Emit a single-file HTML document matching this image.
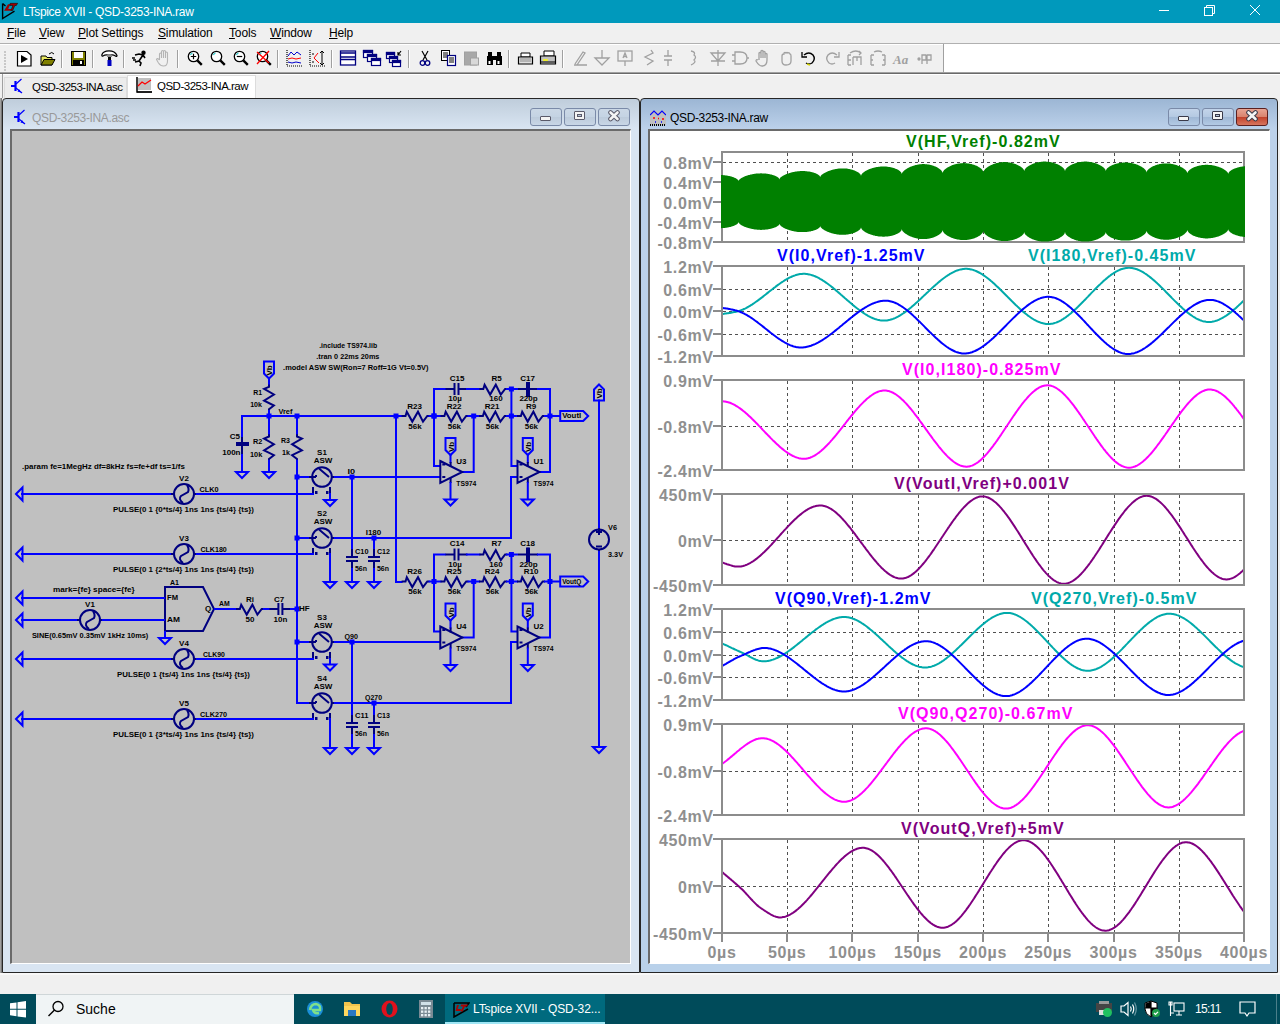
<!DOCTYPE html><html><head><meta charset="utf-8"><style>
*{box-sizing:border-box}
html,body{margin:0;padding:0}
body{width:1280px;height:1024px;overflow:hidden;position:relative;background:#f0f0f0;font-family:"Liberation Sans",sans-serif;}
.abs{position:absolute}
#title{left:0;top:0;width:1280px;height:23px;background:#0099bc;color:#fff;font-size:12px;letter-spacing:-0.3px}
#menu{left:0;top:23px;width:1280px;height:21px;background:#f0f0f0;border-bottom:1px solid #b0b0b0;font-size:12px;color:#000}
#menu span{position:absolute;top:3px;letter-spacing:-0.15px}
#tb{left:0;top:44px;width:943px;height:29px;background:#f0f0f0;border-top:1px solid #fff}
#tbw{left:943px;top:44px;width:337px;height:29px;background:#fff;border-left:1px solid #a0a0a0}
#tabs{left:0;top:73px;width:1280px;height:25px;background:#f0f0f0;}
#mdi{left:0;top:98px;width:1280px;height:875px;background:#f0f0f0;border-left:1px solid #a0a0a0}
#mdi2{left:1px;top:98px;width:1px;height:875px;background:#787878}
#strip{left:0;top:973px;width:1280px;height:21px;background:#f0f0f0;border-top:2px solid #f8f8f8}
.win{border:1px solid #262626;border-radius:4px 4px 0 0;overflow:hidden}
.wl{background:linear-gradient(#bfcddb,#d9e5f2 30px,#d9e5f2)}
.wr{background:linear-gradient(#9cb6d4,#bcd1ea 30px,#b9d1ea)}
.canvas{border-top:2px solid #6a6a6a;border-left:2px solid #6a6a6a;border-right:1px solid #fff;border-bottom:1px solid #fff}
.wt{font-size:12px;letter-spacing:-0.35px}
.tl{font:bold 16px "Liberation Sans",sans-serif;fill:#8f8f8f;letter-spacing:0.6px}
.tt{font:bold 16px "Liberation Sans",sans-serif;letter-spacing:1.05px}
.st{font:bold 8px "Liberation Sans",sans-serif}
.btn{position:absolute;top:9px;width:32px;height:18px;border:1px solid #7a8aa8;border-radius:3px}
</style></head><body><div id="title" class="abs"><span class="abs" style="left:23px;top:5px">LTspice XVII - QSD-3253-INA.raw</span></div><svg class="abs" style="left:0;top:0" width="20" height="20" viewBox="0 0 20 20"><path d="M2.6,3.5 V18.5 L14.5,11.2 M2.6,3.5 L5.5,6" stroke="#000" stroke-width="1.4" fill="none"/><path d="M8,4.2 H10.2 L8.2,9 H11.8 L11,10.8 H4 Z" fill="#a00000"/><path d="M10.2,3.3 H17.7 L16.3,5.5 H14.8 L12.7,10.5 H10.9 L12.9,5.5 H9.8 Z" fill="#a00000" stroke="#000" stroke-width="0.5"/></svg><svg class="abs" style="left:1150px;top:0" width="130" height="22" viewBox="1150 0 130 22" stroke="#fff" fill="none" stroke-width="1"><path d="M1159,10.5 H1169"/><rect x="1204.5" y="7.5" width="8" height="8"/><path d="M1206.5,7.5 V5.5 H1214.5 V13.5 H1212.5"/><path d="M1250,5 L1260,15 M1260,5 L1250,15"/></svg><div id="menu" class="abs"><span style="left:7px"><u style="text-decoration-thickness:1px;text-underline-offset:1px">F</u>ile</span><span style="left:39px"><u style="text-decoration-thickness:1px;text-underline-offset:1px">V</u>iew</span><span style="left:78px"><u style="text-decoration-thickness:1px;text-underline-offset:1px">P</u>lot Settings</span><span style="left:158px"><u style="text-decoration-thickness:1px;text-underline-offset:1px">S</u>imulation</span><span style="left:229px"><u style="text-decoration-thickness:1px;text-underline-offset:1px">T</u>ools</span><span style="left:270px"><u style="text-decoration-thickness:1px;text-underline-offset:1px">W</u>indow</span><span style="left:329px"><u style="text-decoration-thickness:1px;text-underline-offset:1px">H</u>elp</span></div><div id="tb" class="abs"></div><div id="tbw" class="abs"></div><svg class="abs" style="left:0;top:44px" width="943" height="29" viewBox="0 44 943 29"><rect x="4" y="51" width="2" height="2" fill="#c8c8c8"/><rect x="4" y="54" width="2" height="2" fill="#c8c8c8"/><rect x="4" y="57" width="2" height="2" fill="#c8c8c8"/><rect x="4" y="60" width="2" height="2" fill="#c8c8c8"/><rect x="4" y="63" width="2" height="2" fill="#c8c8c8"/><rect x="4" y="66" width="2" height="2" fill="#c8c8c8"/><rect x="4" y="69" width="2" height="2" fill="#c8c8c8"/><rect x="61.0" y="50" width="1" height="18" fill="#a0a0a0"/><rect x="62.0" y="50" width="1" height="18" fill="#fff"/><rect x="92.0" y="50" width="1" height="18" fill="#a0a0a0"/><rect x="93.0" y="50" width="1" height="18" fill="#fff"/><rect x="123.0" y="50" width="1" height="18" fill="#a0a0a0"/><rect x="124.0" y="50" width="1" height="18" fill="#fff"/><rect x="177.0" y="50" width="1" height="18" fill="#a0a0a0"/><rect x="178.0" y="50" width="1" height="18" fill="#fff"/><rect x="277.0" y="50" width="1" height="18" fill="#a0a0a0"/><rect x="278.0" y="50" width="1" height="18" fill="#fff"/><rect x="331.0" y="50" width="1" height="18" fill="#a0a0a0"/><rect x="332.0" y="50" width="1" height="18" fill="#fff"/><rect x="408.0" y="50" width="1" height="18" fill="#a0a0a0"/><rect x="409.0" y="50" width="1" height="18" fill="#fff"/><rect x="508.0" y="50" width="1" height="18" fill="#a0a0a0"/><rect x="509.0" y="50" width="1" height="18" fill="#fff"/><rect x="562.0" y="50" width="1" height="18" fill="#a0a0a0"/><rect x="563.0" y="50" width="1" height="18" fill="#fff"/><g transform="translate(17,51)"><path d="M0.5,0.5 H10 L14,4 V15 H0.5 Z" fill="#fff" stroke="#000" stroke-width="1.2"/><path d="M4,4 L11,8 L4,12 Z" fill="#000"/></g><g transform="translate(40,51)"><path d="M1,5 H6 L7,6.5 H12 V14 H1 Z" fill="#e8e860" stroke="#000" stroke-width="1"/><path d="M1,14 L4,8.5 H15 L12,14 Z" fill="#808000" stroke="#000" stroke-width="1"/><path d="M9,3 Q12,0 14,3" stroke="#000" fill="none" stroke-width="1"/></g><g transform="translate(71,51)"><rect x="0.5" y="0.5" width="14" height="14" fill="#808000" stroke="#000" stroke-width="1"/><rect x="3" y="1" width="9" height="6" fill="#fff"/><rect x="2" y="9" width="11" height="5" fill="#000"/><rect x="9" y="10" width="2" height="3" fill="#fff"/></g><g transform="translate(101,50)"><path d="M0.8,5 Q2,0.8 8,0.8 Q14,0.8 16,5.5 Q16,7 14.5,6 Q12,4.5 10,5 H7 Q4,4.5 2,6 Q0.8,6.5 0.8,5 Z" fill="#fff" stroke="#000" stroke-width="1.2"/><rect x="6" y="5" width="5" height="2" fill="#888"/><rect x="7" y="7" width="3" height="3" fill="#000"/><rect x="6.5" y="10" width="4" height="6" fill="#0000c0"/></g><g transform="translate(132,51)" stroke="#000" stroke-width="1.6" fill="none"><circle cx="11.5" cy="1.8" r="1.4" fill="#000"/><path d="M3,4 L7,3 L11,4 L13,7 M11,4 L7,10 L3,11 M7,10 L9,12 L8,15 M0,7 H3 M1,9 H4"/></g><g transform="translate(156,50)" stroke="#b4b4b4" stroke-width="1.1" fill="none"><path d="M3.5,10 V4 Q3.5,3 4.5,3 Q5.5,3 5.5,4 V8 M5.5,8 V1.5 Q5.5,0.5 6.5,0.5 Q7.5,0.5 7.5,1.5 V8 M7.5,8 V1.5 Q7.5,0.5 8.5,0.5 Q9.5,0.5 9.5,1.5 V8 M9.5,8 V3 Q9.5,2 10.5,2 Q11.5,2 11.5,3 V11 Q11.5,16 7.5,16 Q4.5,16 2.5,13 L0.5,9.5 Q1,8 2.5,9 L3.5,10"/></g><g transform="translate(187,50)"><circle cx="6.5" cy="6.5" r="5.2" fill="#fff" stroke="#000" stroke-width="1.3"/><path d="M3.5,5 Q4,3.5 5.5,3" stroke="#2cc" stroke-width="1.2" fill="none"/><path d="M10.3,10.3 L14.8,14.8" stroke="#000" stroke-width="2.4"/><path d="M3.8,6.5 H9.2 M6.5,3.8 V9.2" stroke="#000" stroke-width="1.2"/></g><g transform="translate(210,50)"><circle cx="6.5" cy="6.5" r="5.2" fill="#fff" stroke="#000" stroke-width="1.3"/><path d="M3.5,5 Q4,3.5 5.5,3" stroke="#2cc" stroke-width="1.2" fill="none"/><path d="M10.3,10.3 L14.8,14.8" stroke="#000" stroke-width="2.4"/></g><g transform="translate(233,50)"><circle cx="6.5" cy="6.5" r="5.2" fill="#fff" stroke="#000" stroke-width="1.3"/><path d="M3.5,5 Q4,3.5 5.5,3" stroke="#2cc" stroke-width="1.2" fill="none"/><path d="M10.3,10.3 L14.8,14.8" stroke="#000" stroke-width="2.4"/><path d="M3.8,6.5 H9.2" stroke="#000" stroke-width="1.2"/></g><g transform="translate(256,50)"><circle cx="6.5" cy="6.5" r="5.2" fill="#fff" stroke="#000" stroke-width="1.3"/><path d="M3.5,5 Q4,3.5 5.5,3" stroke="#2cc" stroke-width="1.2" fill="none"/><path d="M10.3,10.3 L14.8,14.8" stroke="#000" stroke-width="2.4"/><path d="M1,2 L13,13 M13,1 L1,14" stroke="#f00" stroke-width="1.3"/></g><g transform="translate(286,50)"><path d="M1,0 V16 H16" stroke="#000" stroke-width="1.2" fill="none" stroke-dasharray="1,1"/><path d="M2,6 L5,2 L8,5 L11,2 L15,5" stroke="#00c" fill="none"/><path d="M2,9 L6,8 L10,9 L15,8" stroke="#f00" fill="none"/><path d="M2,12 L6,13 L10,12 L15,13" stroke="#00c" fill="none"/></g><g transform="translate(309,50)"><path d="M1,0 V16 H16" stroke="#000" stroke-width="1.2" fill="none" stroke-dasharray="1,1"/><path d="M5,8 L9,3 M5,8 L10,13" stroke="#f00" fill="none"/><path d="M13,1 V15 M11,3 L13,1 L15,3 M11,13 L13,15 L15,13" stroke="#000" fill="none"/><path d="M3,4 H5 M3,12 H5" stroke="#000"/></g><g transform="translate(340,50)" fill="none" stroke="#000080" stroke-width="1.3"><rect x="0.5" y="1" width="15" height="14" fill="#fff"/><path d="M0.5,3 H15.5 M0.5,7 H15.5 M0.5,9.5 H15.5" stroke-width="1.6"/></g><g transform="translate(363,50)" fill="#fff" stroke="#000080" stroke-width="1.2"><rect x="0.5" y="0.5" width="9" height="7"/><rect x="0.5" y="0.5" width="9" height="2" fill="#000080"/><rect x="4.5" y="4.5" width="9" height="7"/><rect x="4.5" y="4.5" width="9" height="2" fill="#000080"/><rect x="8.5" y="8.5" width="9" height="7"/><rect x="8.5" y="8.5" width="9" height="2" fill="#000080"/></g><g transform="translate(386,50)" fill="#fff" stroke="#000080" stroke-width="1.2"><rect x="0.5" y="2.5" width="8" height="6"/><rect x="0.5" y="2.5" width="8" height="2" fill="#000080"/><rect x="3.5" y="6.5" width="8" height="6"/><rect x="3.5" y="6.5" width="8" height="2" fill="#000080"/><rect x="6.5" y="10.5" width="8" height="6"/><rect x="6.5" y="10.5" width="8" height="2" fill="#000080"/><path d="M12,5 L15,1 M12,2 V5 H15" stroke="#000" fill="none"/></g><g transform="translate(420,50)" fill="none"><path d="M2,1 L7,10 M8,1 L3,10" stroke="#000" stroke-width="1.2"/><circle cx="2.5" cy="13" r="2.3" stroke="#000080" stroke-width="1.3"/><circle cx="7.5" cy="13" r="2.3" stroke="#000080" stroke-width="1.3"/></g><g transform="translate(441,50)"><rect x="0.5" y="0.5" width="8" height="10" fill="#fff" stroke="#000"/><path d="M2,3 H7 M2,5 H7 M2,7 H7" stroke="#000"/><rect x="6.5" y="5.5" width="8" height="10" fill="#fff" stroke="#000080" stroke-width="1.2"/><path d="M8,8 H13 M8,10 H13 M8,12 H13" stroke="#000"/></g><g transform="translate(464,50)"><rect x="0.5" y="2" width="12" height="13" fill="#a8a8a8" stroke="#a0a0a0"/><rect x="6.5" y="8" width="8" height="7" fill="#d8d8d8" stroke="#a0a0a0"/></g><g transform="translate(487,50)" fill="#000"><rect x="1" y="2" width="4" height="4"/><rect x="10" y="2" width="4" height="4"/><rect x="0" y="6" width="6" height="9"/><rect x="9" y="6" width="6" height="9"/><rect x="5" y="6" width="5" height="4"/><rect x="1.5" y="11" width="2" height="3" fill="#fff"/><rect x="10.5" y="11" width="2" height="3" fill="#fff"/></g><g transform="translate(518,50)"><path d="M3,3 H12 V7 H3 Z" fill="#fff" stroke="#000"/><path d="M0.5,7 H14.5 V14 H0.5 Z" fill="#e0e0e0" stroke="#000" stroke-width="1.2"/><path d="M2,9 H13 M2,11 H13" stroke="#888"/></g><g transform="translate(540,50)"><path d="M4,1 H14 V6 H4 Z" fill="#fff" stroke="#000"/><path d="M0.5,6 H15.5 V14 H0.5 Z" fill="#c0c0c0" stroke="#000" stroke-width="1.2"/><path d="M3,10 H8" stroke="#ff0" stroke-width="1.5"/><path d="M1,12 H15" stroke="#000"/></g><g transform="translate(572,50)" fill="none" stroke="#a0a0a0" stroke-width="1.3"><path d="M2,15 H15 M3,14 L11,2 L13,3 L5,15"/></g><g transform="translate(594,50)" fill="none" stroke="#a0a0a0" stroke-width="1.3"><path d="M8,0 V8 M1,8 H15 L8,15 Z"/></g><g transform="translate(617,50)" fill="none" stroke="#a0a0a0" stroke-width="1.3"><rect x="1" y="1" width="14" height="10"/><path d="M8,11 V16 M6,8 L8,3 L10,8 M6.5,6.5 H9.5"/></g><g transform="translate(643,50)" fill="none" stroke="#a0a0a0" stroke-width="1.3"><path d="M8,0 L10,3 L2,7 L10,11 L4,15"/></g><g transform="translate(664,50)" fill="none" stroke="#a0a0a0" stroke-width="1.3"><path d="M0,6 H8 M0,10 H8 M4,0 V6 M4,10 V16"/></g><g transform="translate(690,50)" fill="none" stroke="#a0a0a0" stroke-width="1.3"><path d="M1,1 Q6,2 4,5 Q7,7 4,10 Q7,12 1,15"/></g><g transform="translate(710,50)" fill="none" stroke="#a0a0a0" stroke-width="1.3"><path d="M1,3 H15 L8,11 Z M1,11 H15 M8,0 V16"/></g><g transform="translate(732,50)" fill="none" stroke="#a0a0a0" stroke-width="1.3"><path d="M3,2 H8 Q15,2 15,8 Q15,14 8,14 H3 Z M0,5 H3 M0,11 H3 M15,8 H17"/></g><g transform="translate(755,50)" fill="none" stroke="#a0a0a0" stroke-width="1.3"><path d="M4,10 V3 Q5,2 6,3 V8 V1 Q7,0 8,1 V8 V2 Q9,1 10,2 V8 V4 Q11,3 12,4 V10 Q12,16 7,16 Q4,16 1,11 Q1,9 3,10"/></g><g transform="translate(779,50)" fill="none" stroke="#a0a0a0" stroke-width="1.3"><path d="M3,6 Q3,4 5,4 V3 Q6,2 7,3 Q8,2 9,3 Q10,2 11,4 Q12,4 12,6 V11 Q12,15 7,15 Q3,15 3,11 Z"/></g><g transform="translate(801,50)" fill="none" stroke="#000" stroke-width="1.4"><path d="M3,5 Q8,1 12,5 Q15,9 11,13 Q8,15 5,13"/><path d="M1,2 V7 H6" stroke-width="1.3"/><path d="M6,14 L9,15" stroke="#cc0" stroke-width="1.5"/></g><g transform="translate(824,50)" fill="none" stroke="#a0a0a0" stroke-width="1.3"><path d="M13,5 Q8,1 4,5 Q1,9 5,13 Q8,15 11,13 M15,2 V7 H10"/></g><g transform="translate(847,50)" fill="none" stroke="#a0a0a0" stroke-width="1.3"><path d="M1,5 V15 M1,5 H4 M1,10 H4 M1,15 H4 M6,7 V15 M6,7 H14 V15 M10,7 V11 M3,3 Q9,-1 14,3 M12,1 L14,3 L12,5"/></g><g transform="translate(870,50)" fill="none" stroke="#a0a0a0" stroke-width="1.3"><path d="M1,5 V15 M1,5 H4 M1,10 H3 M1,15 H4 M15,5 V15 M15,5 H12 M15,10 H13 M15,15 H12 M4,2 Q8,0 12,2"/></g><text x="893" y="64" font-family="Liberation Serif" font-style="italic" font-weight="bold" font-size="13" fill="#a0a0a0">Aa</text><g transform="translate(916,50)" fill="none" stroke="#a0a0a0" stroke-width="1.3"><circle cx="3" cy="9" r="1" fill="#a0a0a0"/><path d="M6,5 H10 V10 H6 Z M6,5 V14 M11,5 H15 V10 H11 M11,5 V14"/></g></svg><div id="tabs" class="abs"></div><div class="abs" style="left:0;top:72px;width:1280px;height:1px;background:#a0a0a0"></div><div class="abs" style="left:0;top:73px;width:1280px;height:1px;background:#696969"></div><div class="abs" style="left:0;top:74px;width:1280px;height:1px;background:#fff"></div><div class="abs" style="left:2px;top:74px;width:1px;height:24px;background:#a0a0a0"></div><div class="abs" style="left:4px;top:77px;width:123px;height:21px;background:#ececec;border:1px solid #dcdcdc;border-bottom:none"></div><div class="abs" style="left:127px;top:75px;width:129px;height:23px;background:#fff;border:1px solid #dcdcdc;border-bottom:none"></div><svg class="abs" style="left:11px;top:78px" width="14" height="16" viewBox="0 0 14 16"><path d="M0,8 H4 M4.5,3 V13" stroke="#0000ff" stroke-width="2.2"/><path d="M5,6 L10.5,1 M5,10 L11,15" stroke="#0000ff" stroke-width="1.2"/><path d="M8,11 L10,14.5 L6.5,13.5 Z" fill="#0000ff"/></svg><div class="abs" style="left:32px;top:81px;color:#000;font-size:11.5px;letter-spacing:-0.5px">QSD-3253-INA.asc</div><svg class="abs" style="left:136px;top:77px" width="16" height="16" viewBox="0 0 16 16"><rect x="2" y="1" width="13" height="12" fill="#c0c0c0"/><path d="M1,0 V15 H16" stroke="#000" stroke-width="1.5" fill="none"/><path d="M1.5,15 H16" stroke="#000" stroke-width="2" stroke-dasharray="1,1"/><path d="M2,9 L6,5 L9,7 L15,3" stroke="#f00" stroke-width="1.3" fill="none"/></svg><div class="abs" style="left:157px;top:80px;color:#000;font-size:11.5px;letter-spacing:-0.5px">QSD-3253-INA.raw</div><div id="mdi" class="abs"></div><div id="mdi2" class="abs"></div><div class="abs win wl" style="left:2px;top:98px;width:638px;height:875px"></div><svg class="abs" style="left:14px;top:109px" width="14" height="16" viewBox="0 0 14 16"><path d="M0,8 H4 M4.5,3 V13" stroke="#0000ff" stroke-width="2.2"/><path d="M5,6 L10.5,1 M5,10 L11,15" stroke="#0000ff" stroke-width="1.2"/><path d="M8,11 L10,14.5 L6.5,13.5 Z" fill="#0000ff"/></svg><div class="abs wt" style="left:32px;top:111px;color:#999">QSD-3253-INA.asc</div><div class="abs canvas" style="left:10px;top:129px;width:621px;height:835px;background:#c0c0c0"></div><div class="btn" style="left:530px;top:108px;background:linear-gradient(#cbd8e6,#c4d3e3 50%,#bccbdb 50%,#c8d6e6)"></div><div class="abs" style="left:540px;top:116px;width:11px;height:5px;background:#f4f4f4;border:1px solid #5a5a6a;border-radius:1px"></div><div class="btn" style="left:564px;top:108px;background:linear-gradient(#cbd8e6,#c4d3e3 50%,#bccbdb 50%,#c8d6e6)"></div><div class="abs" style="left:574px;top:111px;width:11px;height:9px;background:#f4f4f4;border:1px solid #5a5a6a;border-radius:1px"><div class="abs" style="left:2px;top:2px;width:5px;height:3px;border:1px solid #5a5a6a;background:#b8c8dc"></div></div><div class="btn" style="left:598px;top:108px;background:linear-gradient(#cbd8e6,#c4d3e3 50%,#bccbdb 50%,#c8d6e6)"></div><svg class="abs" style="left:607px;top:110px" width="14" height="12" viewBox="0 0 14 12"><path d="M3.5,2.5 L10.5,9 M10.5,2.5 L3.5,9" stroke="#5a5a6a" stroke-width="4.6" stroke-linecap="round"/><path d="M3.5,2.5 L10.5,9 M10.5,2.5 L3.5,9" stroke="#f4f4f4" stroke-width="2.6" stroke-linecap="round"/></svg><div class="abs win wr" style="left:640px;top:98px;width:638px;height:875px"></div><svg class="abs" style="left:650px;top:110px" width="16" height="16" viewBox="0 0 16 16"><rect x="0" y="1" width="16" height="14" fill="#c0c0c0"/><path d="M0,5 L4,1 L8,5 L12,1 L16,5" stroke="#0000ff" stroke-width="1.2" fill="none"/><path d="M3,8 H5 M12,9 H14 M8,8.5 H9" stroke="#f00" stroke-width="1.3"/><path d="M5,12 H6 M11,12 H12" stroke="#00f" stroke-width="1.3"/><path d="M0,15 H16" stroke="#000" stroke-width="2" stroke-dasharray="1,1"/></svg><div class="abs wt" style="left:670px;top:111px;color:#000">QSD-3253-INA.raw</div><div class="abs canvas" style="left:648px;top:129px;width:622px;height:835px;background:#fff"></div><div class="btn" style="left:1168px;top:108px;background:linear-gradient(#c3d4ea,#b4c9e2 50%,#9fb7d5 50%,#b3cae4)"></div><div class="abs" style="left:1178px;top:116px;width:11px;height:5px;background:#f4f4f4;border:1px solid #3a3a4a;border-radius:1px"></div><div class="btn" style="left:1202px;top:108px;background:linear-gradient(#c3d4ea,#b4c9e2 50%,#9fb7d5 50%,#b3cae4)"></div><div class="abs" style="left:1212px;top:111px;width:11px;height:9px;background:#f4f4f4;border:1px solid #3a3a4a;border-radius:1px"><div class="abs" style="left:2px;top:2px;width:5px;height:3px;border:1px solid #3a3a4a;background:#b8c8dc"></div></div><div class="btn" style="left:1236px;top:108px;border-color:#5a2020;background:linear-gradient(#e8a493,#d8826d 50%,#c0402a 50%,#d7755e)"></div><svg class="abs" style="left:1245px;top:110px" width="14" height="12" viewBox="0 0 14 12"><path d="M3.5,2.5 L10.5,9 M10.5,2.5 L3.5,9" stroke="#3a3a4a" stroke-width="4.6" stroke-linecap="round"/><path d="M3.5,2.5 L10.5,9 M10.5,2.5 L3.5,9" stroke="#f4f4f4" stroke-width="2.6" stroke-linecap="round"/></svg><svg class="abs" style="left:650px;top:131px" width="619" height="833" viewBox="650 131 619 833"><rect x="650" y="131" width="619" height="833" fill="#fff"/><path d="M787.5,153 V241 M852.5,153 V241 M918.5,153 V241 M983.5,153 V241 M1048.5,153 V241 M1114.5,153 V241 M1179.5,153 V241 M723,162.5 H1243 M723,182.5 H1243 M723,202.5 H1243 M723,222.5 H1243" stroke="#505050" stroke-width="1" stroke-dasharray="3,3" fill="none"/><path d="M787.5,267 V355 M852.5,267 V355 M918.5,267 V355 M983.5,267 V355 M1048.5,267 V355 M1114.5,267 V355 M1179.5,267 V355 M723,289.5 H1243 M723,311.5 H1243 M723,334.5 H1243" stroke="#505050" stroke-width="1" stroke-dasharray="3,3" fill="none"/><path d="M787.5,381 V469 M852.5,381 V469 M918.5,381 V469 M983.5,381 V469 M1048.5,381 V469 M1114.5,381 V469 M1179.5,381 V469 M723,426.5 H1243" stroke="#505050" stroke-width="1" stroke-dasharray="3,3" fill="none"/><path d="M787.5,495 V584 M852.5,495 V584 M918.5,495 V584 M983.5,495 V584 M1048.5,495 V584 M1114.5,495 V584 M1179.5,495 V584 M723,540.5 H1243" stroke="#505050" stroke-width="1" stroke-dasharray="3,3" fill="none"/><path d="M787.5,610 V699 M852.5,610 V699 M918.5,610 V699 M983.5,610 V699 M1048.5,610 V699 M1114.5,610 V699 M1179.5,610 V699 M723,632.5 H1243 M723,655.5 H1243 M723,677.5 H1243" stroke="#505050" stroke-width="1" stroke-dasharray="3,3" fill="none"/><path d="M787.5,725 V814 M852.5,725 V814 M918.5,725 V814 M983.5,725 V814 M1048.5,725 V814 M1114.5,725 V814 M1179.5,725 V814 M723,771.5 H1243" stroke="#505050" stroke-width="1" stroke-dasharray="3,3" fill="none"/><path d="M787.5,840 V932 M852.5,840 V932 M918.5,840 V932 M983.5,840 V932 M1048.5,840 V932 M1114.5,840 V932 M1179.5,840 V932 M723,886.5 H1243" stroke="#505050" stroke-width="1" stroke-dasharray="3,3" fill="none"/><path d="M722.0,314.0 L723.0,313.9 L724.0,313.8 L725.0,313.6 L726.0,313.5 L727.0,313.3 L728.0,313.2 L729.0,313.0 L730.0,312.9 L731.0,312.7 L732.0,312.5 L733.0,312.3 L734.0,312.1 L735.0,311.9 L736.0,311.7 L737.0,311.5 L738.0,311.3 L739.0,311.0 L740.0,310.6 L741.0,310.3 L742.0,309.9 L743.0,309.5 L744.0,309.0 L745.0,308.6 L746.0,308.1 L747.0,307.5 L748.0,307.0 L749.0,306.4 L750.0,305.8 L751.0,305.2 L752.0,304.6 L753.0,303.9 L754.0,303.2 L755.0,302.5 L756.0,301.8 L757.0,301.1 L758.0,300.4 L759.0,299.6 L760.0,298.9 L761.0,298.1 L762.0,297.4 L763.0,296.6 L764.0,295.8 L765.0,295.0 L766.0,294.2 L767.0,293.4 L768.0,292.6 L769.0,291.8 L770.0,291.0 L771.0,290.2 L772.0,289.5 L773.0,288.7 L774.0,287.9 L775.0,287.2 L776.0,286.4 L777.0,285.6 L778.0,284.9 L779.0,284.2 L780.0,283.5 L781.0,282.8 L782.0,282.1 L783.0,281.5 L784.0,280.8 L785.0,280.2 L786.0,279.6 L787.0,279.0 L788.0,278.5 L789.0,277.9 L790.0,277.4 L791.0,277.0 L792.0,276.5 L793.0,276.1 L794.0,275.7 L795.0,275.4 L796.0,275.0 L797.0,274.7 L798.0,274.5 L799.0,274.3 L800.0,274.1 L801.0,274.0 L802.0,273.9 L803.0,273.8 L804.0,273.8 L805.0,273.8 L806.0,273.9 L807.0,274.0 L808.0,274.2 L809.0,274.4 L810.0,274.6 L811.0,274.9 L812.0,275.2 L813.0,275.5 L814.0,275.9 L815.0,276.3 L816.0,276.7 L817.0,277.2 L818.0,277.7 L819.0,278.2 L820.0,278.8 L821.0,279.3 L822.0,279.9 L823.0,280.6 L824.0,281.2 L825.0,281.9 L826.0,282.6 L827.0,283.3 L828.0,284.0 L829.0,284.8 L830.0,285.5 L831.0,286.3 L832.0,287.1 L833.0,287.9 L834.0,288.7 L835.0,289.5 L836.0,290.4 L837.0,291.2 L838.0,292.1 L839.0,292.9 L840.0,293.8 L841.0,294.7 L842.0,295.5 L843.0,296.4 L844.0,297.3 L845.0,298.2 L846.0,299.0 L847.0,299.9 L848.0,300.8 L849.0,301.6 L850.0,302.5 L851.0,303.3 L852.0,304.2 L853.0,305.0 L854.0,305.9 L855.0,306.7 L856.0,307.5 L857.0,308.3 L858.0,309.0 L859.0,309.8 L860.0,310.5 L861.0,311.3 L862.0,312.0 L863.0,312.7 L864.0,313.3 L865.0,314.0 L866.0,314.6 L867.0,315.2 L868.0,315.8 L869.0,316.3 L870.0,316.8 L871.0,317.3 L872.0,317.8 L873.0,318.2 L874.0,318.6 L875.0,319.0 L876.0,319.3 L877.0,319.6 L878.0,319.9 L879.0,320.1 L880.0,320.3 L881.0,320.4 L882.0,320.5 L883.0,320.6 L884.0,320.6 L885.0,320.6 L886.0,320.5 L887.0,320.4 L888.0,320.2 L889.0,320.0 L890.0,319.8 L891.0,319.5 L892.0,319.2 L893.0,318.9 L894.0,318.5 L895.0,318.1 L896.0,317.6 L897.0,317.1 L898.0,316.6 L899.0,316.0 L900.0,315.5 L901.0,314.8 L902.0,314.2 L903.0,313.5 L904.0,312.9 L905.0,312.1 L906.0,311.4 L907.0,310.7 L908.0,309.9 L909.0,309.1 L910.0,308.3 L911.0,307.5 L912.0,306.6 L913.0,305.7 L914.0,304.9 L915.0,304.0 L916.0,303.1 L917.0,302.2 L918.0,301.3 L919.0,300.3 L920.0,299.4 L921.0,298.5 L922.0,297.5 L923.0,296.6 L924.0,295.6 L925.0,294.7 L926.0,293.8 L927.0,292.8 L928.0,291.9 L929.0,290.9 L930.0,290.0 L931.0,289.1 L932.0,288.1 L933.0,287.2 L934.0,286.3 L935.0,285.4 L936.0,284.5 L937.0,283.7 L938.0,282.8 L939.0,281.9 L940.0,281.1 L941.0,280.3 L942.0,279.5 L943.0,278.7 L944.0,278.0 L945.0,277.3 L946.0,276.5 L947.0,275.9 L948.0,275.2 L949.0,274.6 L950.0,273.9 L951.0,273.4 L952.0,272.8 L953.0,272.3 L954.0,271.8 L955.0,271.3 L956.0,270.9 L957.0,270.5 L958.0,270.2 L959.0,269.9 L960.0,269.6 L961.0,269.4 L962.0,269.2 L963.0,269.0 L964.0,268.9 L965.0,268.8 L966.0,268.8 L967.0,268.8 L968.0,268.9 L969.0,269.0 L970.0,269.2 L971.0,269.4 L972.0,269.6 L973.0,269.9 L974.0,270.3 L975.0,270.6 L976.0,271.0 L977.0,271.5 L978.0,272.0 L979.0,272.5 L980.0,273.0 L981.0,273.6 L982.0,274.2 L983.0,274.9 L984.0,275.6 L985.0,276.3 L986.0,277.0 L987.0,277.7 L988.0,278.5 L989.0,279.3 L990.0,280.1 L991.0,281.0 L992.0,281.8 L993.0,282.7 L994.0,283.6 L995.0,284.5 L996.0,285.5 L997.0,286.4 L998.0,287.3 L999.0,288.3 L1000.0,289.3 L1001.0,290.3 L1002.0,291.2 L1003.0,292.2 L1004.0,293.2 L1005.0,294.2 L1006.0,295.2 L1007.0,296.2 L1008.0,297.3 L1009.0,298.3 L1010.0,299.3 L1011.0,300.3 L1012.0,301.3 L1013.0,302.2 L1014.0,303.2 L1015.0,304.2 L1016.0,305.2 L1017.0,306.1 L1018.0,307.1 L1019.0,308.0 L1020.0,308.9 L1021.0,309.8 L1022.0,310.7 L1023.0,311.6 L1024.0,312.4 L1025.0,313.2 L1026.0,314.0 L1027.0,314.8 L1028.0,315.6 L1029.0,316.3 L1030.0,317.0 L1031.0,317.7 L1032.0,318.4 L1033.0,319.0 L1034.0,319.6 L1035.0,320.1 L1036.0,320.7 L1037.0,321.2 L1038.0,321.6 L1039.0,322.0 L1040.0,322.4 L1041.0,322.8 L1042.0,323.1 L1043.0,323.3 L1044.0,323.6 L1045.0,323.7 L1046.0,323.9 L1047.0,324.0 L1048.0,324.0 L1049.0,324.0 L1050.0,323.9 L1051.0,323.8 L1052.0,323.7 L1053.0,323.5 L1054.0,323.2 L1055.0,322.9 L1056.0,322.6 L1057.0,322.2 L1058.0,321.8 L1059.0,321.3 L1060.0,320.8 L1061.0,320.3 L1062.0,319.7 L1063.0,319.1 L1064.0,318.4 L1065.0,317.8 L1066.0,317.1 L1067.0,316.3 L1068.0,315.6 L1069.0,314.8 L1070.0,314.0 L1071.0,313.2 L1072.0,312.3 L1073.0,311.4 L1074.0,310.5 L1075.0,309.6 L1076.0,308.7 L1077.0,307.7 L1078.0,306.8 L1079.0,305.8 L1080.0,304.8 L1081.0,303.8 L1082.0,302.8 L1083.0,301.8 L1084.0,300.7 L1085.0,299.7 L1086.0,298.7 L1087.0,297.6 L1088.0,296.6 L1089.0,295.5 L1090.0,294.5 L1091.0,293.4 L1092.0,292.4 L1093.0,291.4 L1094.0,290.3 L1095.0,289.3 L1096.0,288.3 L1097.0,287.3 L1098.0,286.3 L1099.0,285.3 L1100.0,284.4 L1101.0,283.4 L1102.0,282.5 L1103.0,281.5 L1104.0,280.6 L1105.0,279.8 L1106.0,278.9 L1107.0,278.1 L1108.0,277.2 L1109.0,276.4 L1110.0,275.7 L1111.0,274.9 L1112.0,274.2 L1113.0,273.6 L1114.0,272.9 L1115.0,272.3 L1116.0,271.7 L1117.0,271.2 L1118.0,270.6 L1119.0,270.2 L1120.0,269.7 L1121.0,269.3 L1122.0,269.0 L1123.0,268.7 L1124.0,268.4 L1125.0,268.2 L1126.0,268.0 L1127.0,267.9 L1128.0,267.8 L1129.0,267.8 L1130.0,267.8 L1131.0,267.9 L1132.0,268.0 L1133.0,268.2 L1134.0,268.4 L1135.0,268.7 L1136.0,269.0 L1137.0,269.3 L1138.0,269.7 L1139.0,270.1 L1140.0,270.6 L1141.0,271.1 L1142.0,271.6 L1143.0,272.2 L1144.0,272.8 L1145.0,273.5 L1146.0,274.1 L1147.0,274.8 L1148.0,275.6 L1149.0,276.3 L1150.0,277.1 L1151.0,277.9 L1152.0,278.7 L1153.0,279.6 L1154.0,280.4 L1155.0,281.3 L1156.0,282.2 L1157.0,283.1 L1158.0,284.1 L1159.0,285.0 L1160.0,286.0 L1161.0,287.0 L1162.0,287.9 L1163.0,288.9 L1164.0,289.9 L1165.0,290.9 L1166.0,292.0 L1167.0,293.0 L1168.0,294.0 L1169.0,295.0 L1170.0,296.0 L1171.0,297.0 L1172.0,298.1 L1173.0,299.1 L1174.0,300.1 L1175.0,301.1 L1176.0,302.1 L1177.0,303.0 L1178.0,304.0 L1179.0,305.0 L1180.0,305.9 L1181.0,306.8 L1182.0,307.8 L1183.0,308.7 L1184.0,309.5 L1185.0,310.4 L1186.0,311.3 L1187.0,312.1 L1188.0,312.9 L1189.0,313.6 L1190.0,314.4 L1191.0,315.1 L1192.0,315.8 L1193.0,316.5 L1194.0,317.1 L1195.0,317.7 L1196.0,318.3 L1197.0,318.8 L1198.0,319.3 L1199.0,319.7 L1200.0,320.2 L1201.0,320.5 L1202.0,320.9 L1203.0,321.2 L1204.0,321.4 L1205.0,321.6 L1206.0,321.8 L1207.0,321.9 L1208.0,322.0 L1209.0,322.0 L1210.0,322.0 L1211.0,321.9 L1212.0,321.8 L1213.0,321.6 L1214.0,321.4 L1215.0,321.1 L1216.0,320.8 L1217.0,320.5 L1218.0,320.1 L1219.0,319.7 L1220.0,319.2 L1221.0,318.7 L1222.0,318.2 L1223.0,317.6 L1224.0,317.0 L1225.0,316.4 L1226.0,315.8 L1227.0,315.1 L1228.0,314.4 L1229.0,313.6 L1230.0,312.9 L1231.0,312.1 L1232.0,311.3 L1233.0,310.5 L1234.0,309.6 L1235.0,308.8 L1236.0,307.9 L1237.0,307.0 L1238.0,306.1 L1239.0,305.1 L1240.0,304.2 L1241.0,303.3 L1242.0,302.3 L1243.0,301.3 L1244.0,300.4" stroke="#00aaaa" stroke-width="2" fill="none" stroke-linejoin="round"/><path d="M722.0,308.0 L723.0,308.1 L724.0,308.2 L725.0,308.3 L726.0,308.5 L727.0,308.6 L728.0,308.8 L729.0,309.0 L730.0,309.1 L731.0,309.4 L732.0,309.6 L733.0,309.8 L734.0,310.0 L735.0,310.3 L736.0,310.5 L737.0,310.8 L738.0,311.1 L739.0,311.4 L740.0,311.8 L741.0,312.2 L742.0,312.6 L743.0,313.1 L744.0,313.5 L745.0,314.1 L746.0,314.6 L747.0,315.2 L748.0,315.8 L749.0,316.4 L750.0,317.0 L751.0,317.7 L752.0,318.3 L753.0,319.0 L754.0,319.7 L755.0,320.5 L756.0,321.2 L757.0,321.9 L758.0,322.7 L759.0,323.5 L760.0,324.2 L761.0,325.0 L762.0,325.8 L763.0,326.6 L764.0,327.4 L765.0,328.2 L766.0,329.0 L767.0,329.8 L768.0,330.6 L769.0,331.4 L770.0,332.2 L771.0,333.0 L772.0,333.7 L773.0,334.5 L774.0,335.3 L775.0,336.0 L776.0,336.7 L777.0,337.5 L778.0,338.2 L779.0,338.9 L780.0,339.5 L781.0,340.2 L782.0,340.8 L783.0,341.4 L784.0,342.0 L785.0,342.6 L786.0,343.1 L787.0,343.7 L788.0,344.2 L789.0,344.6 L790.0,345.1 L791.0,345.5 L792.0,345.8 L793.0,346.2 L794.0,346.5 L795.0,346.7 L796.0,347.0 L797.0,347.2 L798.0,347.3 L799.0,347.4 L800.0,347.5 L801.0,347.5 L802.0,347.5 L803.0,347.4 L804.0,347.3 L805.0,347.2 L806.0,347.0 L807.0,346.8 L808.0,346.6 L809.0,346.3 L810.0,346.0 L811.0,345.7 L812.0,345.3 L813.0,344.9 L814.0,344.5 L815.0,344.1 L816.0,343.6 L817.0,343.1 L818.0,342.6 L819.0,342.0 L820.0,341.5 L821.0,340.9 L822.0,340.3 L823.0,339.7 L824.0,339.0 L825.0,338.3 L826.0,337.7 L827.0,337.0 L828.0,336.2 L829.0,335.5 L830.0,334.8 L831.0,334.0 L832.0,333.3 L833.0,332.5 L834.0,331.7 L835.0,330.9 L836.0,330.1 L837.0,329.3 L838.0,328.5 L839.0,327.7 L840.0,326.8 L841.0,326.0 L842.0,325.2 L843.0,324.3 L844.0,323.5 L845.0,322.7 L846.0,321.9 L847.0,321.0 L848.0,320.2 L849.0,319.4 L850.0,318.6 L851.0,317.8 L852.0,317.0 L853.0,316.2 L854.0,315.4 L855.0,314.6 L856.0,313.9 L857.0,313.1 L858.0,312.4 L859.0,311.7 L860.0,311.0 L861.0,310.3 L862.0,309.6 L863.0,308.9 L864.0,308.3 L865.0,307.7 L866.0,307.1 L867.0,306.5 L868.0,305.9 L869.0,305.4 L870.0,304.9 L871.0,304.4 L872.0,303.9 L873.0,303.5 L874.0,303.1 L875.0,302.7 L876.0,302.4 L877.0,302.1 L878.0,301.8 L879.0,301.5 L880.0,301.3 L881.0,301.1 L882.0,300.9 L883.0,300.8 L884.0,300.7 L885.0,300.7 L886.0,300.7 L887.0,300.7 L888.0,300.8 L889.0,301.0 L890.0,301.2 L891.0,301.4 L892.0,301.7 L893.0,302.0 L894.0,302.4 L895.0,302.8 L896.0,303.2 L897.0,303.7 L898.0,304.2 L899.0,304.8 L900.0,305.4 L901.0,306.0 L902.0,306.6 L903.0,307.3 L904.0,308.0 L905.0,308.7 L906.0,309.5 L907.0,310.3 L908.0,311.1 L909.0,311.9 L910.0,312.8 L911.0,313.6 L912.0,314.5 L913.0,315.4 L914.0,316.4 L915.0,317.3 L916.0,318.2 L917.0,319.2 L918.0,320.2 L919.0,321.2 L920.0,322.1 L921.0,323.1 L922.0,324.1 L923.0,325.1 L924.0,326.1 L925.0,327.2 L926.0,328.2 L927.0,329.2 L928.0,330.2 L929.0,331.2 L930.0,332.2 L931.0,333.1 L932.0,334.1 L933.0,335.1 L934.0,336.0 L935.0,337.0 L936.0,337.9 L937.0,338.8 L938.0,339.8 L939.0,340.6 L940.0,341.5 L941.0,342.4 L942.0,343.2 L943.0,344.0 L944.0,344.8 L945.0,345.5 L946.0,346.3 L947.0,347.0 L948.0,347.6 L949.0,348.3 L950.0,348.9 L951.0,349.5 L952.0,350.0 L953.0,350.5 L954.0,351.0 L955.0,351.5 L956.0,351.9 L957.0,352.2 L958.0,352.5 L959.0,352.8 L960.0,353.0 L961.0,353.2 L962.0,353.4 L963.0,353.5 L964.0,353.5 L965.0,353.5 L966.0,353.4 L967.0,353.3 L968.0,353.2 L969.0,353.0 L970.0,352.8 L971.0,352.5 L972.0,352.2 L973.0,351.8 L974.0,351.4 L975.0,351.0 L976.0,350.5 L977.0,350.0 L978.0,349.5 L979.0,348.9 L980.0,348.3 L981.0,347.7 L982.0,347.0 L983.0,346.3 L984.0,345.6 L985.0,344.9 L986.0,344.1 L987.0,343.3 L988.0,342.5 L989.0,341.7 L990.0,340.8 L991.0,340.0 L992.0,339.1 L993.0,338.2 L994.0,337.2 L995.0,336.3 L996.0,335.4 L997.0,334.4 L998.0,333.4 L999.0,332.5 L1000.0,331.5 L1001.0,330.5 L1002.0,329.5 L1003.0,328.5 L1004.0,327.5 L1005.0,326.5 L1006.0,325.5 L1007.0,324.4 L1008.0,323.4 L1009.0,322.4 L1010.0,321.4 L1011.0,320.4 L1012.0,319.4 L1013.0,318.4 L1014.0,317.4 L1015.0,316.5 L1016.0,315.5 L1017.0,314.6 L1018.0,313.6 L1019.0,312.7 L1020.0,311.8 L1021.0,310.9 L1022.0,310.0 L1023.0,309.1 L1024.0,308.3 L1025.0,307.5 L1026.0,306.7 L1027.0,305.9 L1028.0,305.1 L1029.0,304.4 L1030.0,303.7 L1031.0,303.0 L1032.0,302.4 L1033.0,301.8 L1034.0,301.2 L1035.0,300.6 L1036.0,300.1 L1037.0,299.6 L1038.0,299.1 L1039.0,298.7 L1040.0,298.4 L1041.0,298.0 L1042.0,297.7 L1043.0,297.4 L1044.0,297.2 L1045.0,297.1 L1046.0,296.9 L1047.0,296.8 L1048.0,296.8 L1049.0,296.8 L1050.0,296.9 L1051.0,297.0 L1052.0,297.2 L1053.0,297.4 L1054.0,297.6 L1055.0,297.9 L1056.0,298.3 L1057.0,298.7 L1058.0,299.1 L1059.0,299.6 L1060.0,300.1 L1061.0,300.7 L1062.0,301.3 L1063.0,301.9 L1064.0,302.6 L1065.0,303.3 L1066.0,304.0 L1067.0,304.8 L1068.0,305.6 L1069.0,306.4 L1070.0,307.2 L1071.0,308.1 L1072.0,309.0 L1073.0,309.9 L1074.0,310.8 L1075.0,311.8 L1076.0,312.7 L1077.0,313.7 L1078.0,314.7 L1079.0,315.7 L1080.0,316.7 L1081.0,317.8 L1082.0,318.8 L1083.0,319.9 L1084.0,320.9 L1085.0,322.0 L1086.0,323.1 L1087.0,324.2 L1088.0,325.2 L1089.0,326.3 L1090.0,327.4 L1091.0,328.5 L1092.0,329.5 L1093.0,330.6 L1094.0,331.7 L1095.0,332.7 L1096.0,333.7 L1097.0,334.8 L1098.0,335.8 L1099.0,336.8 L1100.0,337.8 L1101.0,338.8 L1102.0,339.7 L1103.0,340.6 L1104.0,341.6 L1105.0,342.5 L1106.0,343.3 L1107.0,344.2 L1108.0,345.0 L1109.0,345.8 L1110.0,346.6 L1111.0,347.3 L1112.0,348.0 L1113.0,348.7 L1114.0,349.3 L1115.0,349.9 L1116.0,350.5 L1117.0,351.0 L1118.0,351.5 L1119.0,352.0 L1120.0,352.4 L1121.0,352.8 L1122.0,353.1 L1123.0,353.4 L1124.0,353.6 L1125.0,353.8 L1126.0,353.9 L1127.0,354.0 L1128.0,354.0 L1129.0,354.0 L1130.0,353.9 L1131.0,353.8 L1132.0,353.6 L1133.0,353.4 L1134.0,353.2 L1135.0,352.9 L1136.0,352.5 L1137.0,352.2 L1138.0,351.8 L1139.0,351.3 L1140.0,350.8 L1141.0,350.3 L1142.0,349.8 L1143.0,349.2 L1144.0,348.6 L1145.0,348.0 L1146.0,347.3 L1147.0,346.6 L1148.0,345.9 L1149.0,345.1 L1150.0,344.4 L1151.0,343.6 L1152.0,342.8 L1153.0,341.9 L1154.0,341.1 L1155.0,340.2 L1156.0,339.3 L1157.0,338.4 L1158.0,337.5 L1159.0,336.6 L1160.0,335.6 L1161.0,334.7 L1162.0,333.7 L1163.0,332.8 L1164.0,331.8 L1165.0,330.8 L1166.0,329.8 L1167.0,328.8 L1168.0,327.8 L1169.0,326.9 L1170.0,325.9 L1171.0,324.9 L1172.0,323.9 L1173.0,322.9 L1174.0,321.9 L1175.0,320.9 L1176.0,320.0 L1177.0,319.0 L1178.0,318.1 L1179.0,317.1 L1180.0,316.2 L1181.0,315.3 L1182.0,314.4 L1183.0,313.5 L1184.0,312.7 L1185.0,311.8 L1186.0,311.0 L1187.0,310.2 L1188.0,309.4 L1189.0,308.6 L1190.0,307.9 L1191.0,307.2 L1192.0,306.5 L1193.0,305.8 L1194.0,305.2 L1195.0,304.6 L1196.0,304.0 L1197.0,303.5 L1198.0,303.0 L1199.0,302.5 L1200.0,302.0 L1201.0,301.6 L1202.0,301.3 L1203.0,301.0 L1204.0,300.7 L1205.0,300.4 L1206.0,300.2 L1207.0,300.1 L1208.0,300.0 L1209.0,299.9 L1210.0,299.9 L1211.0,299.9 L1212.0,300.0 L1213.0,300.1 L1214.0,300.3 L1215.0,300.5 L1216.0,300.8 L1217.0,301.1 L1218.0,301.4 L1219.0,301.8 L1220.0,302.2 L1221.0,302.7 L1222.0,303.2 L1223.0,303.7 L1224.0,304.3 L1225.0,304.9 L1226.0,305.5 L1227.0,306.2 L1228.0,306.8 L1229.0,307.5 L1230.0,308.3 L1231.0,309.0 L1232.0,309.8 L1233.0,310.6 L1234.0,311.5 L1235.0,312.3 L1236.0,313.2 L1237.0,314.0 L1238.0,314.9 L1239.0,315.9 L1240.0,316.8 L1241.0,317.7 L1242.0,318.7 L1243.0,319.6 L1244.0,320.6" stroke="#0000ff" stroke-width="2" fill="none" stroke-linejoin="round"/><path d="M722.0,401.3 L723.0,401.3 L724.0,401.4 L725.0,401.5 L726.0,401.7 L727.0,401.9 L728.0,402.2 L729.0,402.5 L730.0,402.8 L731.0,403.2 L732.0,403.7 L733.0,404.1 L734.0,404.6 L735.0,405.2 L736.0,405.8 L737.0,406.4 L738.0,407.0 L739.0,407.7 L740.0,408.4 L741.0,409.1 L742.0,409.9 L743.0,410.7 L744.0,411.5 L745.0,412.3 L746.0,413.2 L747.0,414.1 L748.0,415.0 L749.0,415.9 L750.0,416.8 L751.0,417.8 L752.0,418.8 L753.0,419.7 L754.0,420.7 L755.0,421.7 L756.0,422.8 L757.0,423.8 L758.0,424.8 L759.0,425.9 L760.0,426.9 L761.0,427.9 L762.0,429.0 L763.0,430.1 L764.0,431.1 L765.0,432.2 L766.0,433.2 L767.0,434.2 L768.0,435.3 L769.0,436.3 L770.0,437.3 L771.0,438.4 L772.0,439.4 L773.0,440.4 L774.0,441.3 L775.0,442.3 L776.0,443.3 L777.0,444.2 L778.0,445.1 L779.0,446.0 L780.0,446.9 L781.0,447.8 L782.0,448.6 L783.0,449.4 L784.0,450.2 L785.0,451.0 L786.0,451.7 L787.0,452.4 L788.0,453.1 L789.0,453.7 L790.0,454.3 L791.0,454.9 L792.0,455.5 L793.0,456.0 L794.0,456.4 L795.0,456.9 L796.0,457.3 L797.0,457.6 L798.0,457.9 L799.0,458.2 L800.0,458.4 L801.0,458.6 L802.0,458.7 L803.0,458.8 L804.0,458.8 L805.0,458.8 L806.0,458.7 L807.0,458.5 L808.0,458.3 L809.0,458.0 L810.0,457.7 L811.0,457.3 L812.0,456.9 L813.0,456.4 L814.0,455.9 L815.0,455.3 L816.0,454.7 L817.0,454.0 L818.0,453.3 L819.0,452.6 L820.0,451.8 L821.0,451.0 L822.0,450.1 L823.0,449.2 L824.0,448.3 L825.0,447.3 L826.0,446.3 L827.0,445.3 L828.0,444.2 L829.0,443.2 L830.0,442.1 L831.0,440.9 L832.0,439.8 L833.0,438.6 L834.0,437.5 L835.0,436.3 L836.0,435.1 L837.0,433.8 L838.0,432.6 L839.0,431.3 L840.0,430.1 L841.0,428.8 L842.0,427.6 L843.0,426.3 L844.0,425.0 L845.0,423.8 L846.0,422.5 L847.0,421.2 L848.0,420.0 L849.0,418.7 L850.0,417.5 L851.0,416.2 L852.0,415.0 L853.0,413.8 L854.0,412.6 L855.0,411.4 L856.0,410.2 L857.0,409.0 L858.0,407.9 L859.0,406.8 L860.0,405.7 L861.0,404.6 L862.0,403.6 L863.0,402.6 L864.0,401.6 L865.0,400.7 L866.0,399.7 L867.0,398.8 L868.0,398.0 L869.0,397.2 L870.0,396.4 L871.0,395.7 L872.0,395.0 L873.0,394.3 L874.0,393.7 L875.0,393.2 L876.0,392.7 L877.0,392.2 L878.0,391.8 L879.0,391.4 L880.0,391.1 L881.0,390.9 L882.0,390.7 L883.0,390.6 L884.0,390.5 L885.0,390.5 L886.0,390.6 L887.0,390.7 L888.0,390.9 L889.0,391.1 L890.0,391.5 L891.0,391.8 L892.0,392.3 L893.0,392.7 L894.0,393.3 L895.0,393.9 L896.0,394.5 L897.0,395.2 L898.0,396.0 L899.0,396.8 L900.0,397.6 L901.0,398.5 L902.0,399.4 L903.0,400.3 L904.0,401.3 L905.0,402.4 L906.0,403.4 L907.0,404.5 L908.0,405.6 L909.0,406.8 L910.0,408.0 L911.0,409.2 L912.0,410.4 L913.0,411.7 L914.0,413.0 L915.0,414.3 L916.0,415.6 L917.0,416.9 L918.0,418.2 L919.0,419.6 L920.0,421.0 L921.0,422.3 L922.0,423.7 L923.0,425.1 L924.0,426.5 L925.0,427.9 L926.0,429.3 L927.0,430.7 L928.0,432.1 L929.0,433.5 L930.0,434.9 L931.0,436.2 L932.0,437.6 L933.0,439.0 L934.0,440.3 L935.0,441.6 L936.0,442.9 L937.0,444.2 L938.0,445.5 L939.0,446.8 L940.0,448.0 L941.0,449.2 L942.0,450.4 L943.0,451.6 L944.0,452.7 L945.0,453.8 L946.0,454.8 L947.0,455.9 L948.0,456.9 L949.0,457.8 L950.0,458.7 L951.0,459.6 L952.0,460.4 L953.0,461.2 L954.0,462.0 L955.0,462.7 L956.0,463.3 L957.0,463.9 L958.0,464.5 L959.0,464.9 L960.0,465.4 L961.0,465.7 L962.0,466.1 L963.0,466.3 L964.0,466.5 L965.0,466.6 L966.0,466.7 L967.0,466.7 L968.0,466.6 L969.0,466.5 L970.0,466.2 L971.0,465.9 L972.0,465.6 L973.0,465.2 L974.0,464.7 L975.0,464.1 L976.0,463.5 L977.0,462.9 L978.0,462.2 L979.0,461.4 L980.0,460.6 L981.0,459.7 L982.0,458.8 L983.0,457.8 L984.0,456.8 L985.0,455.8 L986.0,454.7 L987.0,453.6 L988.0,452.4 L989.0,451.2 L990.0,450.0 L991.0,448.7 L992.0,447.4 L993.0,446.1 L994.0,444.7 L995.0,443.4 L996.0,442.0 L997.0,440.6 L998.0,439.1 L999.0,437.7 L1000.0,436.2 L1001.0,434.8 L1002.0,433.3 L1003.0,431.8 L1004.0,430.3 L1005.0,428.8 L1006.0,427.3 L1007.0,425.8 L1008.0,424.3 L1009.0,422.8 L1010.0,421.3 L1011.0,419.8 L1012.0,418.3 L1013.0,416.8 L1014.0,415.3 L1015.0,413.9 L1016.0,412.4 L1017.0,411.0 L1018.0,409.6 L1019.0,408.2 L1020.0,406.9 L1021.0,405.5 L1022.0,404.2 L1023.0,402.9 L1024.0,401.7 L1025.0,400.4 L1026.0,399.3 L1027.0,398.1 L1028.0,397.0 L1029.0,395.9 L1030.0,394.9 L1031.0,393.9 L1032.0,392.9 L1033.0,392.0 L1034.0,391.2 L1035.0,390.4 L1036.0,389.6 L1037.0,388.9 L1038.0,388.3 L1039.0,387.7 L1040.0,387.2 L1041.0,386.7 L1042.0,386.3 L1043.0,386.0 L1044.0,385.7 L1045.0,385.5 L1046.0,385.4 L1047.0,385.3 L1048.0,385.3 L1049.0,385.4 L1050.0,385.6 L1051.0,385.8 L1052.0,386.1 L1053.0,386.4 L1054.0,386.9 L1055.0,387.4 L1056.0,387.9 L1057.0,388.5 L1058.0,389.2 L1059.0,389.9 L1060.0,390.7 L1061.0,391.5 L1062.0,392.3 L1063.0,393.3 L1064.0,394.2 L1065.0,395.2 L1066.0,396.3 L1067.0,397.4 L1068.0,398.5 L1069.0,399.7 L1070.0,400.8 L1071.0,402.1 L1072.0,403.3 L1073.0,404.6 L1074.0,405.9 L1075.0,407.3 L1076.0,408.7 L1077.0,410.1 L1078.0,411.5 L1079.0,412.9 L1080.0,414.3 L1081.0,415.8 L1082.0,417.3 L1083.0,418.8 L1084.0,420.2 L1085.0,421.7 L1086.0,423.3 L1087.0,424.8 L1088.0,426.3 L1089.0,427.8 L1090.0,429.3 L1091.0,430.8 L1092.0,432.3 L1093.0,433.8 L1094.0,435.3 L1095.0,436.8 L1096.0,438.2 L1097.0,439.7 L1098.0,441.1 L1099.0,442.5 L1100.0,443.9 L1101.0,445.3 L1102.0,446.7 L1103.0,448.0 L1104.0,449.3 L1105.0,450.5 L1106.0,451.8 L1107.0,453.0 L1108.0,454.2 L1109.0,455.3 L1110.0,456.4 L1111.0,457.5 L1112.0,458.5 L1113.0,459.5 L1114.0,460.4 L1115.0,461.3 L1116.0,462.1 L1117.0,462.9 L1118.0,463.6 L1119.0,464.3 L1120.0,464.9 L1121.0,465.5 L1122.0,466.0 L1123.0,466.4 L1124.0,466.8 L1125.0,467.1 L1126.0,467.4 L1127.0,467.6 L1128.0,467.7 L1129.0,467.7 L1130.0,467.7 L1131.0,467.6 L1132.0,467.4 L1133.0,467.1 L1134.0,466.8 L1135.0,466.5 L1136.0,466.0 L1137.0,465.6 L1138.0,465.0 L1139.0,464.4 L1140.0,463.7 L1141.0,463.0 L1142.0,462.3 L1143.0,461.5 L1144.0,460.6 L1145.0,459.7 L1146.0,458.8 L1147.0,457.8 L1148.0,456.8 L1149.0,455.7 L1150.0,454.6 L1151.0,453.5 L1152.0,452.3 L1153.0,451.1 L1154.0,449.9 L1155.0,448.6 L1156.0,447.3 L1157.0,446.0 L1158.0,444.7 L1159.0,443.4 L1160.0,442.0 L1161.0,440.6 L1162.0,439.2 L1163.0,437.8 L1164.0,436.4 L1165.0,435.0 L1166.0,433.5 L1167.0,432.1 L1168.0,430.6 L1169.0,429.2 L1170.0,427.7 L1171.0,426.3 L1172.0,424.8 L1173.0,423.4 L1174.0,422.0 L1175.0,420.5 L1176.0,419.1 L1177.0,417.7 L1178.0,416.3 L1179.0,414.9 L1180.0,413.6 L1181.0,412.2 L1182.0,410.9 L1183.0,409.6 L1184.0,408.3 L1185.0,407.1 L1186.0,405.9 L1187.0,404.7 L1188.0,403.5 L1189.0,402.4 L1190.0,401.3 L1191.0,400.2 L1192.0,399.2 L1193.0,398.2 L1194.0,397.3 L1195.0,396.4 L1196.0,395.6 L1197.0,394.8 L1198.0,394.0 L1199.0,393.3 L1200.0,392.7 L1201.0,392.1 L1202.0,391.5 L1203.0,391.1 L1204.0,390.7 L1205.0,390.3 L1206.0,390.0 L1207.0,389.8 L1208.0,389.6 L1209.0,389.5 L1210.0,389.5 L1211.0,389.6 L1212.0,389.7 L1213.0,389.9 L1214.0,390.1 L1215.0,390.4 L1216.0,390.8 L1217.0,391.2 L1218.0,391.7 L1219.0,392.3 L1220.0,392.9 L1221.0,393.5 L1222.0,394.2 L1223.0,395.0 L1224.0,395.8 L1225.0,396.6 L1226.0,397.5 L1227.0,398.5 L1228.0,399.4 L1229.0,400.4 L1230.0,401.5 L1231.0,402.6 L1232.0,403.7 L1233.0,404.9 L1234.0,406.0 L1235.0,407.3 L1236.0,408.5 L1237.0,409.8 L1238.0,411.0 L1239.0,412.4 L1240.0,413.7 L1241.0,415.0 L1242.0,416.4 L1243.0,417.8 L1244.0,419.2" stroke="#ff00ff" stroke-width="2" fill="none" stroke-linejoin="round"/><path d="M722.0,562.5 L723.0,562.8 L724.0,563.1 L725.0,563.5 L726.0,563.8 L727.0,564.2 L728.0,564.5 L729.0,564.8 L730.0,565.1 L731.0,565.4 L732.0,565.7 L733.0,566.0 L734.0,566.2 L735.0,566.4 L736.0,566.5 L737.0,566.6 L738.0,566.6 L739.0,566.6 L740.0,566.5 L741.0,566.4 L742.0,566.2 L743.0,566.0 L744.0,565.7 L745.0,565.4 L746.0,565.0 L747.0,564.6 L748.0,564.1 L749.0,563.6 L750.0,563.1 L751.0,562.5 L752.0,561.9 L753.0,561.3 L754.0,560.6 L755.0,559.9 L756.0,559.1 L757.0,558.4 L758.0,557.5 L759.0,556.7 L760.0,555.9 L761.0,555.0 L762.0,554.1 L763.0,553.1 L764.0,552.2 L765.0,551.2 L766.0,550.2 L767.0,549.2 L768.0,548.2 L769.0,547.2 L770.0,546.1 L771.0,545.1 L772.0,544.0 L773.0,542.9 L774.0,541.8 L775.0,540.7 L776.0,539.6 L777.0,538.5 L778.0,537.4 L779.0,536.3 L780.0,535.2 L781.0,534.0 L782.0,532.9 L783.0,531.8 L784.0,530.7 L785.0,529.6 L786.0,528.6 L787.0,527.5 L788.0,526.4 L789.0,525.4 L790.0,524.3 L791.0,523.3 L792.0,522.3 L793.0,521.3 L794.0,520.3 L795.0,519.3 L796.0,518.4 L797.0,517.5 L798.0,516.6 L799.0,515.7 L800.0,514.9 L801.0,514.1 L802.0,513.3 L803.0,512.5 L804.0,511.8 L805.0,511.1 L806.0,510.4 L807.0,509.8 L808.0,509.2 L809.0,508.7 L810.0,508.2 L811.0,507.7 L812.0,507.3 L813.0,506.9 L814.0,506.5 L815.0,506.3 L816.0,506.0 L817.0,505.8 L818.0,505.7 L819.0,505.6 L820.0,505.5 L821.0,505.5 L822.0,505.6 L823.0,505.7 L824.0,505.9 L825.0,506.2 L826.0,506.5 L827.0,506.9 L828.0,507.3 L829.0,507.8 L830.0,508.4 L831.0,508.9 L832.0,509.6 L833.0,510.3 L834.0,511.0 L835.0,511.8 L836.0,512.6 L837.0,513.5 L838.0,514.4 L839.0,515.3 L840.0,516.3 L841.0,517.3 L842.0,518.4 L843.0,519.5 L844.0,520.6 L845.0,521.7 L846.0,522.9 L847.0,524.1 L848.0,525.3 L849.0,526.5 L850.0,527.7 L851.0,529.0 L852.0,530.3 L853.0,531.6 L854.0,532.9 L855.0,534.2 L856.0,535.6 L857.0,536.9 L858.0,538.3 L859.0,539.6 L860.0,541.0 L861.0,542.3 L862.0,543.7 L863.0,545.0 L864.0,546.4 L865.0,547.7 L866.0,549.1 L867.0,550.4 L868.0,551.7 L869.0,553.0 L870.0,554.3 L871.0,555.6 L872.0,556.9 L873.0,558.1 L874.0,559.3 L875.0,560.5 L876.0,561.7 L877.0,562.9 L878.0,564.0 L879.0,565.1 L880.0,566.1 L881.0,567.2 L882.0,568.2 L883.0,569.1 L884.0,570.1 L885.0,571.0 L886.0,571.8 L887.0,572.6 L888.0,573.4 L889.0,574.1 L890.0,574.8 L891.0,575.4 L892.0,576.0 L893.0,576.5 L894.0,577.0 L895.0,577.4 L896.0,577.7 L897.0,578.0 L898.0,578.3 L899.0,578.4 L900.0,578.6 L901.0,578.6 L902.0,578.6 L903.0,578.5 L904.0,578.3 L905.0,578.1 L906.0,577.8 L907.0,577.4 L908.0,577.0 L909.0,576.5 L910.0,575.9 L911.0,575.3 L912.0,574.6 L913.0,573.9 L914.0,573.1 L915.0,572.3 L916.0,571.4 L917.0,570.5 L918.0,569.5 L919.0,568.5 L920.0,567.4 L921.0,566.3 L922.0,565.2 L923.0,564.0 L924.0,562.8 L925.0,561.6 L926.0,560.3 L927.0,559.0 L928.0,557.7 L929.0,556.3 L930.0,555.0 L931.0,553.6 L932.0,552.1 L933.0,550.7 L934.0,549.3 L935.0,547.8 L936.0,546.3 L937.0,544.8 L938.0,543.3 L939.0,541.8 L940.0,540.3 L941.0,538.8 L942.0,537.3 L943.0,535.8 L944.0,534.2 L945.0,532.7 L946.0,531.2 L947.0,529.7 L948.0,528.2 L949.0,526.8 L950.0,525.3 L951.0,523.9 L952.0,522.4 L953.0,521.0 L954.0,519.6 L955.0,518.3 L956.0,516.9 L957.0,515.6 L958.0,514.3 L959.0,513.0 L960.0,511.8 L961.0,510.6 L962.0,509.4 L963.0,508.3 L964.0,507.2 L965.0,506.2 L966.0,505.2 L967.0,504.2 L968.0,503.3 L969.0,502.4 L970.0,501.6 L971.0,500.9 L972.0,500.2 L973.0,499.5 L974.0,498.9 L975.0,498.4 L976.0,497.9 L977.0,497.5 L978.0,497.1 L979.0,496.8 L980.0,496.6 L981.0,496.5 L982.0,496.4 L983.0,496.4 L984.0,496.5 L985.0,496.6 L986.0,496.9 L987.0,497.2 L988.0,497.5 L989.0,498.0 L990.0,498.5 L991.0,499.1 L992.0,499.7 L993.0,500.4 L994.0,501.2 L995.0,502.0 L996.0,502.8 L997.0,503.7 L998.0,504.7 L999.0,505.7 L1000.0,506.8 L1001.0,507.9 L1002.0,509.1 L1003.0,510.3 L1004.0,511.5 L1005.0,512.8 L1006.0,514.1 L1007.0,515.4 L1008.0,516.8 L1009.0,518.2 L1010.0,519.6 L1011.0,521.1 L1012.0,522.6 L1013.0,524.1 L1014.0,525.6 L1015.0,527.1 L1016.0,528.7 L1017.0,530.3 L1018.0,531.8 L1019.0,533.4 L1020.0,535.0 L1021.0,536.6 L1022.0,538.2 L1023.0,539.9 L1024.0,541.5 L1025.0,543.1 L1026.0,544.7 L1027.0,546.3 L1028.0,547.9 L1029.0,549.5 L1030.0,551.0 L1031.0,552.6 L1032.0,554.1 L1033.0,555.7 L1034.0,557.2 L1035.0,558.7 L1036.0,560.1 L1037.0,561.6 L1038.0,563.0 L1039.0,564.4 L1040.0,565.7 L1041.0,567.0 L1042.0,568.3 L1043.0,569.6 L1044.0,570.8 L1045.0,571.9 L1046.0,573.1 L1047.0,574.1 L1048.0,575.2 L1049.0,576.2 L1050.0,577.1 L1051.0,578.0 L1052.0,578.8 L1053.0,579.6 L1054.0,580.3 L1055.0,580.9 L1056.0,581.5 L1057.0,582.1 L1058.0,582.5 L1059.0,582.9 L1060.0,583.2 L1061.0,583.5 L1062.0,583.7 L1063.0,583.8 L1064.0,583.8 L1065.0,583.7 L1066.0,583.6 L1067.0,583.4 L1068.0,583.1 L1069.0,582.8 L1070.0,582.4 L1071.0,581.9 L1072.0,581.4 L1073.0,580.8 L1074.0,580.1 L1075.0,579.4 L1076.0,578.6 L1077.0,577.8 L1078.0,576.9 L1079.0,576.0 L1080.0,575.0 L1081.0,574.0 L1082.0,572.9 L1083.0,571.8 L1084.0,570.7 L1085.0,569.5 L1086.0,568.2 L1087.0,567.0 L1088.0,565.7 L1089.0,564.3 L1090.0,563.0 L1091.0,561.6 L1092.0,560.2 L1093.0,558.7 L1094.0,557.3 L1095.0,555.8 L1096.0,554.3 L1097.0,552.8 L1098.0,551.2 L1099.0,549.7 L1100.0,548.1 L1101.0,546.5 L1102.0,545.0 L1103.0,543.4 L1104.0,541.8 L1105.0,540.2 L1106.0,538.6 L1107.0,537.0 L1108.0,535.4 L1109.0,533.8 L1110.0,532.3 L1111.0,530.7 L1112.0,529.1 L1113.0,527.6 L1114.0,526.1 L1115.0,524.6 L1116.0,523.1 L1117.0,521.6 L1118.0,520.1 L1119.0,518.7 L1120.0,517.3 L1121.0,515.9 L1122.0,514.6 L1123.0,513.3 L1124.0,512.0 L1125.0,510.7 L1126.0,509.5 L1127.0,508.3 L1128.0,507.2 L1129.0,506.1 L1130.0,505.1 L1131.0,504.1 L1132.0,503.1 L1133.0,502.2 L1134.0,501.4 L1135.0,500.6 L1136.0,499.8 L1137.0,499.1 L1138.0,498.5 L1139.0,497.9 L1140.0,497.4 L1141.0,497.0 L1142.0,496.6 L1143.0,496.3 L1144.0,496.1 L1145.0,495.9 L1146.0,495.8 L1147.0,495.8 L1148.0,495.9 L1149.0,496.0 L1150.0,496.2 L1151.0,496.5 L1152.0,496.9 L1153.0,497.3 L1154.0,497.8 L1155.0,498.3 L1156.0,498.9 L1157.0,499.6 L1158.0,500.4 L1159.0,501.2 L1160.0,502.0 L1161.0,502.9 L1162.0,503.9 L1163.0,504.9 L1164.0,505.9 L1165.0,507.0 L1166.0,508.1 L1167.0,509.3 L1168.0,510.5 L1169.0,511.8 L1170.0,513.1 L1171.0,514.4 L1172.0,515.7 L1173.0,517.1 L1174.0,518.5 L1175.0,519.9 L1176.0,521.4 L1177.0,522.9 L1178.0,524.4 L1179.0,525.9 L1180.0,527.4 L1181.0,528.9 L1182.0,530.5 L1183.0,532.0 L1184.0,533.6 L1185.0,535.2 L1186.0,536.7 L1187.0,538.3 L1188.0,539.9 L1189.0,541.4 L1190.0,543.0 L1191.0,544.6 L1192.0,546.1 L1193.0,547.7 L1194.0,549.2 L1195.0,550.7 L1196.0,552.2 L1197.0,553.7 L1198.0,555.1 L1199.0,556.6 L1200.0,558.0 L1201.0,559.3 L1202.0,560.7 L1203.0,562.0 L1204.0,563.3 L1205.0,564.6 L1206.0,565.8 L1207.0,567.0 L1208.0,568.1 L1209.0,569.2 L1210.0,570.2 L1211.0,571.2 L1212.0,572.2 L1213.0,573.1 L1214.0,574.0 L1215.0,574.8 L1216.0,575.5 L1217.0,576.2 L1218.0,576.8 L1219.0,577.4 L1220.0,577.9 L1221.0,578.3 L1222.0,578.7 L1223.0,579.0 L1224.0,579.2 L1225.0,579.3 L1226.0,579.4 L1227.0,579.4 L1228.0,579.3 L1229.0,579.2 L1230.0,578.9 L1231.0,578.6 L1232.0,578.3 L1233.0,577.9 L1234.0,577.4 L1235.0,576.8 L1236.0,576.2 L1237.0,575.5 L1238.0,574.8 L1239.0,574.0 L1240.0,573.2 L1241.0,572.3 L1242.0,571.4 L1243.0,570.4 L1244.0,569.4" stroke="#800080" stroke-width="2" fill="none" stroke-linejoin="round"/><path d="M722.0,643.3 L723.0,643.8 L724.0,644.3 L725.0,644.8 L726.0,645.2 L727.0,645.7 L728.0,646.2 L729.0,646.7 L730.0,647.1 L731.0,647.6 L732.0,648.1 L733.0,648.5 L734.0,649.0 L735.0,649.5 L736.0,649.9 L737.0,650.4 L738.0,650.8 L739.0,651.3 L740.0,651.7 L741.0,652.1 L742.0,652.6 L743.0,653.1 L744.0,653.6 L745.0,654.1 L746.0,654.6 L747.0,655.2 L748.0,655.7 L749.0,656.3 L750.0,656.8 L751.0,657.3 L752.0,657.8 L753.0,658.3 L754.0,658.8 L755.0,659.3 L756.0,659.7 L757.0,660.0 L758.0,660.4 L759.0,660.7 L760.0,660.9 L761.0,661.1 L762.0,661.2 L763.0,661.3 L764.0,661.3 L765.0,661.3 L766.0,661.2 L767.0,661.1 L768.0,660.9 L769.0,660.7 L770.0,660.5 L771.0,660.2 L772.0,659.9 L773.0,659.6 L774.0,659.2 L775.0,658.9 L776.0,658.4 L777.0,658.0 L778.0,657.5 L779.0,657.0 L780.0,656.5 L781.0,656.0 L782.0,655.4 L783.0,654.8 L784.0,654.2 L785.0,653.5 L786.0,652.9 L787.0,652.2 L788.0,651.5 L789.0,650.8 L790.0,650.1 L791.0,649.4 L792.0,648.6 L793.0,647.9 L794.0,647.1 L795.0,646.3 L796.0,645.5 L797.0,644.7 L798.0,643.9 L799.0,643.1 L800.0,642.3 L801.0,641.5 L802.0,640.7 L803.0,639.8 L804.0,639.0 L805.0,638.2 L806.0,637.4 L807.0,636.6 L808.0,635.7 L809.0,634.9 L810.0,634.1 L811.0,633.3 L812.0,632.5 L813.0,631.7 L814.0,631.0 L815.0,630.2 L816.0,629.4 L817.0,628.7 L818.0,628.0 L819.0,627.3 L820.0,626.6 L821.0,625.9 L822.0,625.2 L823.0,624.6 L824.0,623.9 L825.0,623.3 L826.0,622.7 L827.0,622.2 L828.0,621.6 L829.0,621.1 L830.0,620.6 L831.0,620.2 L832.0,619.7 L833.0,619.3 L834.0,618.9 L835.0,618.6 L836.0,618.3 L837.0,618.0 L838.0,617.7 L839.0,617.5 L840.0,617.3 L841.0,617.2 L842.0,617.1 L843.0,617.0 L844.0,617.0 L845.0,617.0 L846.0,617.1 L847.0,617.2 L848.0,617.3 L849.0,617.5 L850.0,617.7 L851.0,618.0 L852.0,618.3 L853.0,618.7 L854.0,619.0 L855.0,619.5 L856.0,619.9 L857.0,620.4 L858.0,620.9 L859.0,621.5 L860.0,622.0 L861.0,622.6 L862.0,623.3 L863.0,623.9 L864.0,624.6 L865.0,625.3 L866.0,626.0 L867.0,626.8 L868.0,627.6 L869.0,628.4 L870.0,629.2 L871.0,630.0 L872.0,630.8 L873.0,631.7 L874.0,632.5 L875.0,633.4 L876.0,634.3 L877.0,635.2 L878.0,636.1 L879.0,637.0 L880.0,638.0 L881.0,638.9 L882.0,639.8 L883.0,640.8 L884.0,641.7 L885.0,642.6 L886.0,643.6 L887.0,644.5 L888.0,645.4 L889.0,646.4 L890.0,647.3 L891.0,648.2 L892.0,649.1 L893.0,650.0 L894.0,650.9 L895.0,651.8 L896.0,652.7 L897.0,653.5 L898.0,654.4 L899.0,655.2 L900.0,656.0 L901.0,656.8 L902.0,657.6 L903.0,658.3 L904.0,659.0 L905.0,659.7 L906.0,660.4 L907.0,661.1 L908.0,661.7 L909.0,662.3 L910.0,662.9 L911.0,663.5 L912.0,664.0 L913.0,664.5 L914.0,664.9 L915.0,665.4 L916.0,665.8 L917.0,666.1 L918.0,666.4 L919.0,666.7 L920.0,666.9 L921.0,667.1 L922.0,667.3 L923.0,667.4 L924.0,667.5 L925.0,667.5 L926.0,667.5 L927.0,667.4 L928.0,667.3 L929.0,667.1 L930.0,666.9 L931.0,666.7 L932.0,666.4 L933.0,666.0 L934.0,665.7 L935.0,665.3 L936.0,664.8 L937.0,664.3 L938.0,663.8 L939.0,663.3 L940.0,662.7 L941.0,662.1 L942.0,661.4 L943.0,660.8 L944.0,660.1 L945.0,659.3 L946.0,658.6 L947.0,657.8 L948.0,657.0 L949.0,656.2 L950.0,655.4 L951.0,654.5 L952.0,653.6 L953.0,652.7 L954.0,651.8 L955.0,650.9 L956.0,650.0 L957.0,649.0 L958.0,648.1 L959.0,647.1 L960.0,646.1 L961.0,645.2 L962.0,644.2 L963.0,643.2 L964.0,642.2 L965.0,641.2 L966.0,640.2 L967.0,639.2 L968.0,638.2 L969.0,637.2 L970.0,636.2 L971.0,635.2 L972.0,634.3 L973.0,633.3 L974.0,632.3 L975.0,631.4 L976.0,630.4 L977.0,629.5 L978.0,628.6 L979.0,627.7 L980.0,626.8 L981.0,625.9 L982.0,625.0 L983.0,624.2 L984.0,623.4 L985.0,622.6 L986.0,621.8 L987.0,621.1 L988.0,620.3 L989.0,619.6 L990.0,619.0 L991.0,618.3 L992.0,617.7 L993.0,617.1 L994.0,616.6 L995.0,616.1 L996.0,615.6 L997.0,615.1 L998.0,614.7 L999.0,614.4 L1000.0,614.0 L1001.0,613.7 L1002.0,613.5 L1003.0,613.3 L1004.0,613.1 L1005.0,613.0 L1006.0,612.9 L1007.0,612.9 L1008.0,612.9 L1009.0,613.0 L1010.0,613.1 L1011.0,613.3 L1012.0,613.5 L1013.0,613.8 L1014.0,614.1 L1015.0,614.5 L1016.0,614.9 L1017.0,615.3 L1018.0,615.8 L1019.0,616.4 L1020.0,616.9 L1021.0,617.5 L1022.0,618.2 L1023.0,618.8 L1024.0,619.5 L1025.0,620.3 L1026.0,621.0 L1027.0,621.8 L1028.0,622.6 L1029.0,623.5 L1030.0,624.3 L1031.0,625.2 L1032.0,626.1 L1033.0,627.1 L1034.0,628.0 L1035.0,629.0 L1036.0,630.0 L1037.0,631.0 L1038.0,632.0 L1039.0,633.0 L1040.0,634.0 L1041.0,635.1 L1042.0,636.1 L1043.0,637.2 L1044.0,638.3 L1045.0,639.3 L1046.0,640.4 L1047.0,641.5 L1048.0,642.5 L1049.0,643.6 L1050.0,644.7 L1051.0,645.8 L1052.0,646.8 L1053.0,647.9 L1054.0,648.9 L1055.0,650.0 L1056.0,651.0 L1057.0,652.0 L1058.0,653.0 L1059.0,654.0 L1060.0,655.0 L1061.0,656.0 L1062.0,656.9 L1063.0,657.8 L1064.0,658.8 L1065.0,659.6 L1066.0,660.5 L1067.0,661.3 L1068.0,662.1 L1069.0,662.9 L1070.0,663.7 L1071.0,664.4 L1072.0,665.1 L1073.0,665.7 L1074.0,666.4 L1075.0,666.9 L1076.0,667.5 L1077.0,668.0 L1078.0,668.5 L1079.0,668.9 L1080.0,669.3 L1081.0,669.7 L1082.0,670.0 L1083.0,670.2 L1084.0,670.4 L1085.0,670.6 L1086.0,670.7 L1087.0,670.8 L1088.0,670.8 L1089.0,670.8 L1090.0,670.7 L1091.0,670.5 L1092.0,670.3 L1093.0,670.1 L1094.0,669.8 L1095.0,669.5 L1096.0,669.2 L1097.0,668.7 L1098.0,668.3 L1099.0,667.8 L1100.0,667.3 L1101.0,666.8 L1102.0,666.2 L1103.0,665.5 L1104.0,664.9 L1105.0,664.2 L1106.0,663.5 L1107.0,662.7 L1108.0,662.0 L1109.0,661.2 L1110.0,660.4 L1111.0,659.5 L1112.0,658.7 L1113.0,657.8 L1114.0,656.9 L1115.0,655.9 L1116.0,655.0 L1117.0,654.0 L1118.0,653.1 L1119.0,652.1 L1120.0,651.1 L1121.0,650.1 L1122.0,649.1 L1123.0,648.0 L1124.0,647.0 L1125.0,646.0 L1126.0,644.9 L1127.0,643.9 L1128.0,642.8 L1129.0,641.8 L1130.0,640.7 L1131.0,639.7 L1132.0,638.6 L1133.0,637.6 L1134.0,636.6 L1135.0,635.5 L1136.0,634.5 L1137.0,633.5 L1138.0,632.5 L1139.0,631.5 L1140.0,630.6 L1141.0,629.6 L1142.0,628.7 L1143.0,627.7 L1144.0,626.8 L1145.0,625.9 L1146.0,625.1 L1147.0,624.2 L1148.0,623.4 L1149.0,622.6 L1150.0,621.8 L1151.0,621.1 L1152.0,620.4 L1153.0,619.7 L1154.0,619.0 L1155.0,618.4 L1156.0,617.8 L1157.0,617.2 L1158.0,616.7 L1159.0,616.2 L1160.0,615.8 L1161.0,615.4 L1162.0,615.0 L1163.0,614.7 L1164.0,614.4 L1165.0,614.2 L1166.0,614.0 L1167.0,613.8 L1168.0,613.7 L1169.0,613.7 L1170.0,613.7 L1171.0,613.8 L1172.0,613.9 L1173.0,614.0 L1174.0,614.2 L1175.0,614.4 L1176.0,614.7 L1177.0,615.1 L1178.0,615.4 L1179.0,615.8 L1180.0,616.3 L1181.0,616.8 L1182.0,617.3 L1183.0,617.8 L1184.0,618.4 L1185.0,619.0 L1186.0,619.7 L1187.0,620.3 L1188.0,621.0 L1189.0,621.8 L1190.0,622.5 L1191.0,623.3 L1192.0,624.1 L1193.0,624.9 L1194.0,625.8 L1195.0,626.7 L1196.0,627.5 L1197.0,628.4 L1198.0,629.4 L1199.0,630.3 L1200.0,631.2 L1201.0,632.2 L1202.0,633.2 L1203.0,634.1 L1204.0,635.1 L1205.0,636.1 L1206.0,637.1 L1207.0,638.1 L1208.0,639.1 L1209.0,640.1 L1210.0,641.2 L1211.0,642.2 L1212.0,643.2 L1213.0,644.2 L1214.0,645.2 L1215.0,646.2 L1216.0,647.2 L1217.0,648.1 L1218.0,649.1 L1219.0,650.1 L1220.0,651.0 L1221.0,652.0 L1222.0,652.9 L1223.0,653.8 L1224.0,654.7 L1225.0,655.6 L1226.0,656.4 L1227.0,657.3 L1228.0,658.1 L1229.0,658.9 L1230.0,659.6 L1231.0,660.4 L1232.0,661.1 L1233.0,661.8 L1234.0,662.4 L1235.0,663.1 L1236.0,663.7 L1237.0,664.2 L1238.0,664.7 L1239.0,665.2 L1240.0,665.7 L1241.0,666.1 L1242.0,666.5 L1243.0,666.8 L1244.0,667.1" stroke="#00aaaa" stroke-width="2" fill="none" stroke-linejoin="round"/><path d="M722.0,666.0 L723.0,665.5 L724.0,664.9 L725.0,664.3 L726.0,663.8 L727.0,663.2 L728.0,662.6 L729.0,662.0 L730.0,661.5 L731.0,660.9 L732.0,660.3 L733.0,659.8 L734.0,659.2 L735.0,658.7 L736.0,658.2 L737.0,657.7 L738.0,657.2 L739.0,656.7 L740.0,656.3 L741.0,655.9 L742.0,655.4 L743.0,655.0 L744.0,654.6 L745.0,654.1 L746.0,653.7 L747.0,653.2 L748.0,652.7 L749.0,652.3 L750.0,651.9 L751.0,651.4 L752.0,651.0 L753.0,650.6 L754.0,650.2 L755.0,649.9 L756.0,649.5 L757.0,649.2 L758.0,648.9 L759.0,648.7 L760.0,648.5 L761.0,648.3 L762.0,648.1 L763.0,648.1 L764.0,648.0 L765.0,648.0 L766.0,648.0 L767.0,648.1 L768.0,648.2 L769.0,648.4 L770.0,648.6 L771.0,648.8 L772.0,649.1 L773.0,649.4 L774.0,649.7 L775.0,650.1 L776.0,650.5 L777.0,650.9 L778.0,651.3 L779.0,651.8 L780.0,652.3 L781.0,652.8 L782.0,653.4 L783.0,653.9 L784.0,654.5 L785.0,655.2 L786.0,655.8 L787.0,656.4 L788.0,657.1 L789.0,657.8 L790.0,658.5 L791.0,659.2 L792.0,660.0 L793.0,660.7 L794.0,661.5 L795.0,662.2 L796.0,663.0 L797.0,663.8 L798.0,664.6 L799.0,665.4 L800.0,666.2 L801.0,667.0 L802.0,667.8 L803.0,668.6 L804.0,669.5 L805.0,670.3 L806.0,671.1 L807.0,671.9 L808.0,672.7 L809.0,673.5 L810.0,674.3 L811.0,675.1 L812.0,675.9 L813.0,676.7 L814.0,677.5 L815.0,678.3 L816.0,679.0 L817.0,679.8 L818.0,680.5 L819.0,681.2 L820.0,681.9 L821.0,682.6 L822.0,683.3 L823.0,683.9 L824.0,684.5 L825.0,685.1 L826.0,685.7 L827.0,686.3 L828.0,686.8 L829.0,687.4 L830.0,687.8 L831.0,688.3 L832.0,688.8 L833.0,689.2 L834.0,689.5 L835.0,689.9 L836.0,690.2 L837.0,690.5 L838.0,690.8 L839.0,691.0 L840.0,691.2 L841.0,691.3 L842.0,691.4 L843.0,691.5 L844.0,691.5 L845.0,691.5 L846.0,691.4 L847.0,691.3 L848.0,691.2 L849.0,691.0 L850.0,690.8 L851.0,690.5 L852.0,690.2 L853.0,689.9 L854.0,689.5 L855.0,689.1 L856.0,688.7 L857.0,688.2 L858.0,687.7 L859.0,687.2 L860.0,686.6 L861.0,686.0 L862.0,685.4 L863.0,684.8 L864.0,684.1 L865.0,683.4 L866.0,682.7 L867.0,682.0 L868.0,681.2 L869.0,680.4 L870.0,679.6 L871.0,678.8 L872.0,678.0 L873.0,677.2 L874.0,676.3 L875.0,675.5 L876.0,674.6 L877.0,673.7 L878.0,672.8 L879.0,671.9 L880.0,671.0 L881.0,670.1 L882.0,669.2 L883.0,668.3 L884.0,667.4 L885.0,666.4 L886.0,665.5 L887.0,664.6 L888.0,663.7 L889.0,662.8 L890.0,661.9 L891.0,660.9 L892.0,660.0 L893.0,659.2 L894.0,658.3 L895.0,657.4 L896.0,656.5 L897.0,655.7 L898.0,654.8 L899.0,654.0 L900.0,653.2 L901.0,652.4 L902.0,651.6 L903.0,650.9 L904.0,650.2 L905.0,649.4 L906.0,648.8 L907.0,648.1 L908.0,647.4 L909.0,646.8 L910.0,646.2 L911.0,645.7 L912.0,645.1 L913.0,644.6 L914.0,644.1 L915.0,643.7 L916.0,643.3 L917.0,642.9 L918.0,642.5 L919.0,642.2 L920.0,642.0 L921.0,641.7 L922.0,641.5 L923.0,641.4 L924.0,641.3 L925.0,641.2 L926.0,641.2 L927.0,641.2 L928.0,641.3 L929.0,641.4 L930.0,641.6 L931.0,641.8 L932.0,642.1 L933.0,642.4 L934.0,642.7 L935.0,643.1 L936.0,643.6 L937.0,644.0 L938.0,644.5 L939.0,645.1 L940.0,645.7 L941.0,646.3 L942.0,646.9 L943.0,647.6 L944.0,648.3 L945.0,649.0 L946.0,649.8 L947.0,650.6 L948.0,651.4 L949.0,652.2 L950.0,653.1 L951.0,654.0 L952.0,654.9 L953.0,655.8 L954.0,656.7 L955.0,657.6 L956.0,658.6 L957.0,659.6 L958.0,660.6 L959.0,661.6 L960.0,662.6 L961.0,663.6 L962.0,664.6 L963.0,665.6 L964.0,666.6 L965.0,667.7 L966.0,668.7 L967.0,669.7 L968.0,670.8 L969.0,671.8 L970.0,672.8 L971.0,673.8 L972.0,674.8 L973.0,675.8 L974.0,676.8 L975.0,677.8 L976.0,678.8 L977.0,679.7 L978.0,680.7 L979.0,681.6 L980.0,682.5 L981.0,683.4 L982.0,684.3 L983.0,685.2 L984.0,686.0 L985.0,686.8 L986.0,687.6 L987.0,688.3 L988.0,689.1 L989.0,689.8 L990.0,690.4 L991.0,691.1 L992.0,691.7 L993.0,692.3 L994.0,692.8 L995.0,693.3 L996.0,693.8 L997.0,694.2 L998.0,694.6 L999.0,694.9 L1000.0,695.2 L1001.0,695.5 L1002.0,695.7 L1003.0,695.9 L1004.0,696.0 L1005.0,696.1 L1006.0,696.1 L1007.0,696.1 L1008.0,696.0 L1009.0,695.9 L1010.0,695.7 L1011.0,695.4 L1012.0,695.2 L1013.0,694.8 L1014.0,694.5 L1015.0,694.1 L1016.0,693.6 L1017.0,693.1 L1018.0,692.6 L1019.0,692.1 L1020.0,691.5 L1021.0,690.8 L1022.0,690.2 L1023.0,689.5 L1024.0,688.7 L1025.0,688.0 L1026.0,687.2 L1027.0,686.4 L1028.0,685.5 L1029.0,684.7 L1030.0,683.8 L1031.0,682.9 L1032.0,682.0 L1033.0,681.0 L1034.0,680.1 L1035.0,679.1 L1036.0,678.1 L1037.0,677.1 L1038.0,676.1 L1039.0,675.1 L1040.0,674.0 L1041.0,673.0 L1042.0,671.9 L1043.0,670.9 L1044.0,669.8 L1045.0,668.7 L1046.0,667.7 L1047.0,666.6 L1048.0,665.5 L1049.0,664.5 L1050.0,663.4 L1051.0,662.4 L1052.0,661.3 L1053.0,660.3 L1054.0,659.2 L1055.0,658.2 L1056.0,657.2 L1057.0,656.2 L1058.0,655.2 L1059.0,654.2 L1060.0,653.3 L1061.0,652.4 L1062.0,651.4 L1063.0,650.6 L1064.0,649.7 L1065.0,648.8 L1066.0,648.0 L1067.0,647.2 L1068.0,646.4 L1069.0,645.7 L1070.0,645.0 L1071.0,644.3 L1072.0,643.7 L1073.0,643.0 L1074.0,642.5 L1075.0,641.9 L1076.0,641.4 L1077.0,640.9 L1078.0,640.5 L1079.0,640.1 L1080.0,639.8 L1081.0,639.5 L1082.0,639.2 L1083.0,639.0 L1084.0,638.9 L1085.0,638.8 L1086.0,638.7 L1087.0,638.7 L1088.0,638.7 L1089.0,638.8 L1090.0,639.0 L1091.0,639.2 L1092.0,639.4 L1093.0,639.7 L1094.0,640.0 L1095.0,640.4 L1096.0,640.8 L1097.0,641.2 L1098.0,641.7 L1099.0,642.2 L1100.0,642.7 L1101.0,643.3 L1102.0,643.9 L1103.0,644.6 L1104.0,645.3 L1105.0,646.0 L1106.0,646.7 L1107.0,647.5 L1108.0,648.2 L1109.0,649.1 L1110.0,649.9 L1111.0,650.7 L1112.0,651.6 L1113.0,652.5 L1114.0,653.4 L1115.0,654.3 L1116.0,655.3 L1117.0,656.2 L1118.0,657.2 L1119.0,658.2 L1120.0,659.2 L1121.0,660.2 L1122.0,661.2 L1123.0,662.2 L1124.0,663.2 L1125.0,664.3 L1126.0,665.3 L1127.0,666.3 L1128.0,667.4 L1129.0,668.4 L1130.0,669.4 L1131.0,670.5 L1132.0,671.5 L1133.0,672.5 L1134.0,673.5 L1135.0,674.5 L1136.0,675.5 L1137.0,676.5 L1138.0,677.5 L1139.0,678.4 L1140.0,679.4 L1141.0,680.3 L1142.0,681.2 L1143.0,682.1 L1144.0,683.0 L1145.0,683.8 L1146.0,684.6 L1147.0,685.5 L1148.0,686.2 L1149.0,687.0 L1150.0,687.7 L1151.0,688.4 L1152.0,689.1 L1153.0,689.8 L1154.0,690.4 L1155.0,691.0 L1156.0,691.5 L1157.0,692.0 L1158.0,692.5 L1159.0,692.9 L1160.0,693.3 L1161.0,693.7 L1162.0,694.0 L1163.0,694.3 L1164.0,694.5 L1165.0,694.7 L1166.0,694.9 L1167.0,695.0 L1168.0,695.0 L1169.0,695.0 L1170.0,694.9 L1171.0,694.8 L1172.0,694.7 L1173.0,694.5 L1174.0,694.2 L1175.0,694.0 L1176.0,693.6 L1177.0,693.3 L1178.0,692.9 L1179.0,692.4 L1180.0,691.9 L1181.0,691.4 L1182.0,690.9 L1183.0,690.3 L1184.0,689.7 L1185.0,689.0 L1186.0,688.4 L1187.0,687.6 L1188.0,686.9 L1189.0,686.2 L1190.0,685.4 L1191.0,684.6 L1192.0,683.7 L1193.0,682.9 L1194.0,682.0 L1195.0,681.1 L1196.0,680.2 L1197.0,679.3 L1198.0,678.4 L1199.0,677.4 L1200.0,676.5 L1201.0,675.5 L1202.0,674.5 L1203.0,673.5 L1204.0,672.5 L1205.0,671.5 L1206.0,670.5 L1207.0,669.5 L1208.0,668.5 L1209.0,667.4 L1210.0,666.4 L1211.0,665.4 L1212.0,664.4 L1213.0,663.4 L1214.0,662.4 L1215.0,661.4 L1216.0,660.4 L1217.0,659.4 L1218.0,658.4 L1219.0,657.5 L1220.0,656.5 L1221.0,655.6 L1222.0,654.7 L1223.0,653.8 L1224.0,652.9 L1225.0,652.0 L1226.0,651.2 L1227.0,650.4 L1228.0,649.5 L1229.0,648.8 L1230.0,648.0 L1231.0,647.3 L1232.0,646.6 L1233.0,645.9 L1234.0,645.3 L1235.0,644.6 L1236.0,644.1 L1237.0,643.5 L1238.0,643.0 L1239.0,642.5 L1240.0,642.1 L1241.0,641.7 L1242.0,641.3 L1243.0,641.0 L1244.0,640.7" stroke="#0000ff" stroke-width="2" fill="none" stroke-linejoin="round"/><path d="M722.0,763.9 L723.0,763.2 L724.0,762.5 L725.0,761.7 L726.0,761.0 L727.0,760.2 L728.0,759.4 L729.0,758.6 L730.0,757.7 L731.0,756.9 L732.0,756.1 L733.0,755.2 L734.0,754.4 L735.0,753.5 L736.0,752.7 L737.0,751.8 L738.0,751.0 L739.0,750.2 L740.0,749.3 L741.0,748.5 L742.0,747.7 L743.0,747.0 L744.0,746.2 L745.0,745.5 L746.0,744.8 L747.0,744.1 L748.0,743.4 L749.0,742.8 L750.0,742.2 L751.0,741.6 L752.0,741.1 L753.0,740.6 L754.0,740.1 L755.0,739.7 L756.0,739.3 L757.0,739.0 L758.0,738.8 L759.0,738.5 L760.0,738.4 L761.0,738.3 L762.0,738.2 L763.0,738.2 L764.0,738.3 L765.0,738.4 L766.0,738.6 L767.0,738.8 L768.0,739.1 L769.0,739.4 L770.0,739.7 L771.0,740.2 L772.0,740.6 L773.0,741.1 L774.0,741.7 L775.0,742.3 L776.0,742.9 L777.0,743.6 L778.0,744.3 L779.0,745.0 L780.0,745.8 L781.0,746.6 L782.0,747.4 L783.0,748.3 L784.0,749.2 L785.0,750.1 L786.0,751.0 L787.0,752.0 L788.0,753.0 L789.0,754.0 L790.0,755.0 L791.0,756.1 L792.0,757.2 L793.0,758.2 L794.0,759.3 L795.0,760.5 L796.0,761.6 L797.0,762.7 L798.0,763.9 L799.0,765.0 L800.0,766.2 L801.0,767.3 L802.0,768.5 L803.0,769.7 L804.0,770.8 L805.0,772.0 L806.0,773.1 L807.0,774.3 L808.0,775.5 L809.0,776.6 L810.0,777.7 L811.0,778.9 L812.0,780.0 L813.0,781.1 L814.0,782.2 L815.0,783.3 L816.0,784.3 L817.0,785.4 L818.0,786.4 L819.0,787.4 L820.0,788.4 L821.0,789.4 L822.0,790.3 L823.0,791.2 L824.0,792.1 L825.0,792.9 L826.0,793.8 L827.0,794.5 L828.0,795.3 L829.0,796.0 L830.0,796.7 L831.0,797.4 L832.0,798.0 L833.0,798.5 L834.0,799.1 L835.0,799.6 L836.0,800.0 L837.0,800.4 L838.0,800.8 L839.0,801.1 L840.0,801.3 L841.0,801.5 L842.0,801.7 L843.0,801.8 L844.0,801.8 L845.0,801.8 L846.0,801.7 L847.0,801.5 L848.0,801.3 L849.0,801.1 L850.0,800.7 L851.0,800.4 L852.0,799.9 L853.0,799.4 L854.0,798.9 L855.0,798.3 L856.0,797.7 L857.0,797.0 L858.0,796.2 L859.0,795.5 L860.0,794.6 L861.0,793.8 L862.0,792.9 L863.0,791.9 L864.0,791.0 L865.0,790.0 L866.0,788.9 L867.0,787.9 L868.0,786.8 L869.0,785.6 L870.0,784.5 L871.0,783.3 L872.0,782.1 L873.0,780.9 L874.0,779.6 L875.0,778.4 L876.0,777.1 L877.0,775.8 L878.0,774.5 L879.0,773.2 L880.0,771.9 L881.0,770.6 L882.0,769.2 L883.0,767.9 L884.0,766.5 L885.0,765.2 L886.0,763.8 L887.0,762.5 L888.0,761.1 L889.0,759.8 L890.0,758.5 L891.0,757.2 L892.0,755.8 L893.0,754.5 L894.0,753.2 L895.0,752.0 L896.0,750.7 L897.0,749.5 L898.0,748.2 L899.0,747.0 L900.0,745.9 L901.0,744.7 L902.0,743.6 L903.0,742.5 L904.0,741.4 L905.0,740.3 L906.0,739.3 L907.0,738.4 L908.0,737.4 L909.0,736.5 L910.0,735.6 L911.0,734.8 L912.0,734.0 L913.0,733.3 L914.0,732.6 L915.0,731.9 L916.0,731.3 L917.0,730.8 L918.0,730.3 L919.0,729.8 L920.0,729.4 L921.0,729.1 L922.0,728.8 L923.0,728.6 L924.0,728.4 L925.0,728.3 L926.0,728.3 L927.0,728.3 L928.0,728.4 L929.0,728.6 L930.0,728.9 L931.0,729.2 L932.0,729.6 L933.0,730.0 L934.0,730.6 L935.0,731.1 L936.0,731.8 L937.0,732.4 L938.0,733.2 L939.0,734.0 L940.0,734.8 L941.0,735.7 L942.0,736.7 L943.0,737.7 L944.0,738.7 L945.0,739.8 L946.0,740.9 L947.0,742.0 L948.0,743.2 L949.0,744.4 L950.0,745.7 L951.0,747.0 L952.0,748.3 L953.0,749.6 L954.0,751.0 L955.0,752.4 L956.0,753.8 L957.0,755.2 L958.0,756.6 L959.0,758.1 L960.0,759.5 L961.0,761.0 L962.0,762.5 L963.0,764.0 L964.0,765.5 L965.0,767.0 L966.0,768.5 L967.0,770.0 L968.0,771.5 L969.0,773.0 L970.0,774.5 L971.0,776.0 L972.0,777.5 L973.0,779.0 L974.0,780.4 L975.0,781.9 L976.0,783.3 L977.0,784.7 L978.0,786.1 L979.0,787.4 L980.0,788.8 L981.0,790.1 L982.0,791.3 L983.0,792.6 L984.0,793.8 L985.0,795.0 L986.0,796.1 L987.0,797.2 L988.0,798.3 L989.0,799.3 L990.0,800.3 L991.0,801.3 L992.0,802.2 L993.0,803.0 L994.0,803.8 L995.0,804.5 L996.0,805.2 L997.0,805.8 L998.0,806.4 L999.0,806.9 L1000.0,807.4 L1001.0,807.7 L1002.0,808.0 L1003.0,808.3 L1004.0,808.5 L1005.0,808.6 L1006.0,808.6 L1007.0,808.6 L1008.0,808.4 L1009.0,808.2 L1010.0,808.0 L1011.0,807.7 L1012.0,807.3 L1013.0,806.8 L1014.0,806.3 L1015.0,805.7 L1016.0,805.1 L1017.0,804.4 L1018.0,803.7 L1019.0,802.9 L1020.0,802.0 L1021.0,801.1 L1022.0,800.2 L1023.0,799.2 L1024.0,798.2 L1025.0,797.1 L1026.0,796.0 L1027.0,794.8 L1028.0,793.6 L1029.0,792.4 L1030.0,791.1 L1031.0,789.9 L1032.0,788.5 L1033.0,787.2 L1034.0,785.8 L1035.0,784.4 L1036.0,783.0 L1037.0,781.6 L1038.0,780.2 L1039.0,778.7 L1040.0,777.2 L1041.0,775.7 L1042.0,774.2 L1043.0,772.7 L1044.0,771.2 L1045.0,769.7 L1046.0,768.1 L1047.0,766.6 L1048.0,765.1 L1049.0,763.5 L1050.0,762.0 L1051.0,760.5 L1052.0,759.0 L1053.0,757.5 L1054.0,756.0 L1055.0,754.5 L1056.0,753.1 L1057.0,751.6 L1058.0,750.2 L1059.0,748.8 L1060.0,747.4 L1061.0,746.1 L1062.0,744.7 L1063.0,743.4 L1064.0,742.1 L1065.0,740.9 L1066.0,739.7 L1067.0,738.5 L1068.0,737.4 L1069.0,736.3 L1070.0,735.2 L1071.0,734.2 L1072.0,733.2 L1073.0,732.3 L1074.0,731.4 L1075.0,730.6 L1076.0,729.8 L1077.0,729.1 L1078.0,728.4 L1079.0,727.8 L1080.0,727.3 L1081.0,726.8 L1082.0,726.4 L1083.0,726.0 L1084.0,725.7 L1085.0,725.5 L1086.0,725.3 L1087.0,725.2 L1088.0,725.2 L1089.0,725.3 L1090.0,725.4 L1091.0,725.6 L1092.0,725.9 L1093.0,726.2 L1094.0,726.6 L1095.0,727.1 L1096.0,727.6 L1097.0,728.2 L1098.0,728.9 L1099.0,729.6 L1100.0,730.3 L1101.0,731.2 L1102.0,732.0 L1103.0,732.9 L1104.0,733.9 L1105.0,734.9 L1106.0,736.0 L1107.0,737.1 L1108.0,738.2 L1109.0,739.4 L1110.0,740.6 L1111.0,741.8 L1112.0,743.1 L1113.0,744.4 L1114.0,745.7 L1115.0,747.1 L1116.0,748.4 L1117.0,749.8 L1118.0,751.3 L1119.0,752.7 L1120.0,754.2 L1121.0,755.6 L1122.0,757.1 L1123.0,758.6 L1124.0,760.1 L1125.0,761.6 L1126.0,763.2 L1127.0,764.7 L1128.0,766.2 L1129.0,767.8 L1130.0,769.3 L1131.0,770.8 L1132.0,772.3 L1133.0,773.8 L1134.0,775.3 L1135.0,776.8 L1136.0,778.3 L1137.0,779.8 L1138.0,781.2 L1139.0,782.6 L1140.0,784.0 L1141.0,785.4 L1142.0,786.8 L1143.0,788.1 L1144.0,789.4 L1145.0,790.7 L1146.0,791.9 L1147.0,793.1 L1148.0,794.3 L1149.0,795.4 L1150.0,796.5 L1151.0,797.6 L1152.0,798.6 L1153.0,799.6 L1154.0,800.5 L1155.0,801.4 L1156.0,802.2 L1157.0,802.9 L1158.0,803.7 L1159.0,804.3 L1160.0,804.9 L1161.0,805.5 L1162.0,805.9 L1163.0,806.3 L1164.0,806.7 L1165.0,807.0 L1166.0,807.2 L1167.0,807.3 L1168.0,807.4 L1169.0,807.4 L1170.0,807.3 L1171.0,807.2 L1172.0,807.0 L1173.0,806.7 L1174.0,806.3 L1175.0,805.9 L1176.0,805.5 L1177.0,804.9 L1178.0,804.4 L1179.0,803.7 L1180.0,803.1 L1181.0,802.3 L1182.0,801.5 L1183.0,800.7 L1184.0,799.8 L1185.0,798.9 L1186.0,797.9 L1187.0,796.9 L1188.0,795.9 L1189.0,794.8 L1190.0,793.7 L1191.0,792.6 L1192.0,791.4 L1193.0,790.2 L1194.0,788.9 L1195.0,787.7 L1196.0,786.4 L1197.0,785.1 L1198.0,783.8 L1199.0,782.4 L1200.0,781.0 L1201.0,779.7 L1202.0,778.3 L1203.0,776.9 L1204.0,775.4 L1205.0,774.0 L1206.0,772.6 L1207.0,771.1 L1208.0,769.7 L1209.0,768.3 L1210.0,766.8 L1211.0,765.4 L1212.0,764.0 L1213.0,762.5 L1214.0,761.1 L1215.0,759.7 L1216.0,758.3 L1217.0,756.9 L1218.0,755.5 L1219.0,754.2 L1220.0,752.8 L1221.0,751.5 L1222.0,750.2 L1223.0,749.0 L1224.0,747.7 L1225.0,746.5 L1226.0,745.3 L1227.0,744.2 L1228.0,743.0 L1229.0,741.9 L1230.0,740.9 L1231.0,739.9 L1232.0,738.9 L1233.0,737.9 L1234.0,737.0 L1235.0,736.2 L1236.0,735.4 L1237.0,734.6 L1238.0,733.9 L1239.0,733.3 L1240.0,732.7 L1241.0,732.1 L1242.0,731.7 L1243.0,731.2 L1244.0,730.9" stroke="#ff00ff" stroke-width="2" fill="none" stroke-linejoin="round"/><path d="M722.0,871.9 L723.0,872.8 L724.0,873.7 L725.0,874.5 L726.0,875.4 L727.0,876.2 L728.0,877.1 L729.0,877.9 L730.0,878.8 L731.0,879.6 L732.0,880.5 L733.0,881.3 L734.0,882.2 L735.0,883.1 L736.0,883.9 L737.0,884.8 L738.0,885.7 L739.0,886.6 L740.0,887.5 L741.0,888.4 L742.0,889.3 L743.0,890.3 L744.0,891.3 L745.0,892.4 L746.0,893.5 L747.0,894.6 L748.0,895.7 L749.0,896.8 L750.0,897.9 L751.0,899.0 L752.0,900.0 L753.0,901.1 L754.0,902.1 L755.0,903.1 L756.0,904.1 L757.0,905.1 L758.0,905.9 L759.0,906.8 L760.0,907.5 L761.0,908.2 L762.0,908.9 L763.0,909.5 L764.0,910.2 L765.0,910.9 L766.0,911.5 L767.0,912.2 L768.0,912.8 L769.0,913.4 L770.0,914.0 L771.0,914.6 L772.0,915.1 L773.0,915.6 L774.0,916.1 L775.0,916.4 L776.0,916.8 L777.0,917.0 L778.0,917.2 L779.0,917.4 L780.0,917.4 L781.0,917.4 L782.0,917.3 L783.0,917.1 L784.0,916.9 L785.0,916.7 L786.0,916.4 L787.0,916.0 L788.0,915.6 L789.0,915.1 L790.0,914.6 L791.0,914.0 L792.0,913.4 L793.0,912.8 L794.0,912.1 L795.0,911.4 L796.0,910.6 L797.0,909.8 L798.0,909.0 L799.0,908.1 L800.0,907.2 L801.0,906.3 L802.0,905.3 L803.0,904.3 L804.0,903.3 L805.0,902.2 L806.0,901.2 L807.0,900.1 L808.0,898.9 L809.0,897.8 L810.0,896.7 L811.0,895.5 L812.0,894.3 L813.0,893.1 L814.0,891.9 L815.0,890.7 L816.0,889.4 L817.0,888.2 L818.0,886.9 L819.0,885.7 L820.0,884.4 L821.0,883.2 L822.0,881.9 L823.0,880.6 L824.0,879.4 L825.0,878.1 L826.0,876.9 L827.0,875.7 L828.0,874.4 L829.0,873.2 L830.0,872.0 L831.0,870.8 L832.0,869.6 L833.0,868.4 L834.0,867.3 L835.0,866.1 L836.0,865.0 L837.0,863.9 L838.0,862.9 L839.0,861.8 L840.0,860.8 L841.0,859.8 L842.0,858.8 L843.0,857.9 L844.0,857.0 L845.0,856.1 L846.0,855.3 L847.0,854.5 L848.0,853.7 L849.0,853.0 L850.0,852.3 L851.0,851.7 L852.0,851.1 L853.0,850.5 L854.0,850.0 L855.0,849.6 L856.0,849.2 L857.0,848.8 L858.0,848.5 L859.0,848.2 L860.0,848.0 L861.0,847.9 L862.0,847.8 L863.0,847.8 L864.0,847.8 L865.0,848.0 L866.0,848.2 L867.0,848.4 L868.0,848.7 L869.0,849.1 L870.0,849.6 L871.0,850.1 L872.0,850.7 L873.0,851.3 L874.0,852.0 L875.0,852.8 L876.0,853.6 L877.0,854.4 L878.0,855.3 L879.0,856.3 L880.0,857.3 L881.0,858.3 L882.0,859.4 L883.0,860.5 L884.0,861.7 L885.0,862.8 L886.0,864.1 L887.0,865.3 L888.0,866.6 L889.0,867.9 L890.0,869.3 L891.0,870.6 L892.0,872.0 L893.0,873.4 L894.0,874.8 L895.0,876.3 L896.0,877.7 L897.0,879.2 L898.0,880.7 L899.0,882.2 L900.0,883.7 L901.0,885.2 L902.0,886.7 L903.0,888.2 L904.0,889.7 L905.0,891.2 L906.0,892.7 L907.0,894.2 L908.0,895.7 L909.0,897.1 L910.0,898.6 L911.0,900.0 L912.0,901.5 L913.0,902.9 L914.0,904.3 L915.0,905.7 L916.0,907.0 L917.0,908.3 L918.0,909.6 L919.0,910.9 L920.0,912.2 L921.0,913.4 L922.0,914.5 L923.0,915.7 L924.0,916.8 L925.0,917.8 L926.0,918.8 L927.0,919.8 L928.0,920.7 L929.0,921.6 L930.0,922.4 L931.0,923.2 L932.0,923.9 L933.0,924.6 L934.0,925.2 L935.0,925.8 L936.0,926.2 L937.0,926.7 L938.0,927.0 L939.0,927.3 L940.0,927.6 L941.0,927.7 L942.0,927.8 L943.0,927.8 L944.0,927.7 L945.0,927.6 L946.0,927.3 L947.0,927.1 L948.0,926.7 L949.0,926.2 L950.0,925.7 L951.0,925.2 L952.0,924.5 L953.0,923.8 L954.0,923.1 L955.0,922.3 L956.0,921.4 L957.0,920.5 L958.0,919.5 L959.0,918.5 L960.0,917.4 L961.0,916.3 L962.0,915.1 L963.0,913.9 L964.0,912.7 L965.0,911.4 L966.0,910.1 L967.0,908.7 L968.0,907.3 L969.0,905.9 L970.0,904.5 L971.0,903.0 L972.0,901.5 L973.0,900.0 L974.0,898.5 L975.0,896.9 L976.0,895.3 L977.0,893.8 L978.0,892.2 L979.0,890.6 L980.0,888.9 L981.0,887.3 L982.0,885.7 L983.0,884.1 L984.0,882.5 L985.0,880.8 L986.0,879.2 L987.0,877.6 L988.0,876.0 L989.0,874.4 L990.0,872.8 L991.0,871.3 L992.0,869.7 L993.0,868.2 L994.0,866.6 L995.0,865.2 L996.0,863.7 L997.0,862.2 L998.0,860.8 L999.0,859.4 L1000.0,858.1 L1001.0,856.8 L1002.0,855.5 L1003.0,854.2 L1004.0,853.0 L1005.0,851.8 L1006.0,850.7 L1007.0,849.6 L1008.0,848.6 L1009.0,847.6 L1010.0,846.7 L1011.0,845.8 L1012.0,845.0 L1013.0,844.2 L1014.0,843.5 L1015.0,842.9 L1016.0,842.3 L1017.0,841.8 L1018.0,841.4 L1019.0,841.0 L1020.0,840.7 L1021.0,840.4 L1022.0,840.3 L1023.0,840.2 L1024.0,840.2 L1025.0,840.3 L1026.0,840.4 L1027.0,840.7 L1028.0,841.0 L1029.0,841.4 L1030.0,841.8 L1031.0,842.3 L1032.0,842.9 L1033.0,843.6 L1034.0,844.3 L1035.0,845.1 L1036.0,845.9 L1037.0,846.8 L1038.0,847.7 L1039.0,848.7 L1040.0,849.8 L1041.0,850.9 L1042.0,852.0 L1043.0,853.2 L1044.0,854.4 L1045.0,855.7 L1046.0,857.0 L1047.0,858.3 L1048.0,859.7 L1049.0,861.1 L1050.0,862.5 L1051.0,864.0 L1052.0,865.5 L1053.0,867.0 L1054.0,868.6 L1055.0,870.1 L1056.0,871.7 L1057.0,873.3 L1058.0,874.9 L1059.0,876.5 L1060.0,878.2 L1061.0,879.8 L1062.0,881.5 L1063.0,883.1 L1064.0,884.8 L1065.0,886.4 L1066.0,888.1 L1067.0,889.8 L1068.0,891.4 L1069.0,893.1 L1070.0,894.7 L1071.0,896.3 L1072.0,897.9 L1073.0,899.5 L1074.0,901.1 L1075.0,902.6 L1076.0,904.2 L1077.0,905.7 L1078.0,907.2 L1079.0,908.7 L1080.0,910.1 L1081.0,911.5 L1082.0,912.9 L1083.0,914.2 L1084.0,915.5 L1085.0,916.7 L1086.0,918.0 L1087.0,919.1 L1088.0,920.3 L1089.0,921.4 L1090.0,922.4 L1091.0,923.4 L1092.0,924.3 L1093.0,925.2 L1094.0,926.0 L1095.0,926.8 L1096.0,927.5 L1097.0,928.1 L1098.0,928.7 L1099.0,929.2 L1100.0,929.6 L1101.0,930.0 L1102.0,930.3 L1103.0,930.5 L1104.0,930.6 L1105.0,930.7 L1106.0,930.7 L1107.0,930.6 L1108.0,930.4 L1109.0,930.2 L1110.0,929.8 L1111.0,929.4 L1112.0,929.0 L1113.0,928.4 L1114.0,927.8 L1115.0,927.2 L1116.0,926.4 L1117.0,925.7 L1118.0,924.8 L1119.0,923.9 L1120.0,923.0 L1121.0,922.0 L1122.0,920.9 L1123.0,919.8 L1124.0,918.6 L1125.0,917.5 L1126.0,916.2 L1127.0,914.9 L1128.0,913.6 L1129.0,912.3 L1130.0,910.9 L1131.0,909.5 L1132.0,908.0 L1133.0,906.6 L1134.0,905.1 L1135.0,903.6 L1136.0,902.0 L1137.0,900.5 L1138.0,898.9 L1139.0,897.3 L1140.0,895.7 L1141.0,894.1 L1142.0,892.4 L1143.0,890.8 L1144.0,889.2 L1145.0,887.5 L1146.0,885.9 L1147.0,884.2 L1148.0,882.6 L1149.0,881.0 L1150.0,879.3 L1151.0,877.7 L1152.0,876.1 L1153.0,874.5 L1154.0,872.9 L1155.0,871.3 L1156.0,869.8 L1157.0,868.3 L1158.0,866.8 L1159.0,865.3 L1160.0,863.8 L1161.0,862.4 L1162.0,861.0 L1163.0,859.7 L1164.0,858.3 L1165.0,857.1 L1166.0,855.8 L1167.0,854.6 L1168.0,853.4 L1169.0,852.3 L1170.0,851.3 L1171.0,850.2 L1172.0,849.3 L1173.0,848.3 L1174.0,847.5 L1175.0,846.7 L1176.0,845.9 L1177.0,845.3 L1178.0,844.6 L1179.0,844.1 L1180.0,843.6 L1181.0,843.2 L1182.0,842.8 L1183.0,842.6 L1184.0,842.4 L1185.0,842.2 L1186.0,842.2 L1187.0,842.2 L1188.0,842.4 L1189.0,842.5 L1190.0,842.8 L1191.0,843.1 L1192.0,843.5 L1193.0,844.0 L1194.0,844.5 L1195.0,845.1 L1196.0,845.8 L1197.0,846.5 L1198.0,847.3 L1199.0,848.1 L1200.0,849.0 L1201.0,849.9 L1202.0,850.9 L1203.0,852.0 L1204.0,853.0 L1205.0,854.2 L1206.0,855.3 L1207.0,856.5 L1208.0,857.8 L1209.0,859.0 L1210.0,860.4 L1211.0,861.7 L1212.0,863.1 L1213.0,864.5 L1214.0,865.9 L1215.0,867.4 L1216.0,868.9 L1217.0,870.4 L1218.0,871.9 L1219.0,873.4 L1220.0,875.0 L1221.0,876.5 L1222.0,878.1 L1223.0,879.7 L1224.0,881.3 L1225.0,882.9 L1226.0,884.5 L1227.0,886.1 L1228.0,887.7 L1229.0,889.3 L1230.0,890.9 L1231.0,892.5 L1232.0,894.1 L1233.0,895.7 L1234.0,897.2 L1235.0,898.8 L1236.0,900.3 L1237.0,901.8 L1238.0,903.3 L1239.0,904.8 L1240.0,906.3 L1241.0,907.7 L1242.0,909.1 L1243.0,910.5 L1244.0,911.8" stroke="#800080" stroke-width="2" fill="none" stroke-linejoin="round"/><rect x="722" y="152" width="522" height="90" fill="none" stroke="#8c8c8c" stroke-width="2"/><path d="M713,162 H722 M713,182 H722 M713,202 H722 M713,222 H722 M713,242 H722" stroke="#8c8c8c" stroke-width="2"/><text x="713.5" y="168.6" text-anchor="end" class="tl">0.8mV</text><text x="713.5" y="188.6" text-anchor="end" class="tl">0.4mV</text><text x="713.5" y="208.6" text-anchor="end" class="tl">0.0mV</text><text x="713.5" y="228.6" text-anchor="end" class="tl">-0.4mV</text><text x="713.5" y="248.6" text-anchor="end" class="tl">-0.8mV</text><text x="906" y="147" fill="#008000" class="tt">V(HF,Vref)-0.82mV</text><rect x="722" y="266" width="522" height="90" fill="none" stroke="#8c8c8c" stroke-width="2"/><path d="M713,266 H722 M713,289 H722 M713,311 H722 M713,334 H722 M713,356 H722" stroke="#8c8c8c" stroke-width="2"/><text x="713.5" y="272.6" text-anchor="end" class="tl">1.2mV</text><text x="713.5" y="295.6" text-anchor="end" class="tl">0.6mV</text><text x="713.5" y="317.6" text-anchor="end" class="tl">0.0mV</text><text x="713.5" y="340.6" text-anchor="end" class="tl">-0.6mV</text><text x="713.5" y="362.6" text-anchor="end" class="tl">-1.2mV</text><text x="777" y="261" fill="#0000ff" class="tt">V(I0,Vref)-1.25mV</text><text x="1028" y="261" fill="#00aaaa" class="tt">V(I180,Vref)-0.45mV</text><rect x="722" y="380" width="522" height="90" fill="none" stroke="#8c8c8c" stroke-width="2"/><path d="M713,380 H722 M713,426 H722 M713,470 H722" stroke="#8c8c8c" stroke-width="2"/><text x="713.5" y="386.6" text-anchor="end" class="tl">0.9mV</text><text x="713.5" y="432.6" text-anchor="end" class="tl">-0.8mV</text><text x="713.5" y="476.6" text-anchor="end" class="tl">-2.4mV</text><text x="902" y="375" fill="#ff00ff" class="tt">V(I0,I180)-0.825mV</text><rect x="722" y="494" width="522" height="91" fill="none" stroke="#8c8c8c" stroke-width="2"/><path d="M713,494 H722 M713,540 H722 M713,585 H722" stroke="#8c8c8c" stroke-width="2"/><text x="713.5" y="500.6" text-anchor="end" class="tl">450mV</text><text x="713.5" y="546.6" text-anchor="end" class="tl">0mV</text><text x="713.5" y="591.6" text-anchor="end" class="tl">-450mV</text><text x="894" y="489" fill="#800080" class="tt">V(VoutI,Vref)+0.001V</text><rect x="722" y="609" width="522" height="91" fill="none" stroke="#8c8c8c" stroke-width="2"/><path d="M713,609 H722 M713,632 H722 M713,655 H722 M713,677 H722 M713,700 H722" stroke="#8c8c8c" stroke-width="2"/><text x="713.5" y="615.6" text-anchor="end" class="tl">1.2mV</text><text x="713.5" y="638.6" text-anchor="end" class="tl">0.6mV</text><text x="713.5" y="661.6" text-anchor="end" class="tl">0.0mV</text><text x="713.5" y="683.6" text-anchor="end" class="tl">-0.6mV</text><text x="713.5" y="706.6" text-anchor="end" class="tl">-1.2mV</text><text x="775" y="604" fill="#0000ff" class="tt">V(Q90,Vref)-1.2mV</text><text x="1031" y="604" fill="#00aaaa" class="tt">V(Q270,Vref)-0.5mV</text><rect x="722" y="724" width="522" height="91" fill="none" stroke="#8c8c8c" stroke-width="2"/><path d="M713,724 H722 M713,771 H722 M713,815 H722" stroke="#8c8c8c" stroke-width="2"/><text x="713.5" y="730.6" text-anchor="end" class="tl">0.9mV</text><text x="713.5" y="777.6" text-anchor="end" class="tl">-0.8mV</text><text x="713.5" y="821.6" text-anchor="end" class="tl">-2.4mV</text><text x="898" y="719" fill="#ff00ff" class="tt">V(Q90,Q270)-0.67mV</text><rect x="722" y="839" width="522" height="94" fill="none" stroke="#8c8c8c" stroke-width="2"/><path d="M713,839 H722 M713,886 H722 M713,933 H722" stroke="#8c8c8c" stroke-width="2"/><text x="713.5" y="845.6" text-anchor="end" class="tl">450mV</text><text x="713.5" y="892.6" text-anchor="end" class="tl">0mV</text><text x="713.5" y="939.6" text-anchor="end" class="tl">-450mV</text><text x="901" y="834" fill="#800080" class="tt">V(VoutQ,Vref)+5mV</text><path d="M721.00,175.0 L721.50,175.0 L722.00,175.1 L722.50,175.1 L723.00,175.1 L723.50,175.2 L724.00,175.2 L724.50,175.3 L725.00,175.3 L725.50,175.4 L726.00,175.4 L726.50,175.5 L727.00,175.6 L727.50,175.7 L728.00,175.8 L728.50,175.9 L729.00,176.0 L729.50,176.1 L730.00,176.2 L730.50,176.3 L731.00,176.5 L731.50,176.6 L732.00,176.7 L732.50,176.9 L733.00,177.1 L733.50,177.3 L734.00,177.5 L734.50,177.7 L735.00,177.9 L735.50,178.1 L736.00,178.4 L736.50,178.7 L737.00,179.0 L737.50,179.4 L738.00,179.9 L738.50,180.6 L738.60,181.1 L739.00,180.1 L739.50,179.5 L740.00,179.0 L740.50,178.7 L741.00,178.3 L741.50,178.0 L742.00,177.7 L742.50,177.5 L743.00,177.2 L743.50,177.0 L744.00,176.7 L744.50,176.5 L745.00,176.3 L745.50,176.1 L746.00,175.9 L746.50,175.8 L747.00,175.6 L747.50,175.4 L748.00,175.3 L748.50,175.1 L749.00,175.0 L749.50,174.9 L750.00,174.7 L750.50,174.6 L751.00,174.5 L751.50,174.4 L752.00,174.3 L752.50,174.2 L753.00,174.1 L753.50,174.0 L754.00,173.9 L754.50,173.8 L755.00,173.8 L755.50,173.7 L756.00,173.6 L756.50,173.6 L757.00,173.5 L757.50,173.5 L758.00,173.4 L758.50,173.4 L759.00,173.4 L759.50,173.4 L760.00,173.4 L760.50,173.3 L761.00,173.3 L761.50,173.3 L762.00,173.4 L762.50,173.4 L763.00,173.4 L763.50,173.4 L764.00,173.4 L764.50,173.5 L765.00,173.5 L765.50,173.6 L766.00,173.6 L766.50,173.7 L767.00,173.8 L767.50,173.8 L768.00,173.9 L768.50,174.0 L769.00,174.1 L769.50,174.2 L770.00,174.3 L770.50,174.4 L771.00,174.5 L771.50,174.6 L772.00,174.8 L772.50,174.9 L773.00,175.1 L773.50,175.2 L774.00,175.4 L774.50,175.6 L775.00,175.8 L775.50,176.0 L776.00,176.2 L776.50,176.5 L777.00,176.8 L777.50,177.1 L778.00,177.4 L778.50,177.8 L779.00,178.4 L779.40,179.4 L779.50,178.9 L780.00,178.1 L780.50,177.6 L781.00,177.1 L781.50,176.7 L782.00,176.4 L782.50,176.1 L783.00,175.8 L783.50,175.5 L784.00,175.2 L784.50,175.0 L785.00,174.7 L785.50,174.5 L786.00,174.3 L786.50,174.1 L787.00,173.9 L787.50,173.7 L788.00,173.5 L788.50,173.4 L789.00,173.2 L789.50,173.0 L790.00,172.9 L790.50,172.7 L791.00,172.6 L791.50,172.5 L792.00,172.3 L792.50,172.2 L793.00,172.1 L793.50,172.0 L794.00,171.9 L794.50,171.8 L795.00,171.7 L795.50,171.6 L796.00,171.5 L796.50,171.5 L797.00,171.4 L797.50,171.3 L798.00,171.3 L798.50,171.2 L799.00,171.2 L799.50,171.2 L800.00,171.1 L800.50,171.1 L801.00,171.1 L801.50,171.1 L802.00,171.1 L802.50,171.1 L803.00,171.1 L803.50,171.1 L804.00,171.1 L804.50,171.1 L805.00,171.1 L805.50,171.2 L806.00,171.2 L806.50,171.2 L807.00,171.3 L807.50,171.4 L808.00,171.4 L808.50,171.5 L809.00,171.6 L809.50,171.6 L810.00,171.7 L810.50,171.8 L811.00,171.9 L811.50,172.1 L812.00,172.2 L812.50,172.3 L813.00,172.4 L813.50,172.6 L814.00,172.7 L814.50,172.9 L815.00,173.1 L815.50,173.3 L816.00,173.5 L816.50,173.7 L817.00,174.0 L817.50,174.2 L818.00,174.5 L818.50,174.9 L819.00,175.3 L819.50,175.8 L820.00,176.5 L820.20,177.2 L820.50,176.3 L821.00,175.6 L821.50,175.1 L822.00,174.6 L822.50,174.2 L823.00,173.9 L823.50,173.6 L824.00,173.2 L824.50,173.0 L825.00,172.7 L825.50,172.4 L826.00,172.2 L826.50,171.9 L827.00,171.7 L827.50,171.5 L828.00,171.3 L828.50,171.1 L829.00,170.9 L829.50,170.7 L830.00,170.5 L830.50,170.4 L831.00,170.2 L831.50,170.0 L832.00,169.9 L832.50,169.8 L833.00,169.6 L833.50,169.5 L834.00,169.4 L834.50,169.3 L835.00,169.2 L835.50,169.1 L836.00,169.0 L836.50,168.9 L837.00,168.8 L837.50,168.7 L838.00,168.7 L838.50,168.6 L839.00,168.5 L839.50,168.5 L840.00,168.5 L840.50,168.4 L841.00,168.4 L841.50,168.4 L842.00,168.4 L842.50,168.4 L843.00,168.4 L843.50,168.4 L844.00,168.4 L844.50,168.4 L845.00,168.5 L845.50,168.5 L846.00,168.5 L846.50,168.6 L847.00,168.6 L847.50,168.7 L848.00,168.8 L848.50,168.9 L849.00,169.0 L849.50,169.1 L850.00,169.2 L850.50,169.3 L851.00,169.4 L851.50,169.5 L852.00,169.7 L852.50,169.8 L853.00,170.0 L853.50,170.2 L854.00,170.3 L854.50,170.5 L855.00,170.7 L855.50,170.9 L856.00,171.2 L856.50,171.4 L857.00,171.7 L857.50,171.9 L858.00,172.2 L858.50,172.6 L859.00,172.9 L859.50,173.4 L860.00,173.8 L860.50,174.5 L861.00,175.8 L861.50,174.4 L862.00,173.8 L862.50,173.2 L863.00,172.8 L863.50,172.4 L864.00,172.0 L864.50,171.7 L865.00,171.3 L865.50,171.0 L866.00,170.8 L866.50,170.5 L867.00,170.2 L867.50,170.0 L868.00,169.8 L868.50,169.5 L869.00,169.3 L869.50,169.1 L870.00,168.9 L870.50,168.8 L871.00,168.6 L871.50,168.4 L872.00,168.3 L872.50,168.1 L873.00,168.0 L873.50,167.8 L874.00,167.7 L874.50,167.6 L875.00,167.5 L875.50,167.3 L876.00,167.2 L876.50,167.1 L877.00,167.1 L877.50,167.0 L878.00,166.9 L878.50,166.8 L879.00,166.8 L879.50,166.7 L880.00,166.7 L880.50,166.6 L881.00,166.6 L881.50,166.6 L882.00,166.6 L882.50,166.5 L883.00,166.5 L883.50,166.5 L884.00,166.5 L884.50,166.5 L885.00,166.6 L885.50,166.6 L886.00,166.6 L886.50,166.6 L887.00,166.7 L887.50,166.7 L888.00,166.8 L888.50,166.9 L889.00,166.9 L889.50,167.0 L890.00,167.1 L890.50,167.2 L891.00,167.3 L891.50,167.4 L892.00,167.5 L892.50,167.7 L893.00,167.8 L893.50,168.0 L894.00,168.1 L894.50,168.3 L895.00,168.5 L895.50,168.7 L896.00,168.9 L896.50,169.1 L897.00,169.3 L897.50,169.6 L898.00,169.8 L898.50,170.1 L899.00,170.5 L899.50,170.8 L900.00,171.2 L900.50,171.7 L901.00,172.2 L901.50,173.0 L901.80,174.1 L902.00,173.2 L902.50,172.3 L903.00,171.7 L903.50,171.2 L904.00,170.7 L904.50,170.3 L905.00,169.9 L905.50,169.5 L906.00,169.2 L906.50,168.9 L907.00,168.6 L907.50,168.3 L908.00,168.0 L908.50,167.8 L909.00,167.5 L909.50,167.3 L910.00,167.0 L910.50,166.8 L911.00,166.6 L911.50,166.4 L912.00,166.2 L912.50,166.0 L913.00,165.9 L913.50,165.7 L914.00,165.5 L914.50,165.4 L915.00,165.2 L915.50,165.1 L916.00,165.0 L916.50,164.9 L917.00,164.8 L917.50,164.7 L918.00,164.6 L918.50,164.5 L919.00,164.4 L919.50,164.3 L920.00,164.3 L920.50,164.2 L921.00,164.2 L921.50,164.2 L922.00,164.1 L922.50,164.1 L923.00,164.1 L923.50,164.1 L924.00,164.1 L924.50,164.1 L925.00,164.2 L925.50,164.2 L926.00,164.2 L926.50,164.3 L927.00,164.3 L927.50,164.4 L928.00,164.5 L928.50,164.5 L929.00,164.6 L929.50,164.7 L930.00,164.8 L930.50,165.0 L931.00,165.1 L931.50,165.2 L932.00,165.3 L932.50,165.5 L933.00,165.7 L933.50,165.8 L934.00,166.0 L934.50,166.2 L935.00,166.4 L935.50,166.6 L936.00,166.8 L936.50,167.1 L937.00,167.3 L937.50,167.6 L938.00,167.9 L938.50,168.2 L939.00,168.5 L939.50,168.9 L940.00,169.2 L940.50,169.7 L941.00,170.1 L941.50,170.7 L942.00,171.4 L942.50,172.5 L942.60,173.1 L943.00,171.7 L943.50,170.9 L944.00,170.3 L944.50,169.8 L945.00,169.3 L945.50,168.9 L946.00,168.5 L946.50,168.2 L947.00,167.8 L947.50,167.5 L948.00,167.2 L948.50,166.9 L949.00,166.7 L949.50,166.4 L950.00,166.2 L950.50,165.9 L951.00,165.7 L951.50,165.5 L952.00,165.3 L952.50,165.1 L953.00,165.0 L953.50,164.8 L954.00,164.6 L954.50,164.5 L955.00,164.3 L955.50,164.2 L956.00,164.1 L956.50,164.0 L957.00,163.8 L957.50,163.7 L958.00,163.7 L958.50,163.6 L959.00,163.5 L959.50,163.4 L960.00,163.4 L960.50,163.3 L961.00,163.3 L961.50,163.2 L962.00,163.2 L962.50,163.2 L963.00,163.1 L963.50,163.1 L964.00,163.1 L964.50,163.1 L965.00,163.2 L965.50,163.2 L966.00,163.2 L966.50,163.3 L967.00,163.3 L967.50,163.4 L968.00,163.4 L968.50,163.5 L969.00,163.6 L969.50,163.7 L970.00,163.8 L970.50,163.9 L971.00,164.0 L971.50,164.1 L972.00,164.2 L972.50,164.4 L973.00,164.5 L973.50,164.7 L974.00,164.8 L974.50,165.0 L975.00,165.2 L975.50,165.4 L976.00,165.6 L976.50,165.8 L977.00,166.1 L977.50,166.3 L978.00,166.6 L978.50,166.9 L979.00,167.2 L979.50,167.5 L980.00,167.8 L980.50,168.2 L981.00,168.6 L981.50,169.1 L982.00,169.6 L982.50,170.2 L983.00,171.0 L983.40,172.4 L983.50,171.7 L984.00,170.6 L984.50,169.9 L985.00,169.3 L985.50,168.8 L986.00,168.3 L986.50,167.9 L987.00,167.5 L987.50,167.2 L988.00,166.8 L988.50,166.5 L989.00,166.2 L989.50,165.9 L990.00,165.6 L990.50,165.4 L991.00,165.1 L991.50,164.9 L992.00,164.7 L992.50,164.5 L993.00,164.3 L993.50,164.1 L994.00,163.9 L994.50,163.7 L995.00,163.6 L995.50,163.4 L996.00,163.3 L996.50,163.1 L997.00,163.0 L997.50,162.9 L998.00,162.8 L998.50,162.7 L999.00,162.6 L999.50,162.5 L1000.00,162.4 L1000.50,162.4 L1001.00,162.3 L1001.50,162.2 L1002.00,162.2 L1002.50,162.2 L1003.00,162.1 L1003.50,162.1 L1004.00,162.1 L1004.50,162.1 L1005.00,162.1 L1005.50,162.1 L1006.00,162.2 L1006.50,162.2 L1007.00,162.2 L1007.50,162.3 L1008.00,162.3 L1008.50,162.4 L1009.00,162.5 L1009.50,162.5 L1010.00,162.6 L1010.50,162.7 L1011.00,162.8 L1011.50,162.9 L1012.00,163.0 L1012.50,163.2 L1013.00,163.3 L1013.50,163.4 L1014.00,163.6 L1014.50,163.7 L1015.00,163.9 L1015.50,164.1 L1016.00,164.3 L1016.50,164.5 L1017.00,164.7 L1017.50,164.9 L1018.00,165.2 L1018.50,165.4 L1019.00,165.7 L1019.50,165.9 L1020.00,166.2 L1020.50,166.6 L1021.00,166.9 L1021.50,167.3 L1022.00,167.7 L1022.50,168.1 L1023.00,168.7 L1023.50,169.3 L1024.00,170.3 L1024.20,171.2 L1024.50,170.0 L1025.00,169.2 L1025.50,168.5 L1026.00,168.0 L1026.50,167.6 L1027.00,167.1 L1027.50,166.8 L1028.00,166.4 L1028.50,166.1 L1029.00,165.8 L1029.50,165.5 L1030.00,165.2 L1030.50,164.9 L1031.00,164.7 L1031.50,164.5 L1032.00,164.2 L1032.50,164.0 L1033.00,163.8 L1033.50,163.6 L1034.00,163.4 L1034.50,163.3 L1035.00,163.1 L1035.50,163.0 L1036.00,162.8 L1036.50,162.7 L1037.00,162.5 L1037.50,162.4 L1038.00,162.3 L1038.50,162.2 L1039.00,162.1 L1039.50,162.0 L1040.00,161.9 L1040.50,161.9 L1041.00,161.8 L1041.50,161.8 L1042.00,161.7 L1042.50,161.7 L1043.00,161.6 L1043.50,161.6 L1044.00,161.6 L1044.50,161.6 L1045.00,161.6 L1045.50,161.6 L1046.00,161.6 L1046.50,161.7 L1047.00,161.7 L1047.50,161.7 L1048.00,161.8 L1048.50,161.8 L1049.00,161.9 L1049.50,162.0 L1050.00,162.1 L1050.50,162.1 L1051.00,162.2 L1051.50,162.3 L1052.00,162.5 L1052.50,162.6 L1053.00,162.7 L1053.50,162.8 L1054.00,163.0 L1054.50,163.2 L1055.00,163.3 L1055.50,163.5 L1056.00,163.7 L1056.50,163.9 L1057.00,164.1 L1057.50,164.3 L1058.00,164.5 L1058.50,164.8 L1059.00,165.0 L1059.50,165.3 L1060.00,165.6 L1060.50,165.9 L1061.00,166.2 L1061.50,166.5 L1062.00,166.9 L1062.50,167.3 L1063.00,167.7 L1063.50,168.2 L1064.00,168.8 L1064.50,169.5 L1065.00,171.1 L1065.50,169.5 L1066.00,168.8 L1066.50,168.2 L1067.00,167.7 L1067.50,167.3 L1068.00,166.9 L1068.50,166.5 L1069.00,166.2 L1069.50,165.9 L1070.00,165.6 L1070.50,165.3 L1071.00,165.0 L1071.50,164.8 L1072.00,164.5 L1072.50,164.3 L1073.00,164.1 L1073.50,163.9 L1074.00,163.7 L1074.50,163.5 L1075.00,163.3 L1075.50,163.2 L1076.00,163.0 L1076.50,162.8 L1077.00,162.7 L1077.50,162.6 L1078.00,162.5 L1078.50,162.3 L1079.00,162.2 L1079.50,162.1 L1080.00,162.1 L1080.50,162.0 L1081.00,161.9 L1081.50,161.8 L1082.00,161.8 L1082.50,161.7 L1083.00,161.7 L1083.50,161.7 L1084.00,161.6 L1084.50,161.6 L1085.00,161.6 L1085.50,161.6 L1086.00,161.6 L1086.50,161.6 L1087.00,161.6 L1087.50,161.7 L1088.00,161.7 L1088.50,161.7 L1089.00,161.8 L1089.50,161.9 L1090.00,161.9 L1090.50,162.0 L1091.00,162.1 L1091.50,162.2 L1092.00,162.3 L1092.50,162.4 L1093.00,162.5 L1093.50,162.7 L1094.00,162.8 L1094.50,163.0 L1095.00,163.1 L1095.50,163.3 L1096.00,163.4 L1096.50,163.6 L1097.00,163.8 L1097.50,164.0 L1098.00,164.2 L1098.50,164.5 L1099.00,164.7 L1099.50,165.0 L1100.00,165.2 L1100.50,165.5 L1101.00,165.8 L1101.50,166.1 L1102.00,166.4 L1102.50,166.8 L1103.00,167.1 L1103.50,167.5 L1104.00,168.0 L1104.50,168.5 L1105.00,169.1 L1105.50,169.9 L1105.80,171.1 L1106.00,170.2 L1106.50,169.3 L1107.00,168.6 L1107.50,168.1 L1108.00,167.7 L1108.50,167.3 L1109.00,166.9 L1109.50,166.6 L1110.00,166.3 L1110.50,166.0 L1111.00,165.8 L1111.50,165.5 L1112.00,165.3 L1112.50,165.1 L1113.00,164.8 L1113.50,164.7 L1114.00,164.5 L1114.50,164.3 L1115.00,164.1 L1115.50,164.0 L1116.00,163.8 L1116.50,163.7 L1117.00,163.6 L1117.50,163.5 L1118.00,163.3 L1118.50,163.2 L1119.00,163.1 L1119.50,163.1 L1120.00,163.0 L1120.50,162.9 L1121.00,162.8 L1121.50,162.8 L1122.00,162.7 L1122.50,162.7 L1123.00,162.6 L1123.50,162.6 L1124.00,162.6 L1124.50,162.6 L1125.00,162.6 L1125.50,162.6 L1126.00,162.6 L1126.50,162.6 L1127.00,162.6 L1127.50,162.6 L1128.00,162.7 L1128.50,162.7 L1129.00,162.8 L1129.50,162.8 L1130.00,162.9 L1130.50,163.0 L1131.00,163.0 L1131.50,163.1 L1132.00,163.2 L1132.50,163.3 L1133.00,163.4 L1133.50,163.6 L1134.00,163.7 L1134.50,163.8 L1135.00,164.0 L1135.50,164.1 L1136.00,164.3 L1136.50,164.4 L1137.00,164.6 L1137.50,164.8 L1138.00,165.0 L1138.50,165.2 L1139.00,165.5 L1139.50,165.7 L1140.00,165.9 L1140.50,166.2 L1141.00,166.5 L1141.50,166.8 L1142.00,167.1 L1142.50,167.4 L1143.00,167.7 L1143.50,168.1 L1144.00,168.5 L1144.50,169.0 L1145.00,169.5 L1145.50,170.0 L1146.00,170.7 L1146.50,171.8 L1146.60,172.5 L1147.00,171.1 L1147.50,170.3 L1148.00,169.7 L1148.50,169.2 L1149.00,168.8 L1149.50,168.4 L1150.00,168.0 L1150.50,167.7 L1151.00,167.4 L1151.50,167.1 L1152.00,166.8 L1152.50,166.6 L1153.00,166.3 L1153.50,166.1 L1154.00,165.9 L1154.50,165.7 L1155.00,165.5 L1155.50,165.3 L1156.00,165.1 L1156.50,164.9 L1157.00,164.8 L1157.50,164.6 L1158.00,164.5 L1158.50,164.4 L1159.00,164.2 L1159.50,164.1 L1160.00,164.0 L1160.50,163.9 L1161.00,163.8 L1161.50,163.8 L1162.00,163.7 L1162.50,163.6 L1163.00,163.6 L1163.50,163.5 L1164.00,163.5 L1164.50,163.5 L1165.00,163.4 L1165.50,163.4 L1166.00,163.4 L1166.50,163.4 L1167.00,163.4 L1167.50,163.4 L1168.00,163.5 L1168.50,163.5 L1169.00,163.5 L1169.50,163.6 L1170.00,163.6 L1170.50,163.7 L1171.00,163.8 L1171.50,163.9 L1172.00,164.0 L1172.50,164.1 L1173.00,164.2 L1173.50,164.3 L1174.00,164.4 L1174.50,164.5 L1175.00,164.7 L1175.50,164.8 L1176.00,165.0 L1176.50,165.1 L1177.00,165.3 L1177.50,165.5 L1178.00,165.7 L1178.50,165.9 L1179.00,166.1 L1179.50,166.3 L1180.00,166.5 L1180.50,166.8 L1181.00,167.0 L1181.50,167.3 L1182.00,167.5 L1182.50,167.8 L1183.00,168.1 L1183.50,168.5 L1184.00,168.8 L1184.50,169.2 L1185.00,169.6 L1185.50,170.1 L1186.00,170.6 L1186.50,171.2 L1187.00,171.9 L1187.40,173.3 L1187.50,172.7 L1188.00,171.6 L1188.50,170.9 L1189.00,170.4 L1189.50,170.0 L1190.00,169.6 L1190.50,169.2 L1191.00,168.9 L1191.50,168.6 L1192.00,168.3 L1192.50,168.0 L1193.00,167.8 L1193.50,167.5 L1194.00,167.3 L1194.50,167.1 L1195.00,166.9 L1195.50,166.7 L1196.00,166.5 L1196.50,166.4 L1197.00,166.2 L1197.50,166.1 L1198.00,165.9 L1198.50,165.8 L1199.00,165.7 L1199.50,165.6 L1200.00,165.5 L1200.50,165.4 L1201.00,165.3 L1201.50,165.2 L1202.00,165.1 L1202.50,165.1 L1203.00,165.0 L1203.50,164.9 L1204.00,164.9 L1204.50,164.9 L1205.00,164.8 L1205.50,164.8 L1206.00,164.8 L1206.50,164.8 L1207.00,164.8 L1207.50,164.8 L1208.00,164.8 L1208.50,164.9 L1209.00,164.9 L1209.50,164.9 L1210.00,165.0 L1210.50,165.0 L1211.00,165.1 L1211.50,165.1 L1212.00,165.2 L1212.50,165.3 L1213.00,165.4 L1213.50,165.5 L1214.00,165.6 L1214.50,165.7 L1215.00,165.8 L1215.50,165.9 L1216.00,166.1 L1216.50,166.2 L1217.00,166.4 L1217.50,166.5 L1218.00,166.7 L1218.50,166.8 L1219.00,167.0 L1219.50,167.2 L1220.00,167.4 L1220.50,167.6 L1221.00,167.8 L1221.50,168.1 L1222.00,168.3 L1222.50,168.6 L1223.00,168.8 L1223.50,169.1 L1224.00,169.4 L1224.50,169.7 L1225.00,170.0 L1225.50,170.4 L1226.00,170.8 L1226.50,171.2 L1227.00,171.7 L1227.50,172.3 L1228.00,173.1 L1228.20,174.0 L1228.50,172.9 L1229.00,172.2 L1229.50,171.6 L1230.00,171.2 L1230.50,170.8 L1231.00,170.4 L1231.50,170.1 L1232.00,169.8 L1232.50,169.5 L1233.00,169.3 L1233.50,169.0 L1234.00,168.8 L1234.50,168.6 L1235.00,168.4 L1235.50,168.2 L1236.00,168.0 L1236.50,167.9 L1237.00,167.7 L1237.50,167.6 L1238.00,167.4 L1238.50,167.3 L1239.00,167.2 L1239.50,167.0 L1240.00,166.9 L1240.50,166.8 L1241.00,166.7 L1241.50,166.7 L1242.00,166.6 L1242.50,166.5 L1243.00,166.4 L1243.50,166.4 L1244.00,166.3 L1244.50,166.3 L1245.00,166.3 L1245.00,236.9 L1244.50,236.9 L1244.00,236.9 L1243.50,236.8 L1243.00,236.8 L1242.50,236.7 L1242.00,236.6 L1241.50,236.5 L1241.00,236.5 L1240.50,236.4 L1240.00,236.3 L1239.50,236.2 L1239.00,236.0 L1238.50,235.9 L1238.00,235.8 L1237.50,235.6 L1237.00,235.5 L1236.50,235.3 L1236.00,235.2 L1235.50,235.0 L1235.00,234.8 L1234.50,234.6 L1234.00,234.4 L1233.50,234.2 L1233.00,233.9 L1232.50,233.7 L1232.00,233.4 L1231.50,233.1 L1231.00,232.8 L1230.50,232.4 L1230.00,232.0 L1229.50,231.6 L1229.00,231.0 L1228.50,230.3 L1228.20,229.2 L1228.00,230.1 L1227.50,230.9 L1227.00,231.5 L1226.50,232.0 L1226.00,232.4 L1225.50,232.8 L1225.00,233.2 L1224.50,233.5 L1224.00,233.8 L1223.50,234.1 L1223.00,234.4 L1222.50,234.6 L1222.00,234.9 L1221.50,235.1 L1221.00,235.4 L1220.50,235.6 L1220.00,235.8 L1219.50,236.0 L1219.00,236.2 L1218.50,236.4 L1218.00,236.5 L1217.50,236.7 L1217.00,236.8 L1216.50,237.0 L1216.00,237.1 L1215.50,237.3 L1215.00,237.4 L1214.50,237.5 L1214.00,237.6 L1213.50,237.7 L1213.00,237.8 L1212.50,237.9 L1212.00,238.0 L1211.50,238.1 L1211.00,238.1 L1210.50,238.2 L1210.00,238.2 L1209.50,238.3 L1209.00,238.3 L1208.50,238.3 L1208.00,238.4 L1207.50,238.4 L1207.00,238.4 L1206.50,238.4 L1206.00,238.4 L1205.50,238.4 L1205.00,238.4 L1204.50,238.3 L1204.00,238.3 L1203.50,238.3 L1203.00,238.2 L1202.50,238.1 L1202.00,238.1 L1201.50,238.0 L1201.00,237.9 L1200.50,237.8 L1200.00,237.7 L1199.50,237.6 L1199.00,237.5 L1198.50,237.4 L1198.00,237.3 L1197.50,237.1 L1197.00,237.0 L1196.50,236.8 L1196.00,236.7 L1195.50,236.5 L1195.00,236.3 L1194.50,236.1 L1194.00,235.9 L1193.50,235.7 L1193.00,235.4 L1192.50,235.2 L1192.00,234.9 L1191.50,234.6 L1191.00,234.3 L1190.50,234.0 L1190.00,233.6 L1189.50,233.2 L1189.00,232.8 L1188.50,232.3 L1188.00,231.6 L1187.50,230.5 L1187.40,229.9 L1187.00,231.3 L1186.50,232.0 L1186.00,232.6 L1185.50,233.1 L1185.00,233.6 L1184.50,234.0 L1184.00,234.4 L1183.50,234.7 L1183.00,235.1 L1182.50,235.4 L1182.00,235.7 L1181.50,235.9 L1181.00,236.2 L1180.50,236.4 L1180.00,236.7 L1179.50,236.9 L1179.00,237.1 L1178.50,237.3 L1178.00,237.5 L1177.50,237.7 L1177.00,237.9 L1176.50,238.1 L1176.00,238.2 L1175.50,238.4 L1175.00,238.5 L1174.50,238.7 L1174.00,238.8 L1173.50,238.9 L1173.00,239.0 L1172.50,239.1 L1172.00,239.2 L1171.50,239.3 L1171.00,239.4 L1170.50,239.5 L1170.00,239.6 L1169.50,239.6 L1169.00,239.7 L1168.50,239.7 L1168.00,239.7 L1167.50,239.8 L1167.00,239.8 L1166.50,239.8 L1166.00,239.8 L1165.50,239.8 L1165.00,239.8 L1164.50,239.7 L1164.00,239.7 L1163.50,239.7 L1163.00,239.6 L1162.50,239.6 L1162.00,239.5 L1161.50,239.4 L1161.00,239.4 L1160.50,239.3 L1160.00,239.2 L1159.50,239.1 L1159.00,239.0 L1158.50,238.8 L1158.00,238.7 L1157.50,238.6 L1157.00,238.4 L1156.50,238.3 L1156.00,238.1 L1155.50,237.9 L1155.00,237.7 L1154.50,237.5 L1154.00,237.3 L1153.50,237.1 L1153.00,236.9 L1152.50,236.6 L1152.00,236.4 L1151.50,236.1 L1151.00,235.8 L1150.50,235.5 L1150.00,235.2 L1149.50,234.8 L1149.00,234.4 L1148.50,234.0 L1148.00,233.5 L1147.50,232.9 L1147.00,232.1 L1146.60,230.7 L1146.50,231.4 L1146.00,232.5 L1145.50,233.2 L1145.00,233.7 L1144.50,234.2 L1144.00,234.7 L1143.50,235.1 L1143.00,235.5 L1142.50,235.8 L1142.00,236.1 L1141.50,236.4 L1141.00,236.7 L1140.50,237.0 L1140.00,237.3 L1139.50,237.5 L1139.00,237.7 L1138.50,238.0 L1138.00,238.2 L1137.50,238.4 L1137.00,238.6 L1136.50,238.8 L1136.00,238.9 L1135.50,239.1 L1135.00,239.2 L1134.50,239.4 L1134.00,239.5 L1133.50,239.6 L1133.00,239.8 L1132.50,239.9 L1132.00,240.0 L1131.50,240.1 L1131.00,240.2 L1130.50,240.2 L1130.00,240.3 L1129.50,240.4 L1129.00,240.4 L1128.50,240.5 L1128.00,240.5 L1127.50,240.6 L1127.00,240.6 L1126.50,240.6 L1126.00,240.6 L1125.50,240.6 L1125.00,240.6 L1124.50,240.6 L1124.00,240.6 L1123.50,240.6 L1123.00,240.6 L1122.50,240.5 L1122.00,240.5 L1121.50,240.4 L1121.00,240.4 L1120.50,240.3 L1120.00,240.2 L1119.50,240.1 L1119.00,240.1 L1118.50,240.0 L1118.00,239.9 L1117.50,239.7 L1117.00,239.6 L1116.50,239.5 L1116.00,239.4 L1115.50,239.2 L1115.00,239.1 L1114.50,238.9 L1114.00,238.7 L1113.50,238.5 L1113.00,238.4 L1112.50,238.1 L1112.00,237.9 L1111.50,237.7 L1111.00,237.4 L1110.50,237.2 L1110.00,236.9 L1109.50,236.6 L1109.00,236.3 L1108.50,235.9 L1108.00,235.5 L1107.50,235.1 L1107.00,234.6 L1106.50,233.9 L1106.00,233.0 L1105.80,232.1 L1105.50,233.3 L1105.00,234.1 L1104.50,234.7 L1104.00,235.2 L1103.50,235.7 L1103.00,236.1 L1102.50,236.4 L1102.00,236.8 L1101.50,237.1 L1101.00,237.4 L1100.50,237.7 L1100.00,238.0 L1099.50,238.2 L1099.00,238.5 L1098.50,238.7 L1098.00,239.0 L1097.50,239.2 L1097.00,239.4 L1096.50,239.6 L1096.00,239.8 L1095.50,239.9 L1095.00,240.1 L1094.50,240.2 L1094.00,240.4 L1093.50,240.5 L1093.00,240.7 L1092.50,240.8 L1092.00,240.9 L1091.50,241.0 L1091.00,241.1 L1090.50,241.2 L1090.00,241.3 L1089.50,241.3 L1089.00,241.4 L1088.50,241.5 L1088.00,241.5 L1087.50,241.5 L1087.00,241.6 L1086.50,241.6 L1086.00,241.6 L1085.50,241.6 L1085.00,241.6 L1084.50,241.6 L1084.00,241.6 L1083.50,241.5 L1083.00,241.5 L1082.50,241.5 L1082.00,241.4 L1081.50,241.4 L1081.00,241.3 L1080.50,241.2 L1080.00,241.1 L1079.50,241.1 L1079.00,241.0 L1078.50,240.9 L1078.00,240.7 L1077.50,240.6 L1077.00,240.5 L1076.50,240.4 L1076.00,240.2 L1075.50,240.0 L1075.00,239.9 L1074.50,239.7 L1074.00,239.5 L1073.50,239.3 L1073.00,239.1 L1072.50,238.9 L1072.00,238.7 L1071.50,238.4 L1071.00,238.2 L1070.50,237.9 L1070.00,237.6 L1069.50,237.3 L1069.00,237.0 L1068.50,236.7 L1068.00,236.3 L1067.50,235.9 L1067.00,235.5 L1066.50,235.0 L1066.00,234.4 L1065.50,233.7 L1065.00,232.1 L1064.50,233.7 L1064.00,234.4 L1063.50,235.0 L1063.00,235.5 L1062.50,235.9 L1062.00,236.3 L1061.50,236.7 L1061.00,237.0 L1060.50,237.3 L1060.00,237.6 L1059.50,237.9 L1059.00,238.2 L1058.50,238.4 L1058.00,238.7 L1057.50,238.9 L1057.00,239.1 L1056.50,239.3 L1056.00,239.5 L1055.50,239.7 L1055.00,239.9 L1054.50,240.0 L1054.00,240.2 L1053.50,240.4 L1053.00,240.5 L1052.50,240.6 L1052.00,240.7 L1051.50,240.9 L1051.00,241.0 L1050.50,241.1 L1050.00,241.1 L1049.50,241.2 L1049.00,241.3 L1048.50,241.4 L1048.00,241.4 L1047.50,241.5 L1047.00,241.5 L1046.50,241.5 L1046.00,241.6 L1045.50,241.6 L1045.00,241.6 L1044.50,241.6 L1044.00,241.6 L1043.50,241.6 L1043.00,241.6 L1042.50,241.5 L1042.00,241.5 L1041.50,241.4 L1041.00,241.4 L1040.50,241.3 L1040.00,241.3 L1039.50,241.2 L1039.00,241.1 L1038.50,241.0 L1038.00,240.9 L1037.50,240.8 L1037.00,240.7 L1036.50,240.5 L1036.00,240.4 L1035.50,240.2 L1035.00,240.1 L1034.50,239.9 L1034.00,239.8 L1033.50,239.6 L1033.00,239.4 L1032.50,239.2 L1032.00,239.0 L1031.50,238.7 L1031.00,238.5 L1030.50,238.3 L1030.00,238.0 L1029.50,237.7 L1029.00,237.4 L1028.50,237.1 L1028.00,236.8 L1027.50,236.4 L1027.00,236.1 L1026.50,235.6 L1026.00,235.2 L1025.50,234.7 L1025.00,234.0 L1024.50,233.2 L1024.20,232.0 L1024.00,232.9 L1023.50,233.9 L1023.00,234.5 L1022.50,235.1 L1022.00,235.5 L1021.50,235.9 L1021.00,236.3 L1020.50,236.6 L1020.00,237.0 L1019.50,237.3 L1019.00,237.5 L1018.50,237.8 L1018.00,238.0 L1017.50,238.3 L1017.00,238.5 L1016.50,238.7 L1016.00,238.9 L1015.50,239.1 L1015.00,239.3 L1014.50,239.5 L1014.00,239.6 L1013.50,239.8 L1013.00,239.9 L1012.50,240.0 L1012.00,240.2 L1011.50,240.3 L1011.00,240.4 L1010.50,240.5 L1010.00,240.6 L1009.50,240.7 L1009.00,240.7 L1008.50,240.8 L1008.00,240.9 L1007.50,240.9 L1007.00,241.0 L1006.50,241.0 L1006.00,241.0 L1005.50,241.1 L1005.00,241.1 L1004.50,241.1 L1004.00,241.1 L1003.50,241.1 L1003.00,241.1 L1002.50,241.0 L1002.00,241.0 L1001.50,241.0 L1001.00,240.9 L1000.50,240.8 L1000.00,240.8 L999.50,240.7 L999.00,240.6 L998.50,240.5 L998.00,240.4 L997.50,240.3 L997.00,240.2 L996.50,240.1 L996.00,239.9 L995.50,239.8 L995.00,239.6 L994.50,239.5 L994.00,239.3 L993.50,239.1 L993.00,238.9 L992.50,238.7 L992.00,238.5 L991.50,238.3 L991.00,238.1 L990.50,237.8 L990.00,237.6 L989.50,237.3 L989.00,237.0 L988.50,236.7 L988.00,236.4 L987.50,236.0 L987.00,235.7 L986.50,235.3 L986.00,234.9 L985.50,234.4 L985.00,233.9 L984.50,233.3 L984.00,232.6 L983.50,231.5 L983.40,230.8 L983.00,232.2 L982.50,233.0 L982.00,233.6 L981.50,234.1 L981.00,234.6 L980.50,235.0 L980.00,235.4 L979.50,235.7 L979.00,236.0 L978.50,236.3 L978.00,236.6 L977.50,236.9 L977.00,237.1 L976.50,237.4 L976.00,237.6 L975.50,237.8 L975.00,238.0 L974.50,238.2 L974.00,238.4 L973.50,238.5 L973.00,238.7 L972.50,238.8 L972.00,239.0 L971.50,239.1 L971.00,239.2 L970.50,239.3 L970.00,239.4 L969.50,239.5 L969.00,239.6 L968.50,239.7 L968.00,239.8 L967.50,239.8 L967.00,239.9 L966.50,239.9 L966.00,240.0 L965.50,240.0 L965.00,240.0 L964.50,240.1 L964.00,240.1 L963.50,240.1 L963.00,240.1 L962.50,240.0 L962.00,240.0 L961.50,240.0 L961.00,239.9 L960.50,239.9 L960.00,239.8 L959.50,239.8 L959.00,239.7 L958.50,239.6 L958.00,239.5 L957.50,239.5 L957.00,239.4 L956.50,239.2 L956.00,239.1 L955.50,239.0 L955.00,238.9 L954.50,238.7 L954.00,238.6 L953.50,238.4 L953.00,238.2 L952.50,238.1 L952.00,237.9 L951.50,237.7 L951.00,237.5 L950.50,237.3 L950.00,237.0 L949.50,236.8 L949.00,236.5 L948.50,236.3 L948.00,236.0 L947.50,235.7 L947.00,235.4 L946.50,235.0 L946.00,234.7 L945.50,234.3 L945.00,233.9 L944.50,233.4 L944.00,232.9 L943.50,232.3 L943.00,231.5 L942.60,230.1 L942.50,230.7 L942.00,231.8 L941.50,232.5 L941.00,233.1 L940.50,233.5 L940.00,234.0 L939.50,234.3 L939.00,234.7 L938.50,235.0 L938.00,235.3 L937.50,235.6 L937.00,235.9 L936.50,236.1 L936.00,236.4 L935.50,236.6 L935.00,236.8 L934.50,237.0 L934.00,237.2 L933.50,237.4 L933.00,237.5 L932.50,237.7 L932.00,237.9 L931.50,238.0 L931.00,238.1 L930.50,238.2 L930.00,238.4 L929.50,238.5 L929.00,238.6 L928.50,238.7 L928.00,238.7 L927.50,238.8 L927.00,238.9 L926.50,238.9 L926.00,239.0 L925.50,239.0 L925.00,239.0 L924.50,239.1 L924.00,239.1 L923.50,239.1 L923.00,239.1 L922.50,239.1 L922.00,239.1 L921.50,239.0 L921.00,239.0 L920.50,239.0 L920.00,238.9 L919.50,238.9 L919.00,238.8 L918.50,238.7 L918.00,238.6 L917.50,238.5 L917.00,238.4 L916.50,238.3 L916.00,238.2 L915.50,238.1 L915.00,238.0 L914.50,237.8 L914.00,237.7 L913.50,237.5 L913.00,237.3 L912.50,237.2 L912.00,237.0 L911.50,236.8 L911.00,236.6 L910.50,236.4 L910.00,236.2 L909.50,235.9 L909.00,235.7 L908.50,235.4 L908.00,235.2 L907.50,234.9 L907.00,234.6 L906.50,234.3 L906.00,234.0 L905.50,233.7 L905.00,233.3 L904.50,232.9 L904.00,232.5 L903.50,232.0 L903.00,231.5 L902.50,230.9 L902.00,230.0 L901.80,229.1 L901.50,230.2 L901.00,231.0 L900.50,231.5 L900.00,232.0 L899.50,232.4 L899.00,232.7 L898.50,233.1 L898.00,233.4 L897.50,233.6 L897.00,233.9 L896.50,234.1 L896.00,234.3 L895.50,234.5 L895.00,234.7 L894.50,234.9 L894.00,235.1 L893.50,235.2 L893.00,235.4 L892.50,235.5 L892.00,235.7 L891.50,235.8 L891.00,235.9 L890.50,236.0 L890.00,236.1 L889.50,236.2 L889.00,236.3 L888.50,236.3 L888.00,236.4 L887.50,236.5 L887.00,236.5 L886.50,236.6 L886.00,236.6 L885.50,236.6 L885.00,236.6 L884.50,236.7 L884.00,236.7 L883.50,236.7 L883.00,236.7 L882.50,236.7 L882.00,236.6 L881.50,236.6 L881.00,236.6 L880.50,236.6 L880.00,236.5 L879.50,236.5 L879.00,236.4 L878.50,236.4 L878.00,236.3 L877.50,236.2 L877.00,236.1 L876.50,236.1 L876.00,236.0 L875.50,235.9 L875.00,235.7 L874.50,235.6 L874.00,235.5 L873.50,235.4 L873.00,235.2 L872.50,235.1 L872.00,234.9 L871.50,234.8 L871.00,234.6 L870.50,234.4 L870.00,234.3 L869.50,234.1 L869.00,233.9 L868.50,233.7 L868.00,233.4 L867.50,233.2 L867.00,233.0 L866.50,232.7 L866.00,232.4 L865.50,232.2 L865.00,231.9 L864.50,231.5 L864.00,231.2 L863.50,230.8 L863.00,230.4 L862.50,230.0 L862.00,229.4 L861.50,228.8 L861.00,227.4 L860.50,228.7 L860.00,229.4 L859.50,229.8 L859.00,230.3 L858.50,230.6 L858.00,231.0 L857.50,231.3 L857.00,231.5 L856.50,231.8 L856.00,232.0 L855.50,232.3 L855.00,232.5 L854.50,232.7 L854.00,232.9 L853.50,233.0 L853.00,233.2 L852.50,233.4 L852.00,233.5 L851.50,233.7 L851.00,233.8 L850.50,233.9 L850.00,234.0 L849.50,234.1 L849.00,234.2 L848.50,234.3 L848.00,234.4 L847.50,234.5 L847.00,234.6 L846.50,234.6 L846.00,234.7 L845.50,234.7 L845.00,234.7 L844.50,234.8 L844.00,234.8 L843.50,234.8 L843.00,234.8 L842.50,234.8 L842.00,234.8 L841.50,234.8 L841.00,234.8 L840.50,234.8 L840.00,234.7 L839.50,234.7 L839.00,234.7 L838.50,234.6 L838.00,234.5 L837.50,234.5 L837.00,234.4 L836.50,234.3 L836.00,234.2 L835.50,234.1 L835.00,234.0 L834.50,233.9 L834.00,233.8 L833.50,233.7 L833.00,233.6 L832.50,233.4 L832.00,233.3 L831.50,233.2 L831.00,233.0 L830.50,232.8 L830.00,232.7 L829.50,232.5 L829.00,232.3 L828.50,232.1 L828.00,231.9 L827.50,231.7 L827.00,231.5 L826.50,231.3 L826.00,231.0 L825.50,230.8 L825.00,230.5 L824.50,230.2 L824.00,230.0 L823.50,229.6 L823.00,229.3 L822.50,229.0 L822.00,228.6 L821.50,228.1 L821.00,227.6 L820.50,226.9 L820.20,226.0 L820.00,226.7 L819.50,227.4 L819.00,227.9 L818.50,228.3 L818.00,228.7 L817.50,229.0 L817.00,229.2 L816.50,229.5 L816.00,229.7 L815.50,229.9 L815.00,230.1 L814.50,230.3 L814.00,230.5 L813.50,230.6 L813.00,230.8 L812.50,230.9 L812.00,231.0 L811.50,231.1 L811.00,231.3 L810.50,231.4 L810.00,231.5 L809.50,231.6 L809.00,231.6 L808.50,231.7 L808.00,231.8 L807.50,231.8 L807.00,231.9 L806.50,232.0 L806.00,232.0 L805.50,232.0 L805.00,232.1 L804.50,232.1 L804.00,232.1 L803.50,232.1 L803.00,232.1 L802.50,232.1 L802.00,232.1 L801.50,232.1 L801.00,232.1 L800.50,232.1 L800.00,232.1 L799.50,232.0 L799.00,232.0 L798.50,232.0 L798.00,231.9 L797.50,231.9 L797.00,231.8 L796.50,231.7 L796.00,231.7 L795.50,231.6 L795.00,231.5 L794.50,231.4 L794.00,231.3 L793.50,231.2 L793.00,231.1 L792.50,231.0 L792.00,230.9 L791.50,230.7 L791.00,230.6 L790.50,230.5 L790.00,230.3 L789.50,230.2 L789.00,230.0 L788.50,229.8 L788.00,229.7 L787.50,229.5 L787.00,229.3 L786.50,229.1 L786.00,228.9 L785.50,228.7 L785.00,228.5 L784.50,228.2 L784.00,228.0 L783.50,227.7 L783.00,227.4 L782.50,227.1 L782.00,226.8 L781.50,226.5 L781.00,226.1 L780.50,225.6 L780.00,225.1 L779.50,224.3 L779.40,223.8 L779.00,224.8 L778.50,225.4 L778.00,225.8 L777.50,226.1 L777.00,226.4 L776.50,226.7 L776.00,227.0 L775.50,227.2 L775.00,227.4 L774.50,227.6 L774.00,227.8 L773.50,228.0 L773.00,228.1 L772.50,228.3 L772.00,228.4 L771.50,228.6 L771.00,228.7 L770.50,228.8 L770.00,228.9 L769.50,229.0 L769.00,229.1 L768.50,229.2 L768.00,229.3 L767.50,229.4 L767.00,229.4 L766.50,229.5 L766.00,229.6 L765.50,229.6 L765.00,229.7 L764.50,229.7 L764.00,229.8 L763.50,229.8 L763.00,229.8 L762.50,229.8 L762.00,229.8 L761.50,229.9 L761.00,229.9 L760.50,229.9 L760.00,229.8 L759.50,229.8 L759.00,229.8 L758.50,229.8 L758.00,229.8 L757.50,229.7 L757.00,229.7 L756.50,229.6 L756.00,229.6 L755.50,229.5 L755.00,229.4 L754.50,229.4 L754.00,229.3 L753.50,229.2 L753.00,229.1 L752.50,229.0 L752.00,228.9 L751.50,228.8 L751.00,228.7 L750.50,228.6 L750.00,228.5 L749.50,228.3 L749.00,228.2 L748.50,228.1 L748.00,227.9 L747.50,227.8 L747.00,227.6 L746.50,227.4 L746.00,227.3 L745.50,227.1 L745.00,226.9 L744.50,226.7 L744.00,226.5 L743.50,226.2 L743.00,226.0 L742.50,225.7 L742.00,225.5 L741.50,225.2 L741.00,224.9 L740.50,224.5 L740.00,224.2 L739.50,223.7 L739.00,223.1 L738.60,222.1 L738.50,222.6 L738.00,223.3 L737.50,223.8 L737.00,224.2 L736.50,224.5 L736.00,224.8 L735.50,225.1 L735.00,225.3 L734.50,225.5 L734.00,225.7 L733.50,225.9 L733.00,226.1 L732.50,226.3 L732.00,226.5 L731.50,226.6 L731.00,226.7 L730.50,226.9 L730.00,227.0 L729.50,227.1 L729.00,227.2 L728.50,227.3 L728.00,227.4 L727.50,227.5 L727.00,227.6 L726.50,227.7 L726.00,227.8 L725.50,227.8 L725.00,227.9 L724.50,227.9 L724.00,228.0 L723.50,228.0 L723.00,228.1 L722.50,228.1 L722.00,228.1 L721.50,228.2 L721.00,228.2 Z" fill="#008000" stroke="none"/><path d="M722,933 V942 M787,933 V942 M852,933 V942 M918,933 V942 M983,933 V942 M1048,933 V942 M1114,933 V942 M1179,933 V942 M1244,933 V942" stroke="#8c8c8c" stroke-width="2"/><text x="722.0" y="958" text-anchor="middle" class="tl">0µs</text><text x="787.2" y="958" text-anchor="middle" class="tl">50µs</text><text x="852.5" y="958" text-anchor="middle" class="tl">100µs</text><text x="917.8" y="958" text-anchor="middle" class="tl">150µs</text><text x="983.0" y="958" text-anchor="middle" class="tl">200µs</text><text x="1048.2" y="958" text-anchor="middle" class="tl">250µs</text><text x="1113.5" y="958" text-anchor="middle" class="tl">300µs</text><text x="1178.8" y="958" text-anchor="middle" class="tl">350µs</text><text x="1244.0" y="958" text-anchor="middle" class="tl">400µs</text></svg><svg class="abs" style="left:12px;top:131px" width="618" height="832" viewBox="12 131 618 832"><rect x="12" y="131" width="618" height="832" fill="#c0c0c0"/><text x="319.2" y="347.90000000000003" text-anchor="start" class="st" textLength="57.9" lengthAdjust="spacingAndGlyphs" fill="#000000">.include TS974.lib</text><text x="316.3" y="358.8" text-anchor="start" class="st" textLength="63.1" lengthAdjust="spacingAndGlyphs" fill="#000000">.tran 0 22ms 20ms</text><text x="283.1" y="369.8" text-anchor="start" class="st" textLength="145.4" lengthAdjust="spacingAndGlyphs" fill="#000000">.model ASW SW(Ron=7 Roff=1G Vt=0.5V)</text><text x="22.1" y="469.0" text-anchor="start" class="st" textLength="162.7" lengthAdjust="spacingAndGlyphs" fill="#000000">.param fe=1MegHz df=8kHz fs=fe+df ts=1/fs</text><path d="M264,361.5 H274 V373.5 L269,378.5 L264,373.5 Z" stroke="#0000ff" stroke-width="2" fill="none"/><text x="0" y="0" class="st" transform="translate(272,370.5) rotate(-90)" text-anchor="middle" fill="#000000">Vb</text><path d="M269,378 L269,384" stroke="#0000ff" stroke-width="2" fill="none" stroke-linecap="square"/><path d="M269.0,384.5 L269.0,386.8 L264.1,388.9 L273.9,394.5 L264.1,400.6 L273.9,405.5 L269.0,409.3 L269.0,411.0" stroke="#000080" stroke-width="2" fill="none"/><path d="M269,411 L269,416" stroke="#0000ff" stroke-width="2" fill="none" stroke-linecap="square"/><text x="253.2" y="394.7" text-anchor="start" class="st" textLength="8.8" lengthAdjust="spacingAndGlyphs" fill="#000000">R1</text><text x="250.2" y="406.6" text-anchor="start" class="st" textLength="11.8" lengthAdjust="spacingAndGlyphs" fill="#000000">10k</text><text x="278.5" y="413.7" text-anchor="start" class="st" textLength="13.9" lengthAdjust="spacingAndGlyphs" fill="#000000">Vref</text><path d="M242,437 L242,416 L401.6,416" stroke="#0000ff" stroke-width="2" fill="none" stroke-linecap="square"/><rect x="266.5" y="413.5" width="5" height="5" fill="#0000ff"/><rect x="294.5" y="413.5" width="5" height="5" fill="#0000ff"/><rect x="393.5" y="413.5" width="5" height="5" fill="#0000ff"/><rect x="431.5" y="413.5" width="5" height="5" fill="#0000ff"/><path d="M242,437 V455" stroke="#000080" stroke-width="2" fill="none"/><rect x="236" y="442" width="13" height="4" fill="#000080"/><path d="M242,455 L242,471" stroke="#0000ff" stroke-width="2" fill="none" stroke-linecap="square"/><path d="M236,472 H248 L242,478 Z" stroke="#0000ff" stroke-width="2" fill="none" stroke-linejoin="miter"/><text x="240" y="438.6" text-anchor="end" class="st" fill="#000000">C5</text><text x="240.5" y="454.8" text-anchor="end" class="st" fill="#000000">100n</text><path d="M269,416 L269,434" stroke="#0000ff" stroke-width="2" fill="none" stroke-linecap="square"/><path d="M269.0,434.2 L269.0,436.5 L264.1,438.6 L273.9,444.2 L264.1,450.3 L273.9,455.2 L269.0,459.0 L269.0,460.7" stroke="#000080" stroke-width="2" fill="none"/><path d="M269,460.7 L269,471" stroke="#0000ff" stroke-width="2" fill="none" stroke-linecap="square"/><path d="M263,472 H275 L269,478 Z" stroke="#0000ff" stroke-width="2" fill="none" stroke-linejoin="miter"/><text x="253" y="443.6" text-anchor="start" class="st" textLength="9.3" lengthAdjust="spacingAndGlyphs" fill="#000000">R2</text><text x="250" y="456.90000000000003" text-anchor="start" class="st" textLength="12.3" lengthAdjust="spacingAndGlyphs" fill="#000000">10k</text><path d="M297,416 L297,434" stroke="#0000ff" stroke-width="2" fill="none" stroke-linecap="square"/><path d="M297.0,434.2 L297.0,436.5 L301.9,438.6 L292.1,444.2 L301.9,450.3 L292.1,455.2 L297.0,459.0 L297.0,460.7" stroke="#000080" stroke-width="2" fill="none"/><path d="M297,460.7 L297,703 L309,703" stroke="#0000ff" stroke-width="2" fill="none" stroke-linecap="square"/><text x="281" y="442.8" text-anchor="start" class="st" textLength="9" lengthAdjust="spacingAndGlyphs" fill="#000000">R3</text><text x="282" y="454.8" text-anchor="start" class="st" textLength="8" lengthAdjust="spacingAndGlyphs" fill="#000000">1k</text><rect x="294.5" y="474.5" width="5" height="5" fill="#0000ff"/><rect x="294.5" y="535.5" width="5" height="5" fill="#0000ff"/><rect x="294.5" y="606.5" width="5" height="5" fill="#0000ff"/><rect x="294.5" y="639.5" width="5" height="5" fill="#0000ff"/><path d="M297,477 L309,477" stroke="#0000ff" stroke-width="2" fill="none" stroke-linecap="square"/><circle cx="322" cy="477" r="9.8" stroke="#000080" stroke-width="2" fill="none"/><path d="M309,477 H316 M316,475 V477 M319,468.5 L329,477 M332,477 H335" stroke="#000080" stroke-width="2" fill="none"/><path d="M313,487 V494 M330,487 V494" stroke="#000080" stroke-width="2" fill="none"/><rect x="315" y="491" width="2.5" height="3" fill="#000080"/><rect x="326" y="491" width="2.5" height="3" fill="#000080"/><path d="M335,477 L440,477" stroke="#0000ff" stroke-width="2" fill="none" stroke-linecap="square"/><rect x="349.5" y="474.5" width="5" height="5" fill="#0000ff"/><text x="347.4" y="474.3" text-anchor="start" class="st" textLength="7.6" lengthAdjust="spacingAndGlyphs" fill="#000000">I0</text><path d="M313,494 L198,494" stroke="#0000ff" stroke-width="2" fill="none" stroke-linecap="square"/><path d="M330,494 L330,499" stroke="#0000ff" stroke-width="2" fill="none" stroke-linecap="square"/><path d="M324,500 H336 L330,506 Z" stroke="#0000ff" stroke-width="2" fill="none" stroke-linejoin="miter"/><text x="322" y="454.8" text-anchor="middle" class="st" fill="#000000">S1</text><text x="323" y="462.8" text-anchor="middle" class="st" fill="#000000">ASW</text><path d="M297,538 L309,538" stroke="#0000ff" stroke-width="2" fill="none" stroke-linecap="square"/><circle cx="322" cy="538" r="9.8" stroke="#000080" stroke-width="2" fill="none"/><path d="M309,538 H316 M316,536 V538 M319,529.5 L329,538 M332,538 H335" stroke="#000080" stroke-width="2" fill="none"/><path d="M313,548 V555 M330,548 V555" stroke="#000080" stroke-width="2" fill="none"/><rect x="315" y="552" width="2.5" height="3" fill="#000080"/><rect x="326" y="552" width="2.5" height="3" fill="#000080"/><path d="M335,538 L511,538 L511,477 L517,477" stroke="#0000ff" stroke-width="2" fill="none" stroke-linecap="square"/><rect x="371.5" y="535.5" width="5" height="5" fill="#0000ff"/><text x="365.7" y="535.3" text-anchor="start" class="st" textLength="15.5" lengthAdjust="spacingAndGlyphs" fill="#000000">I180</text><path d="M313,554 L198,554" stroke="#0000ff" stroke-width="2" fill="none" stroke-linecap="square"/><path d="M330,554 L330,581" stroke="#0000ff" stroke-width="2" fill="none" stroke-linecap="square"/><path d="M324,582 H336 L330,588 Z" stroke="#0000ff" stroke-width="2" fill="none" stroke-linejoin="miter"/><text x="322" y="515.8" text-anchor="middle" class="st" fill="#000000">S2</text><text x="323" y="523.8" text-anchor="middle" class="st" fill="#000000">ASW</text><path d="M297,642 L309,642" stroke="#0000ff" stroke-width="2" fill="none" stroke-linecap="square"/><circle cx="322" cy="642" r="9.8" stroke="#000080" stroke-width="2" fill="none"/><path d="M309,642 H316 M316,640 V642 M319,633.5 L329,642 M332,642 H335" stroke="#000080" stroke-width="2" fill="none"/><path d="M313,652 V659 M330,652 V659" stroke="#000080" stroke-width="2" fill="none"/><rect x="315" y="656" width="2.5" height="3" fill="#000080"/><rect x="326" y="656" width="2.5" height="3" fill="#000080"/><path d="M335,642 L440,642" stroke="#0000ff" stroke-width="2" fill="none" stroke-linecap="square"/><rect x="349.5" y="639.5" width="5" height="5" fill="#0000ff"/><text x="344.6" y="639.3" text-anchor="start" class="st" textLength="13.4" lengthAdjust="spacingAndGlyphs" fill="#000000">Q90</text><path d="M313,659 L198,659" stroke="#0000ff" stroke-width="2" fill="none" stroke-linecap="square"/><path d="M330,659 L330,663.5" stroke="#0000ff" stroke-width="2" fill="none" stroke-linecap="square"/><path d="M324,664.5 H336 L330,670.5 Z" stroke="#0000ff" stroke-width="2" fill="none" stroke-linejoin="miter"/><text x="322" y="619.8" text-anchor="middle" class="st" fill="#000000">S3</text><text x="323" y="627.8" text-anchor="middle" class="st" fill="#000000">ASW</text><path d="M297,703 L309,703" stroke="#0000ff" stroke-width="2" fill="none" stroke-linecap="square"/><circle cx="322" cy="703" r="9.8" stroke="#000080" stroke-width="2" fill="none"/><path d="M309,703 H316 M316,701 V703 M319,694.5 L329,703 M332,703 H335" stroke="#000080" stroke-width="2" fill="none"/><path d="M313,713 V720 M330,713 V720" stroke="#000080" stroke-width="2" fill="none"/><rect x="315" y="717" width="2.5" height="3" fill="#000080"/><rect x="326" y="717" width="2.5" height="3" fill="#000080"/><path d="M335,703 L511,703 L511,642 L517,642" stroke="#0000ff" stroke-width="2" fill="none" stroke-linecap="square"/><rect x="371.5" y="700.5" width="5" height="5" fill="#0000ff"/><text x="365" y="700.3" text-anchor="start" class="st" textLength="17" lengthAdjust="spacingAndGlyphs" fill="#000000">Q270</text><path d="M313,719 L198,719" stroke="#0000ff" stroke-width="2" fill="none" stroke-linecap="square"/><path d="M330,719 L330,747" stroke="#0000ff" stroke-width="2" fill="none" stroke-linecap="square"/><path d="M324,748 H336 L330,754 Z" stroke="#0000ff" stroke-width="2" fill="none" stroke-linejoin="miter"/><text x="322" y="680.8" text-anchor="middle" class="st" fill="#000000">S4</text><text x="323" y="688.8" text-anchor="middle" class="st" fill="#000000">ASW</text><path d="M352,477 L352,549" stroke="#0000ff" stroke-width="2" fill="none" stroke-linecap="square"/><path d="M374,538 L374,549" stroke="#0000ff" stroke-width="2" fill="none" stroke-linecap="square"/><path d="M352,549 V557 M346,557 H358 M346,561 H358 M352,561 V569" stroke="#000080" stroke-width="2" fill="none"/><path d="M374,549 V557 M368,557 H380 M368,561 H380 M374,561 V569" stroke="#000080" stroke-width="2" fill="none"/><path d="M352,569 L352,581" stroke="#0000ff" stroke-width="2" fill="none" stroke-linecap="square"/><path d="M374,569 L374,581" stroke="#0000ff" stroke-width="2" fill="none" stroke-linecap="square"/><path d="M346,582 H358 L352,588 Z" stroke="#0000ff" stroke-width="2" fill="none" stroke-linejoin="miter"/><path d="M368,582 H380 L374,588 Z" stroke="#0000ff" stroke-width="2" fill="none" stroke-linejoin="miter"/><text x="355" y="553.5" text-anchor="start" class="st" textLength="13.5" lengthAdjust="spacingAndGlyphs" fill="#000000">C10</text><text x="355" y="570.9" text-anchor="start" class="st" textLength="12" lengthAdjust="spacingAndGlyphs" fill="#000000">56n</text><text x="377" y="553.5" text-anchor="start" class="st" textLength="13" lengthAdjust="spacingAndGlyphs" fill="#000000">C12</text><text x="377" y="570.9" text-anchor="start" class="st" textLength="12" lengthAdjust="spacingAndGlyphs" fill="#000000">56n</text><path d="M352,642 L352,715" stroke="#0000ff" stroke-width="2" fill="none" stroke-linecap="square"/><path d="M374,703 L374,715" stroke="#0000ff" stroke-width="2" fill="none" stroke-linecap="square"/><path d="M352,715 V723 M346,723 H358 M346,727 H358 M352,727 V735" stroke="#000080" stroke-width="2" fill="none"/><path d="M374,715 V723 M368,723 H380 M368,727 H380 M374,727 V735" stroke="#000080" stroke-width="2" fill="none"/><path d="M352,735 L352,747" stroke="#0000ff" stroke-width="2" fill="none" stroke-linecap="square"/><path d="M374,735 L374,747" stroke="#0000ff" stroke-width="2" fill="none" stroke-linecap="square"/><path d="M346,748 H358 L352,754 Z" stroke="#0000ff" stroke-width="2" fill="none" stroke-linejoin="miter"/><path d="M368,748 H380 L374,754 Z" stroke="#0000ff" stroke-width="2" fill="none" stroke-linejoin="miter"/><text x="355" y="718.3" text-anchor="start" class="st" textLength="13.5" lengthAdjust="spacingAndGlyphs" fill="#000000">C11</text><text x="355" y="736.0" text-anchor="start" class="st" textLength="12" lengthAdjust="spacingAndGlyphs" fill="#000000">56n</text><text x="377" y="718.3" text-anchor="start" class="st" textLength="13" lengthAdjust="spacingAndGlyphs" fill="#000000">C13</text><text x="377" y="736.0" text-anchor="start" class="st" textLength="12" lengthAdjust="spacingAndGlyphs" fill="#000000">56n</text><path d="M396,416 L396,582 L401.6,582" stroke="#0000ff" stroke-width="2" fill="none" stroke-linecap="square"/><path d="M16,494 L22.5,487.5 V500.5 Z" stroke="#0000ff" stroke-width="2" fill="none" stroke-linejoin="miter"/><path d="M22,494 L171,494" stroke="#0000ff" stroke-width="2" fill="none" stroke-linecap="square"/><circle cx="184" cy="494" r="10" stroke="#000080" stroke-width="2" fill="none"/><path d="M171,494 H174 M194,494 H197" stroke="#000080" stroke-width="2" fill="none"/><path d="M187,485 Q189.5,489 188,492 L181,496 Q178,499 183,503" stroke="#000080" stroke-width="2" fill="none"/><path d="M197,494 L200,494" stroke="#0000ff" stroke-width="2" fill="none" stroke-linecap="square"/><text x="184" y="480.7" text-anchor="middle" class="st" fill="#000000">V2</text><text x="199.5" y="491.8" text-anchor="start" class="st" textLength="19.1" lengthAdjust="spacingAndGlyphs" fill="#000000">CLK0</text><text x="113" y="512.0" text-anchor="start" class="st" textLength="141" lengthAdjust="spacingAndGlyphs" fill="#000000">PULSE(0 1 {0*ts/4} 1ns 1ns {ts/4} {ts})</text><path d="M16,554 L22.5,547.5 V560.5 Z" stroke="#0000ff" stroke-width="2" fill="none" stroke-linejoin="miter"/><path d="M22,554 L171,554" stroke="#0000ff" stroke-width="2" fill="none" stroke-linecap="square"/><circle cx="184" cy="554" r="10" stroke="#000080" stroke-width="2" fill="none"/><path d="M171,554 H174 M194,554 H197" stroke="#000080" stroke-width="2" fill="none"/><path d="M187,545 Q189.5,549 188,552 L181,556 Q178,559 183,563" stroke="#000080" stroke-width="2" fill="none"/><path d="M197,554 L200,554" stroke="#0000ff" stroke-width="2" fill="none" stroke-linecap="square"/><text x="184" y="540.6999999999999" text-anchor="middle" class="st" fill="#000000">V3</text><text x="200.4" y="551.8" text-anchor="start" class="st" textLength="26.4" lengthAdjust="spacingAndGlyphs" fill="#000000">CLK180</text><text x="113" y="572.0" text-anchor="start" class="st" textLength="141" lengthAdjust="spacingAndGlyphs" fill="#000000">PULSE(0 1 {2*ts/4} 1ns 1ns {ts/4} {ts})</text><path d="M16,659 L22.5,652.5 V665.5 Z" stroke="#0000ff" stroke-width="2" fill="none" stroke-linejoin="miter"/><path d="M22,659 L171,659" stroke="#0000ff" stroke-width="2" fill="none" stroke-linecap="square"/><circle cx="184" cy="659" r="10" stroke="#000080" stroke-width="2" fill="none"/><path d="M171,659 H174 M194,659 H197" stroke="#000080" stroke-width="2" fill="none"/><path d="M187,650 Q189.5,654 188,657 L181,661 Q178,664 183,668" stroke="#000080" stroke-width="2" fill="none"/><path d="M197,659 L200,659" stroke="#0000ff" stroke-width="2" fill="none" stroke-linecap="square"/><text x="184" y="645.6999999999999" text-anchor="middle" class="st" fill="#000000">V4</text><text x="203" y="656.8" text-anchor="start" class="st" textLength="21.8" lengthAdjust="spacingAndGlyphs" fill="#000000">CLK90</text><text x="117" y="677.0" text-anchor="start" class="st" textLength="133" lengthAdjust="spacingAndGlyphs" fill="#000000">PULSE(0 1 {ts/4} 1ns 1ns {ts/4} {ts})</text><path d="M16,719 L22.5,712.5 V725.5 Z" stroke="#0000ff" stroke-width="2" fill="none" stroke-linejoin="miter"/><path d="M22,719 L171,719" stroke="#0000ff" stroke-width="2" fill="none" stroke-linecap="square"/><circle cx="184" cy="719" r="10" stroke="#000080" stroke-width="2" fill="none"/><path d="M171,719 H174 M194,719 H197" stroke="#000080" stroke-width="2" fill="none"/><path d="M187,710 Q189.5,714 188,717 L181,721 Q178,724 183,728" stroke="#000080" stroke-width="2" fill="none"/><path d="M197,719 L200,719" stroke="#0000ff" stroke-width="2" fill="none" stroke-linecap="square"/><text x="184" y="705.6999999999999" text-anchor="middle" class="st" fill="#000000">V5</text><text x="200" y="716.8" text-anchor="start" class="st" textLength="27" lengthAdjust="spacingAndGlyphs" fill="#000000">CLK270</text><text x="113" y="737.0" text-anchor="start" class="st" textLength="141" lengthAdjust="spacingAndGlyphs" fill="#000000">PULSE(0 1 {3*ts/4} 1ns 1ns {ts/4} {ts})</text><path d="M165,587 H203 L214,609 L203,631 H165 Z" stroke="#000080" stroke-width="2" fill="none"/><text x="170" y="584.5999999999999" text-anchor="start" class="st" textLength="9" lengthAdjust="spacingAndGlyphs" fill="#000000">A1</text><text x="167" y="600.3" text-anchor="start" class="st" textLength="11" lengthAdjust="spacingAndGlyphs" fill="#000000">FM</text><text x="167" y="622.3" text-anchor="start" class="st" textLength="13" lengthAdjust="spacingAndGlyphs" fill="#000000">AM</text><text x="205" y="611.3" text-anchor="start" class="st" fill="#000000">Q</text><path d="M16,598 L22.5,591.5 V604.5 Z" stroke="#0000ff" stroke-width="2" fill="none" stroke-linejoin="miter"/><path d="M22,598 L164,598" stroke="#0000ff" stroke-width="2" fill="none" stroke-linecap="square"/><path d="M16,620 L22.5,613.5 V626.5 Z" stroke="#0000ff" stroke-width="2" fill="none" stroke-linejoin="miter"/><path d="M22,620 L77,620" stroke="#0000ff" stroke-width="2" fill="none" stroke-linecap="square"/><circle cx="90" cy="620" r="10" stroke="#000080" stroke-width="2" fill="none"/><path d="M77,620 H80 M100,620 H103" stroke="#000080" stroke-width="2" fill="none"/><path d="M93,611 Q95.5,615 94,618 L87,622 Q84,625 89,629" stroke="#000080" stroke-width="2" fill="none"/><path d="M103,620 L164,620" stroke="#0000ff" stroke-width="2" fill="none" stroke-linecap="square"/><path d="M165,632 L165,637" stroke="#0000ff" stroke-width="2" fill="none" stroke-linecap="square"/><path d="M159,638 H171 L165,644 Z" stroke="#0000ff" stroke-width="2" fill="none" stroke-linejoin="miter"/><text x="53" y="591.9" text-anchor="start" class="st" textLength="81.6" lengthAdjust="spacingAndGlyphs" fill="#000000">mark={fe} space={fe}</text><text x="90" y="606.5" text-anchor="middle" class="st" fill="#000000">V1</text><text x="31.9" y="637.8" text-anchor="start" class="st" textLength="116.4" lengthAdjust="spacingAndGlyphs" fill="#000000">SINE(0.65mV 0.35mV 1kHz 10ms)</text><path d="M215,609 L236,609" stroke="#0000ff" stroke-width="2" fill="none" stroke-linecap="square"/><text x="219" y="606.3" text-anchor="start" class="st" textLength="10.7" lengthAdjust="spacingAndGlyphs" fill="#000000">AM</text><path d="M236.0,609.0 L239.9,609.0 L241.2,604.7 L246.7,614.6 L252.4,604.7 L257.4,614.6 L261.7,609.0 L264.0,609.0" stroke="#000080" stroke-width="2" fill="none"/><text x="250" y="602.0" text-anchor="middle" class="st" fill="#000000">Ri</text><text x="250" y="622.0" text-anchor="middle" class="st" fill="#000000">50</text><path d="M264,609 L269,609" stroke="#0000ff" stroke-width="2" fill="none" stroke-linecap="square"/><path d="M269.4,609 H278.4 M278.4,603 V615 M282.4,603 V615 M282.4,609 H291.4" stroke="#000080" stroke-width="2" fill="none"/><path d="M291,609 L297,609" stroke="#0000ff" stroke-width="2" fill="none" stroke-linecap="square"/><text x="279" y="602.0" text-anchor="middle" class="st" fill="#000000">C7</text><text x="280.5" y="622.0" text-anchor="middle" class="st" fill="#000000">10n</text><text x="299" y="611.3" text-anchor="start" class="st" fill="#000000">HF</text><path d="M401.6,416.0 L405.5,416.0 L406.8,411.7 L412.3,421.6 L418.0,411.7 L423.0,421.6 L427.3,416.0 L429.6,416.0" stroke="#000080" stroke-width="2" fill="none"/><path d="M429.6,416 L440.5,416" stroke="#0000ff" stroke-width="2" fill="none" stroke-linecap="square"/><rect x="431.5" y="413.5" width="5" height="5" fill="#0000ff"/><path d="M434,416 L434,389 L445,389" stroke="#0000ff" stroke-width="2" fill="none" stroke-linecap="square"/><path d="M434,416 L434,466 L440,466" stroke="#0000ff" stroke-width="2" fill="none" stroke-linecap="square"/><path d="M445.5,389 H454.5 M454.5,383 V395 M458.5,383 V395 M458.5,389 H467.5" stroke="#000080" stroke-width="2" fill="none"/><path d="M467,389 L479.4,389" stroke="#0000ff" stroke-width="2" fill="none" stroke-linecap="square"/><path d="M479.4,389.0 L483.3,389.0 L484.6,384.7 L490.1,394.6 L495.8,384.7 L500.8,394.6 L505.1,389.0 L507.4,389.0" stroke="#000080" stroke-width="2" fill="none"/><path d="M507,389 L517,389" stroke="#0000ff" stroke-width="2" fill="none" stroke-linecap="square"/><rect x="508.9" y="386.5" width="5" height="5" fill="#0000ff"/><path d="M518,389 H538 M528,382 V396" stroke="#000080" stroke-width="1" fill="none"/><rect x="526" y="382" width="4" height="15" fill="#000080"/><path d="M518,389 H538" stroke="#000080" stroke-width="2" fill="none"/><path d="M538,389 L550,389 L550,472 L540,472" stroke="#0000ff" stroke-width="2" fill="none" stroke-linecap="square"/><path d="M440.5,416.0 L444.4,416.0 L445.7,411.7 L451.2,421.6 L456.9,411.7 L461.9,421.6 L466.2,416.0 L468.5,416.0" stroke="#000080" stroke-width="2" fill="none"/><path d="M468.5,416 L479,416" stroke="#0000ff" stroke-width="2" fill="none" stroke-linecap="square"/><rect x="471.2" y="413.5" width="5" height="5" fill="#0000ff"/><path d="M473.7,416 L473.7,472 L463,472" stroke="#0000ff" stroke-width="2" fill="none" stroke-linecap="square"/><path d="M479.0,416.0 L482.9,416.0 L484.2,411.7 L489.7,421.6 L495.4,411.7 L500.4,421.6 L504.7,416.0 L507.0,416.0" stroke="#000080" stroke-width="2" fill="none"/><path d="M507,416 L517,416" stroke="#0000ff" stroke-width="2" fill="none" stroke-linecap="square"/><rect x="508.9" y="413.5" width="5" height="5" fill="#0000ff"/><path d="M511.4,389 L511.4,466 L516,466" stroke="#0000ff" stroke-width="2" fill="none" stroke-linecap="square"/><path d="M517.0,416.0 L520.9,416.0 L522.2,411.7 L527.7,421.6 L533.4,411.7 L538.4,421.6 L542.7,416.0 L545.0,416.0" stroke="#000080" stroke-width="2" fill="none"/><path d="M545,416 L560,416" stroke="#0000ff" stroke-width="2" fill="none" stroke-linecap="square"/><rect x="547.5" y="413.5" width="5" height="5" fill="#0000ff"/><path d="M560.2,411 H583.2 L588.2,416 L583.2,421 H560.2 Z" stroke="#0000ff" stroke-width="2" fill="none"/><text x="562.2" y="418.3" text-anchor="start" class="st" textLength="19" lengthAdjust="spacingAndGlyphs" fill="#000000">VoutI</text><text x="457" y="380.5" text-anchor="middle" class="st" fill="#000000">C15</text><text x="455" y="401.0" text-anchor="middle" class="st" fill="#000000">10µ</text><text x="496.5" y="380.5" text-anchor="middle" class="st" fill="#000000">R5</text><text x="496" y="401.0" text-anchor="middle" class="st" fill="#000000">160</text><text x="527.5" y="380.5" text-anchor="middle" class="st" fill="#000000">C17</text><text x="528.5" y="401.0" text-anchor="middle" class="st" fill="#000000">220p</text><text x="414.6" y="408.7" text-anchor="middle" class="st" fill="#000000">R23</text><text x="415.0" y="428.90000000000003" text-anchor="middle" class="st" fill="#000000">56k</text><text x="454" y="408.7" text-anchor="middle" class="st" fill="#000000">R22</text><text x="454.4" y="428.90000000000003" text-anchor="middle" class="st" fill="#000000">56k</text><text x="492" y="408.7" text-anchor="middle" class="st" fill="#000000">R21</text><text x="492.4" y="428.90000000000003" text-anchor="middle" class="st" fill="#000000">56k</text><text x="531" y="408.7" text-anchor="middle" class="st" fill="#000000">R9</text><text x="531.4" y="428.90000000000003" text-anchor="middle" class="st" fill="#000000">56k</text><path d="M445.5,438 H455.5 V450 L450.5,455 L445.5,450 Z" stroke="#0000ff" stroke-width="2" fill="none"/><text x="0" y="0" class="st" transform="translate(453.5,447) rotate(-90)" text-anchor="middle" fill="#000000">Vb</text><path d="M450.5,455 L450.5,462" stroke="#0000ff" stroke-width="2" fill="none" stroke-linecap="square"/><path d="M440.3,461 L462.3,472 L440.3,483 Z" stroke="#000080" stroke-width="2" fill="none" stroke-linejoin="miter"/><path d="M442.3,464.5 H445.3 M442.3,477 H445.3" stroke="#000080" stroke-width="2" fill="none"/><path d="M450.6,462 V467 M450.6,478 V483" stroke="#000080" stroke-width="2" fill="none"/><path d="M450.5,483 L450.5,498.5" stroke="#0000ff" stroke-width="2" fill="none" stroke-linecap="square"/><path d="M444.5,499.5 H456.5 L450.5,505.5 Z" stroke="#0000ff" stroke-width="2" fill="none" stroke-linejoin="miter"/><text x="456.3" y="463.7" text-anchor="start" class="st" fill="#000000">U3</text><text x="456.3" y="485.90000000000003" text-anchor="start" class="st" textLength="20.0" lengthAdjust="spacingAndGlyphs" fill="#000000">TS974</text><path d="M522.8,438 H532.8 V450 L527.8,455 L522.8,450 Z" stroke="#0000ff" stroke-width="2" fill="none"/><text x="0" y="0" class="st" transform="translate(530.8,447) rotate(-90)" text-anchor="middle" fill="#000000">Vb</text><path d="M527.8,455 L527.8,462" stroke="#0000ff" stroke-width="2" fill="none" stroke-linecap="square"/><path d="M517.5,461 L539.5,472 L517.5,483 Z" stroke="#000080" stroke-width="2" fill="none" stroke-linejoin="miter"/><path d="M519.5,464.5 H522.5 M519.5,477 H522.5" stroke="#000080" stroke-width="2" fill="none"/><path d="M527.8,462 V467 M527.8,478 V483" stroke="#000080" stroke-width="2" fill="none"/><path d="M527.8,483 L527.8,498.5" stroke="#0000ff" stroke-width="2" fill="none" stroke-linecap="square"/><path d="M521.8,499.5 H533.8 L527.8,505.5 Z" stroke="#0000ff" stroke-width="2" fill="none" stroke-linejoin="miter"/><text x="533.5" y="463.7" text-anchor="start" class="st" fill="#000000">U1</text><text x="533.5" y="485.90000000000003" text-anchor="start" class="st" textLength="20.0" lengthAdjust="spacingAndGlyphs" fill="#000000">TS974</text><path d="M401.6,581.5 L405.5,581.5 L406.8,577.2 L412.3,587.1 L418.0,577.2 L423.0,587.1 L427.3,581.5 L429.6,581.5" stroke="#000080" stroke-width="2" fill="none"/><path d="M429.6,581.5 L440.5,581.5" stroke="#0000ff" stroke-width="2" fill="none" stroke-linecap="square"/><rect x="431.5" y="579.0" width="5" height="5" fill="#0000ff"/><path d="M434,581.5 L434,554.5 L445,554.5" stroke="#0000ff" stroke-width="2" fill="none" stroke-linecap="square"/><path d="M434,581.5 L434,631.5 L440,631.5" stroke="#0000ff" stroke-width="2" fill="none" stroke-linecap="square"/><path d="M445.5,554.5 H454.5 M454.5,548.5 V560.5 M458.5,548.5 V560.5 M458.5,554.5 H467.5" stroke="#000080" stroke-width="2" fill="none"/><path d="M467,554.5 L479.4,554.5" stroke="#0000ff" stroke-width="2" fill="none" stroke-linecap="square"/><path d="M479.4,554.5 L483.3,554.5 L484.6,550.2 L490.1,560.1 L495.8,550.2 L500.8,560.1 L505.1,554.5 L507.4,554.5" stroke="#000080" stroke-width="2" fill="none"/><path d="M507,554.5 L517,554.5" stroke="#0000ff" stroke-width="2" fill="none" stroke-linecap="square"/><rect x="508.9" y="552.0" width="5" height="5" fill="#0000ff"/><path d="M518,554.5 H538 M528,547.5 V561.5" stroke="#000080" stroke-width="1" fill="none"/><rect x="526" y="547.5" width="4" height="15" fill="#000080"/><path d="M518,554.5 H538" stroke="#000080" stroke-width="2" fill="none"/><path d="M538,554.5 L550,554.5 L550,637.5 L540,637.5" stroke="#0000ff" stroke-width="2" fill="none" stroke-linecap="square"/><path d="M440.5,581.5 L444.4,581.5 L445.7,577.2 L451.2,587.1 L456.9,577.2 L461.9,587.1 L466.2,581.5 L468.5,581.5" stroke="#000080" stroke-width="2" fill="none"/><path d="M468.5,581.5 L479,581.5" stroke="#0000ff" stroke-width="2" fill="none" stroke-linecap="square"/><rect x="471.2" y="579.0" width="5" height="5" fill="#0000ff"/><path d="M473.7,581.5 L473.7,637.5 L463,637.5" stroke="#0000ff" stroke-width="2" fill="none" stroke-linecap="square"/><path d="M479.0,581.5 L482.9,581.5 L484.2,577.2 L489.7,587.1 L495.4,577.2 L500.4,587.1 L504.7,581.5 L507.0,581.5" stroke="#000080" stroke-width="2" fill="none"/><path d="M507,581.5 L517,581.5" stroke="#0000ff" stroke-width="2" fill="none" stroke-linecap="square"/><rect x="508.9" y="579.0" width="5" height="5" fill="#0000ff"/><path d="M511.4,554.5 L511.4,631.5 L516,631.5" stroke="#0000ff" stroke-width="2" fill="none" stroke-linecap="square"/><path d="M517.0,581.5 L520.9,581.5 L522.2,577.2 L527.7,587.1 L533.4,577.2 L538.4,587.1 L542.7,581.5 L545.0,581.5" stroke="#000080" stroke-width="2" fill="none"/><path d="M545,581.5 L560,581.5" stroke="#0000ff" stroke-width="2" fill="none" stroke-linecap="square"/><rect x="547.5" y="579.0" width="5" height="5" fill="#0000ff"/><path d="M560.2,576.5 H583.2 L588.2,581.5 L583.2,586.5 H560.2 Z" stroke="#0000ff" stroke-width="2" fill="none"/><text x="562.2" y="583.8" text-anchor="start" class="st" textLength="19" lengthAdjust="spacingAndGlyphs" fill="#000000">VoutQ</text><text x="457" y="546.0" text-anchor="middle" class="st" fill="#000000">C14</text><text x="455" y="566.5" text-anchor="middle" class="st" fill="#000000">10µ</text><text x="496.5" y="546.0" text-anchor="middle" class="st" fill="#000000">R7</text><text x="496" y="566.5" text-anchor="middle" class="st" fill="#000000">160</text><text x="527.5" y="546.0" text-anchor="middle" class="st" fill="#000000">C18</text><text x="528.5" y="566.5" text-anchor="middle" class="st" fill="#000000">220p</text><text x="414.6" y="574.1999999999999" text-anchor="middle" class="st" fill="#000000">R26</text><text x="415.0" y="594.4" text-anchor="middle" class="st" fill="#000000">56k</text><text x="454" y="574.1999999999999" text-anchor="middle" class="st" fill="#000000">R25</text><text x="454.4" y="594.4" text-anchor="middle" class="st" fill="#000000">56k</text><text x="492" y="574.1999999999999" text-anchor="middle" class="st" fill="#000000">R24</text><text x="492.4" y="594.4" text-anchor="middle" class="st" fill="#000000">56k</text><text x="531" y="574.1999999999999" text-anchor="middle" class="st" fill="#000000">R10</text><text x="531.4" y="594.4" text-anchor="middle" class="st" fill="#000000">56k</text><path d="M445.5,603.5 H455.5 V615.5 L450.5,620.5 L445.5,615.5 Z" stroke="#0000ff" stroke-width="2" fill="none"/><text x="0" y="0" class="st" transform="translate(453.5,612.5) rotate(-90)" text-anchor="middle" fill="#000000">Vb</text><path d="M450.5,620.5 L450.5,627.5" stroke="#0000ff" stroke-width="2" fill="none" stroke-linecap="square"/><path d="M440.3,626.5 L462.3,637.5 L440.3,648.5 Z" stroke="#000080" stroke-width="2" fill="none" stroke-linejoin="miter"/><path d="M442.3,630.0 H445.3 M442.3,642.5 H445.3" stroke="#000080" stroke-width="2" fill="none"/><path d="M450.6,627.5 V632.5 M450.6,643.5 V648.5" stroke="#000080" stroke-width="2" fill="none"/><path d="M450.5,648.5 L450.5,664.0" stroke="#0000ff" stroke-width="2" fill="none" stroke-linecap="square"/><path d="M444.5,665.0 H456.5 L450.5,671.0 Z" stroke="#0000ff" stroke-width="2" fill="none" stroke-linejoin="miter"/><text x="456.3" y="629.1999999999999" text-anchor="start" class="st" fill="#000000">U4</text><text x="456.3" y="651.4" text-anchor="start" class="st" textLength="20.0" lengthAdjust="spacingAndGlyphs" fill="#000000">TS974</text><path d="M522.8,603.5 H532.8 V615.5 L527.8,620.5 L522.8,615.5 Z" stroke="#0000ff" stroke-width="2" fill="none"/><text x="0" y="0" class="st" transform="translate(530.8,612.5) rotate(-90)" text-anchor="middle" fill="#000000">Vb</text><path d="M527.8,620.5 L527.8,627.5" stroke="#0000ff" stroke-width="2" fill="none" stroke-linecap="square"/><path d="M517.5,626.5 L539.5,637.5 L517.5,648.5 Z" stroke="#000080" stroke-width="2" fill="none" stroke-linejoin="miter"/><path d="M519.5,630.0 H522.5 M519.5,642.5 H522.5" stroke="#000080" stroke-width="2" fill="none"/><path d="M527.8,627.5 V632.5 M527.8,643.5 V648.5" stroke="#000080" stroke-width="2" fill="none"/><path d="M527.8,648.5 L527.8,664.0" stroke="#0000ff" stroke-width="2" fill="none" stroke-linecap="square"/><path d="M521.8,665.0 H533.8 L527.8,671.0 Z" stroke="#0000ff" stroke-width="2" fill="none" stroke-linejoin="miter"/><text x="533.5" y="629.1999999999999" text-anchor="start" class="st" fill="#000000">U2</text><text x="533.5" y="651.4" text-anchor="start" class="st" textLength="20.0" lengthAdjust="spacingAndGlyphs" fill="#000000">TS974</text><path d="M599,384.5 L604,389.5 V400.5 H594 V389.5 Z" stroke="#0000ff" stroke-width="2" fill="none"/><text x="0" y="0" class="st" transform="translate(602,393.5) rotate(-90)" text-anchor="middle" fill="#000000">Vb</text><path d="M599,400.5 L599,528.5" stroke="#0000ff" stroke-width="2" fill="none" stroke-linecap="square"/><circle cx="599" cy="539.5" r="10" stroke="#000080" stroke-width="2" fill="none"/><path d="M599,528 V535 M596,532 H602 M596,546.5 H602 M599,549.5 V552" stroke="#000080" stroke-width="2" fill="none"/><path d="M599,552 L599,746" stroke="#0000ff" stroke-width="2" fill="none" stroke-linecap="square"/><path d="M593,747 H605 L599,753 Z" stroke="#0000ff" stroke-width="2" fill="none" stroke-linejoin="miter"/><text x="608" y="529.5999999999999" text-anchor="start" class="st" textLength="9" lengthAdjust="spacingAndGlyphs" fill="#000000">V6</text><text x="608" y="556.5999999999999" text-anchor="start" class="st" textLength="15" lengthAdjust="spacingAndGlyphs" fill="#000000">3.3V</text></svg><div id="strip" class="abs"></div><div class="abs" style="left:0;top:994px;width:1280px;height:30px;background:#004b5a"></div><svg class="abs" style="left:10px;top:1001px" width="17" height="17" viewBox="0 0 17 17"><path d="M0,2.3 L6.5,1.4 V7.8 H0 Z M7.5,1.2 L16,0 V7.8 H7.5 Z M0,8.8 H6.5 V15.2 L0,14.3 Z M7.5,8.8 H16 V16.6 L7.5,15.4 Z" fill="#fff"/></svg><div class="abs" style="left:36px;top:994px;width:258px;height:30px;background:#f0f4f5;border-top:1px solid #cfd6d8"></div><svg class="abs" style="left:47px;top:1000px" width="18" height="17" viewBox="0 0 18 17"><circle cx="11" cy="6.5" r="5" stroke="#000" stroke-width="1.3" fill="none"/><path d="M7.5,10 L1.5,16" stroke="#000" stroke-width="1.4"/></svg><div class="abs" style="left:76px;top:1001px;font-size:14px;color:#000">Suche</div><svg class="abs" style="left:306px;top:1000px" width="18" height="18" viewBox="0 0 18 18"><circle cx="9" cy="9" r="8" fill="#1a8fd8"/><path d="M4,10 Q5,4 10,4 Q15,5 14,10 H7 Q8,14 13,13" stroke="#7ee08a" stroke-width="2.5" fill="none"/></svg><svg class="abs" style="left:343px;top:1001px" width="18" height="16" viewBox="0 0 18 16"><path d="M1,1 H7 L9,3 H17 V15 H1 Z" fill="#f2c44d"/><rect x="1" y="5" width="16" height="10" fill="#ffd75e"/><rect x="5" y="9" width="8" height="6" fill="#2b78c2"/></svg><svg class="abs" style="left:381px;top:1000px" width="17" height="18" viewBox="0 0 17 18"><ellipse cx="8.5" cy="9" rx="8" ry="8.5" fill="#e0111d"/><ellipse cx="8.5" cy="9" rx="3.3" ry="6" fill="#004b5a"/></svg><svg class="abs" style="left:419px;top:1000px" width="14" height="18" viewBox="0 0 14 18"><rect x="0" y="0" width="14" height="18" fill="#7a8a94"/><rect x="2" y="2" width="10" height="3" fill="#d0e0e8"/><rect x="2.0" y="7.0" width="2.3" height="2.3" fill="#e8f0f4"/><rect x="5.5" y="7.0" width="2.3" height="2.3" fill="#e8f0f4"/><rect x="9.0" y="7.0" width="2.3" height="2.3" fill="#e8f0f4"/><rect x="2.0" y="10.5" width="2.3" height="2.3" fill="#e8f0f4"/><rect x="5.5" y="10.5" width="2.3" height="2.3" fill="#e8f0f4"/><rect x="9.0" y="10.5" width="2.3" height="2.3" fill="#e8f0f4"/><rect x="2.0" y="14.0" width="2.3" height="2.3" fill="#e8f0f4"/><rect x="5.5" y="14.0" width="2.3" height="2.3" fill="#e8f0f4"/><rect x="9.0" y="14.0" width="2.3" height="2.3" fill="#e8f0f4"/></svg><div class="abs" style="left:445px;top:994px;width:160px;height:30px;background:#006a7e"></div><div class="abs" style="left:445px;top:1022px;width:160px;height:2px;background:#9fe6f5"></div><svg class="abs" style="left:453px;top:1001px" width="17" height="17" viewBox="0 0 17 17"><path d="M1,2 V16 L15,8 M1,2 H16 L13,6" stroke="#000" stroke-width="1.5" fill="none"/><path d="M4,4 H6 L4.5,8 H8 L7.5,10 H2.5 Z M8,3.5 H15 L14,5.5 H12 L9.5,10.5 H7.5 L10,5.5 H7.5 Z" fill="#b00000"/></svg><div class="abs" style="left:473px;top:1002px;font-size:12px;color:#fff;letter-spacing:-0.1px">LTspice XVII - QSD-32...</div><svg class="abs" style="left:1096px;top:1001px" width="18" height="17" viewBox="0 0 18 17"><rect x="0" y="2" width="16" height="9" fill="#444"/><rect x="3" y="0" width="10" height="3" fill="#999"/><rect x="3" y="9" width="8" height="5" fill="#ddd"/><circle cx="11.5" cy="11.5" r="4.5" fill="#20c060"/></svg><svg class="abs" style="left:1120px;top:1001px" width="17" height="16" viewBox="0 0 17 16" fill="none" stroke="#fff" stroke-width="1.2"><path d="M1,5 H4 L8,1.5 V14.5 L4,11 H1 Z"/><path d="M10.5,5.5 Q12,8 10.5,10.5 M12.5,3.5 Q15,8 12.5,12.5"/><path d="M14.5,1.5 Q18,8 14.5,14.5" stroke="#6a9aa6"/></svg><svg class="abs" style="left:1144px;top:1000px" width="17" height="18" viewBox="0 0 17 18"><path d="M7,1 L13,3 V9 Q13,14 7,17 Q1,14 1,9 V3 Z" fill="#fff" stroke="#000" stroke-width="1"/><path d="M7,1 V17 M1,8 H13" stroke="#000" stroke-width="1.2"/><path d="M1.5,3.5 L7,1.5 V8 H1.5 Z M7,8 H12.5 V10 Q12,14 7,16.5 Z" fill="#000"/><circle cx="12" cy="13" r="4" fill="#1e9e4a"/><path d="M10,13 L11.5,14.5 L14,11.8" stroke="#fff" stroke-width="1.2" fill="none"/></svg><svg class="abs" style="left:1168px;top:1001px" width="17" height="16" viewBox="0 0 17 16" fill="none" stroke="#fff" stroke-width="1.1"><rect x="6" y="2" width="10" height="8"/><path d="M11,10 V14 M8,14 H14 M2.5,1 V15 M1,1 H4 V4 H1 Z M2.5,12 H6"/></svg><div class="abs" style="left:1195px;top:1002px;font-size:12px;letter-spacing:-0.7px;color:#fff">15:11</div><svg class="abs" style="left:1239px;top:1001px" width="17" height="17" viewBox="0 0 17 17"><path d="M1,1 H16 V12 H10 L8,15 L6,12 H1 Z" fill="none" stroke="#fff" stroke-width="1.2"/></svg><div class="abs" style="left:1276px;top:994px;width:1px;height:30px;background:#4a7f8a"></div></body></html>
